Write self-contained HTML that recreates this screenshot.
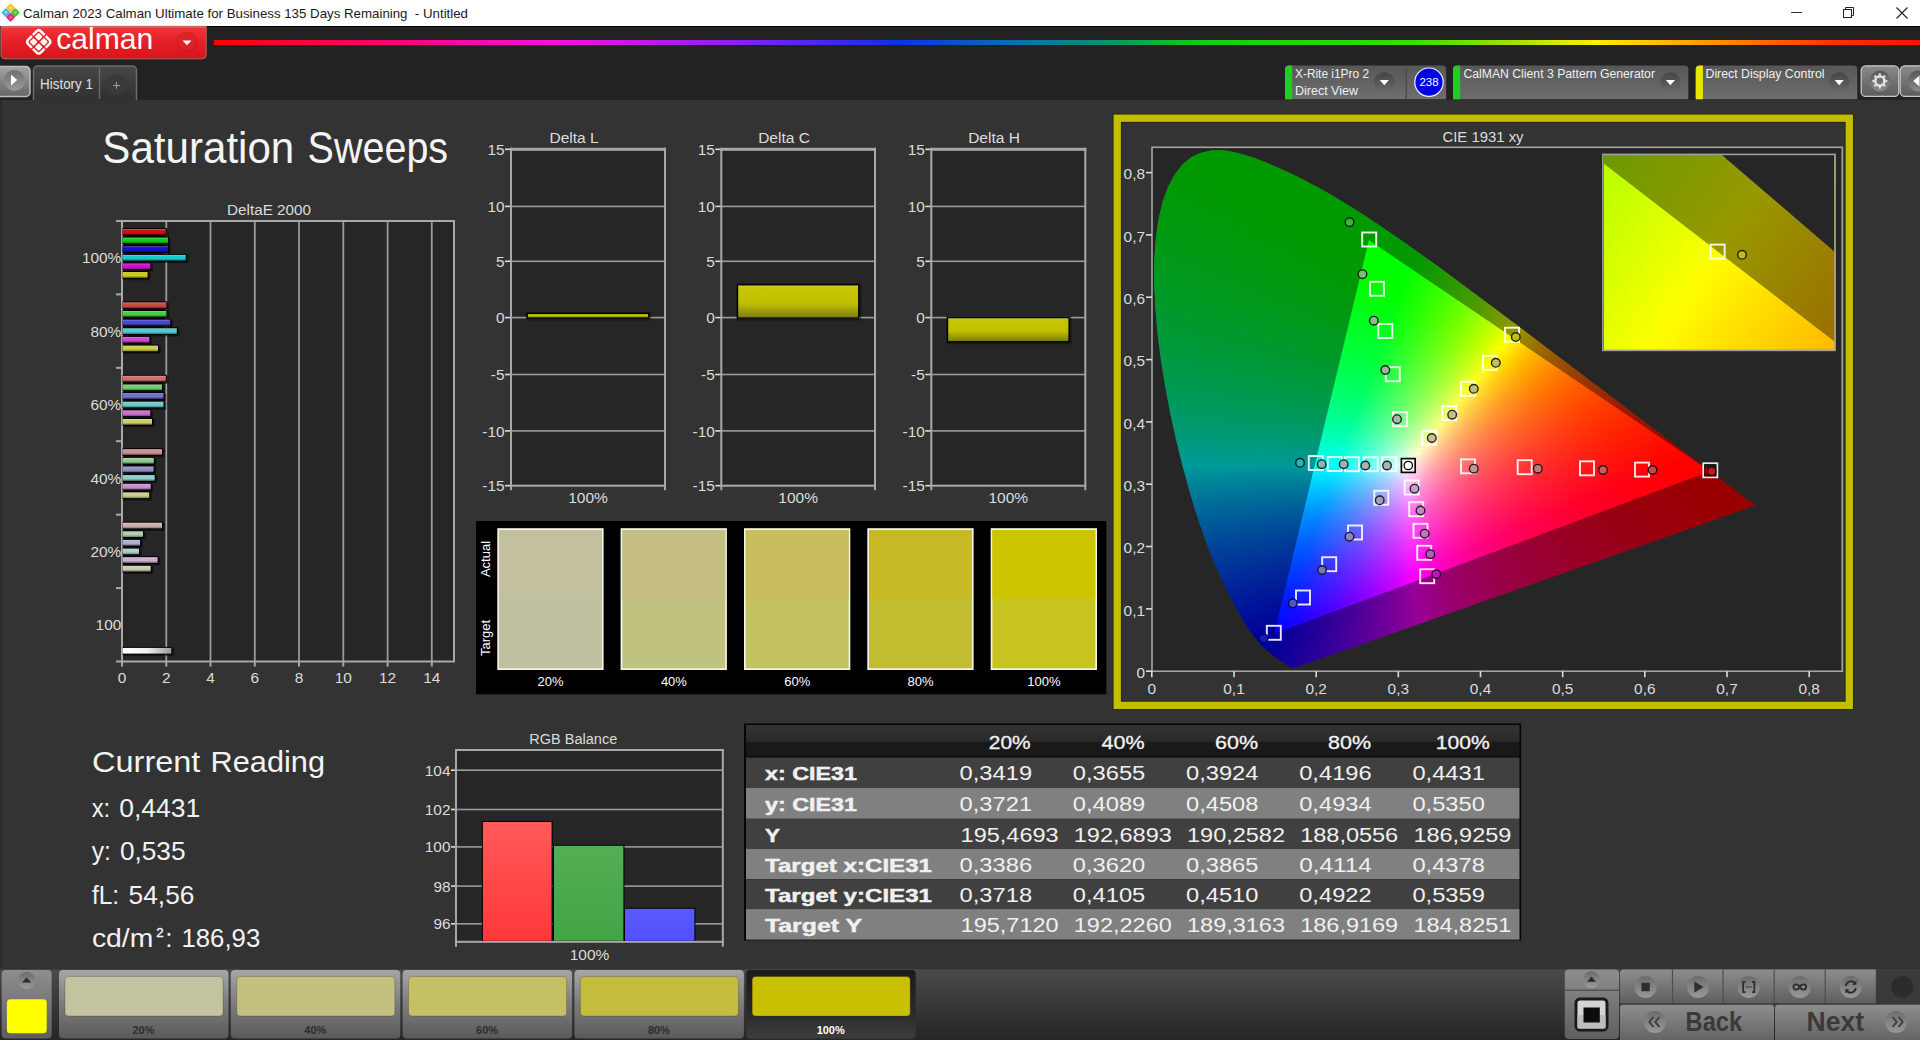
<!DOCTYPE html>
<html><head><meta charset="utf-8"><title>Calman</title>
<style>
html,body{margin:0;padding:0;background:#333;overflow:hidden}
body{width:1920px;height:1040px;position:relative;font-family:"Liberation Sans",sans-serif}
svg{position:absolute;left:0;top:0;font-family:"Liberation Sans",sans-serif}
.cie{position:absolute;overflow:hidden}
.cie i{display:block;height:2px}
.cie i.q{height:4px}
</style></head><body>
<svg width="1920" height="1040" viewBox="0 0 1920 1040">
<defs>
<linearGradient id="g1" x1="0" y1="0" x2="0" y2="1"><stop offset="0" stop-color="rgb(222, 100, 100)"/><stop offset="0.25" stop-color="rgb(205, 18, 18)"/><stop offset="0.6" stop-color="rgb(205, 18, 18)"/><stop offset="1" stop-color="rgb(127, 11, 11)"/></linearGradient>
<linearGradient id="g2" x1="0" y1="0" x2="0" y2="1"><stop offset="0" stop-color="rgb(100, 222, 100)"/><stop offset="0.25" stop-color="rgb(18, 205, 18)"/><stop offset="0.6" stop-color="rgb(18, 205, 18)"/><stop offset="1" stop-color="rgb(11, 127, 11)"/></linearGradient>
<linearGradient id="g3" x1="0" y1="0" x2="0" y2="1"><stop offset="0" stop-color="rgb(100, 100, 222)"/><stop offset="0.25" stop-color="rgb(18, 18, 205)"/><stop offset="0.6" stop-color="rgb(18, 18, 205)"/><stop offset="1" stop-color="rgb(11, 11, 127)"/></linearGradient>
<linearGradient id="g4" x1="0" y1="0" x2="0" y2="1"><stop offset="0" stop-color="rgb(100, 222, 222)"/><stop offset="0.25" stop-color="rgb(18, 205, 205)"/><stop offset="0.6" stop-color="rgb(18, 205, 205)"/><stop offset="1" stop-color="rgb(11, 127, 127)"/></linearGradient>
<linearGradient id="g5" x1="0" y1="0" x2="0" y2="1"><stop offset="0" stop-color="rgb(222, 100, 222)"/><stop offset="0.25" stop-color="rgb(205, 18, 205)"/><stop offset="0.6" stop-color="rgb(205, 18, 205)"/><stop offset="1" stop-color="rgb(127, 11, 127)"/></linearGradient>
<linearGradient id="g6" x1="0" y1="0" x2="0" y2="1"><stop offset="0" stop-color="rgb(222, 222, 100)"/><stop offset="0.25" stop-color="rgb(205, 205, 18)"/><stop offset="0.6" stop-color="rgb(205, 205, 18)"/><stop offset="1" stop-color="rgb(127, 127, 11)"/></linearGradient>
<linearGradient id="g7" x1="0" y1="0" x2="0" y2="1"><stop offset="0" stop-color="rgb(222, 136, 136)"/><stop offset="0.25" stop-color="rgb(205, 73, 73)"/><stop offset="0.6" stop-color="rgb(205, 73, 73)"/><stop offset="1" stop-color="rgb(127, 45, 45)"/></linearGradient>
<linearGradient id="g8" x1="0" y1="0" x2="0" y2="1"><stop offset="0" stop-color="rgb(136, 222, 136)"/><stop offset="0.25" stop-color="rgb(73, 205, 73)"/><stop offset="0.6" stop-color="rgb(73, 205, 73)"/><stop offset="1" stop-color="rgb(45, 127, 45)"/></linearGradient>
<linearGradient id="g9" x1="0" y1="0" x2="0" y2="1"><stop offset="0" stop-color="rgb(136, 136, 222)"/><stop offset="0.25" stop-color="rgb(73, 73, 205)"/><stop offset="0.6" stop-color="rgb(73, 73, 205)"/><stop offset="1" stop-color="rgb(45, 45, 127)"/></linearGradient>
<linearGradient id="g10" x1="0" y1="0" x2="0" y2="1"><stop offset="0" stop-color="rgb(136, 222, 222)"/><stop offset="0.25" stop-color="rgb(73, 205, 205)"/><stop offset="0.6" stop-color="rgb(73, 205, 205)"/><stop offset="1" stop-color="rgb(45, 127, 127)"/></linearGradient>
<linearGradient id="g11" x1="0" y1="0" x2="0" y2="1"><stop offset="0" stop-color="rgb(222, 136, 222)"/><stop offset="0.25" stop-color="rgb(205, 73, 205)"/><stop offset="0.6" stop-color="rgb(205, 73, 205)"/><stop offset="1" stop-color="rgb(127, 45, 127)"/></linearGradient>
<linearGradient id="g12" x1="0" y1="0" x2="0" y2="1"><stop offset="0" stop-color="rgb(222, 222, 136)"/><stop offset="0.25" stop-color="rgb(205, 205, 73)"/><stop offset="0.6" stop-color="rgb(205, 205, 73)"/><stop offset="1" stop-color="rgb(127, 127, 45)"/></linearGradient>
<linearGradient id="g13" x1="0" y1="0" x2="0" y2="1"><stop offset="0" stop-color="rgb(222, 162, 162)"/><stop offset="0.25" stop-color="rgb(205, 112, 112)"/><stop offset="0.6" stop-color="rgb(205, 112, 112)"/><stop offset="1" stop-color="rgb(127, 69, 69)"/></linearGradient>
<linearGradient id="g14" x1="0" y1="0" x2="0" y2="1"><stop offset="0" stop-color="rgb(162, 222, 162)"/><stop offset="0.25" stop-color="rgb(112, 205, 112)"/><stop offset="0.6" stop-color="rgb(112, 205, 112)"/><stop offset="1" stop-color="rgb(69, 127, 69)"/></linearGradient>
<linearGradient id="g15" x1="0" y1="0" x2="0" y2="1"><stop offset="0" stop-color="rgb(162, 162, 222)"/><stop offset="0.25" stop-color="rgb(112, 112, 205)"/><stop offset="0.6" stop-color="rgb(112, 112, 205)"/><stop offset="1" stop-color="rgb(69, 69, 127)"/></linearGradient>
<linearGradient id="g16" x1="0" y1="0" x2="0" y2="1"><stop offset="0" stop-color="rgb(162, 222, 222)"/><stop offset="0.25" stop-color="rgb(112, 205, 205)"/><stop offset="0.6" stop-color="rgb(112, 205, 205)"/><stop offset="1" stop-color="rgb(69, 127, 127)"/></linearGradient>
<linearGradient id="g17" x1="0" y1="0" x2="0" y2="1"><stop offset="0" stop-color="rgb(222, 162, 222)"/><stop offset="0.25" stop-color="rgb(205, 112, 205)"/><stop offset="0.6" stop-color="rgb(205, 112, 205)"/><stop offset="1" stop-color="rgb(127, 69, 127)"/></linearGradient>
<linearGradient id="g18" x1="0" y1="0" x2="0" y2="1"><stop offset="0" stop-color="rgb(222, 222, 162)"/><stop offset="0.25" stop-color="rgb(205, 205, 112)"/><stop offset="0.6" stop-color="rgb(205, 205, 112)"/><stop offset="1" stop-color="rgb(127, 127, 69)"/></linearGradient>
<linearGradient id="g19" x1="0" y1="0" x2="0" y2="1"><stop offset="0" stop-color="rgb(222, 183, 183)"/><stop offset="0.25" stop-color="rgb(205, 145, 145)"/><stop offset="0.6" stop-color="rgb(205, 145, 145)"/><stop offset="1" stop-color="rgb(127, 89, 89)"/></linearGradient>
<linearGradient id="g20" x1="0" y1="0" x2="0" y2="1"><stop offset="0" stop-color="rgb(183, 222, 183)"/><stop offset="0.25" stop-color="rgb(145, 205, 145)"/><stop offset="0.6" stop-color="rgb(145, 205, 145)"/><stop offset="1" stop-color="rgb(89, 127, 89)"/></linearGradient>
<linearGradient id="g21" x1="0" y1="0" x2="0" y2="1"><stop offset="0" stop-color="rgb(183, 183, 222)"/><stop offset="0.25" stop-color="rgb(145, 145, 205)"/><stop offset="0.6" stop-color="rgb(145, 145, 205)"/><stop offset="1" stop-color="rgb(89, 89, 127)"/></linearGradient>
<linearGradient id="g22" x1="0" y1="0" x2="0" y2="1"><stop offset="0" stop-color="rgb(183, 222, 222)"/><stop offset="0.25" stop-color="rgb(145, 205, 205)"/><stop offset="0.6" stop-color="rgb(145, 205, 205)"/><stop offset="1" stop-color="rgb(89, 127, 127)"/></linearGradient>
<linearGradient id="g23" x1="0" y1="0" x2="0" y2="1"><stop offset="0" stop-color="rgb(222, 183, 222)"/><stop offset="0.25" stop-color="rgb(205, 145, 205)"/><stop offset="0.6" stop-color="rgb(205, 145, 205)"/><stop offset="1" stop-color="rgb(127, 89, 127)"/></linearGradient>
<linearGradient id="g24" x1="0" y1="0" x2="0" y2="1"><stop offset="0" stop-color="rgb(222, 222, 183)"/><stop offset="0.25" stop-color="rgb(205, 205, 145)"/><stop offset="0.6" stop-color="rgb(205, 205, 145)"/><stop offset="1" stop-color="rgb(127, 127, 89)"/></linearGradient>
<linearGradient id="g25" x1="0" y1="0" x2="0" y2="1"><stop offset="0" stop-color="rgb(222, 203, 203)"/><stop offset="0.25" stop-color="rgb(205, 176, 176)"/><stop offset="0.6" stop-color="rgb(205, 176, 176)"/><stop offset="1" stop-color="rgb(127, 109, 109)"/></linearGradient>
<linearGradient id="g26" x1="0" y1="0" x2="0" y2="1"><stop offset="0" stop-color="rgb(203, 222, 203)"/><stop offset="0.25" stop-color="rgb(176, 205, 176)"/><stop offset="0.6" stop-color="rgb(176, 205, 176)"/><stop offset="1" stop-color="rgb(109, 127, 109)"/></linearGradient>
<linearGradient id="g27" x1="0" y1="0" x2="0" y2="1"><stop offset="0" stop-color="rgb(203, 203, 222)"/><stop offset="0.25" stop-color="rgb(176, 176, 205)"/><stop offset="0.6" stop-color="rgb(176, 176, 205)"/><stop offset="1" stop-color="rgb(109, 109, 127)"/></linearGradient>
<linearGradient id="g28" x1="0" y1="0" x2="0" y2="1"><stop offset="0" stop-color="rgb(203, 222, 222)"/><stop offset="0.25" stop-color="rgb(176, 205, 205)"/><stop offset="0.6" stop-color="rgb(176, 205, 205)"/><stop offset="1" stop-color="rgb(109, 127, 127)"/></linearGradient>
<linearGradient id="g29" x1="0" y1="0" x2="0" y2="1"><stop offset="0" stop-color="rgb(222, 203, 222)"/><stop offset="0.25" stop-color="rgb(205, 176, 205)"/><stop offset="0.6" stop-color="rgb(205, 176, 205)"/><stop offset="1" stop-color="rgb(127, 109, 127)"/></linearGradient>
<linearGradient id="g30" x1="0" y1="0" x2="0" y2="1"><stop offset="0" stop-color="rgb(222, 222, 203)"/><stop offset="0.25" stop-color="rgb(205, 205, 176)"/><stop offset="0.6" stop-color="rgb(205, 205, 176)"/><stop offset="1" stop-color="rgb(127, 127, 109)"/></linearGradient>
<linearGradient id="gw" x1="0" y1="0" x2="1" y2="0"><stop offset="0" stop-color="#fff"/><stop offset="0.5" stop-color="#f0f0f0"/><stop offset="1" stop-color="#9a9a9a"/></linearGradient>
<linearGradient id="gy" x1="0" y1="0" x2="0" y2="1"><stop offset="0" stop-color="#d6d640"/><stop offset="0.06" stop-color="#c6c606"/><stop offset="0.55" stop-color="#c0c000"/><stop offset="1" stop-color="#7e7e10"/></linearGradient>
<linearGradient id="gr" x1="0" y1="0" x2="0" y2="1"><stop offset="0" stop-color="#ff5a5a"/><stop offset="1" stop-color="#ff3838"/></linearGradient>
<linearGradient id="gg" x1="0" y1="0" x2="0" y2="1"><stop offset="0" stop-color="#52b052"/><stop offset="1" stop-color="#44a344"/></linearGradient>
<linearGradient id="gb" x1="0" y1="0" x2="0" y2="1"><stop offset="0" stop-color="#5a5aff"/><stop offset="1" stop-color="#5050ff"/></linearGradient>
<linearGradient id="gh" x1="0" y1="0" x2="0" y2="1"><stop offset="0" stop-color="#333"/><stop offset="0.5" stop-color="#2a2a2a"/><stop offset="0.53" stop-color="#1a1a1a"/><stop offset="0.92" stop-color="#181818"/><stop offset="1" stop-color="#0c0c0c"/></linearGradient>
</defs>
<rect x="0" y="100" width="1920" height="868" fill="#333"/>
<rect x="0" y="100" width="2" height="868" fill="#2a2a2a"/>
<rect x="0" y="0" width="1920" height="26" fill="#fff"/>
<g transform="translate(10.6,12.6)"><rect x="-3.3" y="-8" width="6.6" height="6.6" rx="1" transform="rotate(45 0 -4.7)" fill="#f3c326"/><rect x="-8" y="-3.3" width="6.6" height="6.6" rx="1" transform="rotate(45 -4.7 0)" fill="#3cb4ea"/><rect x="1.4" y="-3.3" width="6.6" height="6.6" rx="1" transform="rotate(45 4.7 0)" fill="#34c634"/><rect x="-3.3" y="1.4" width="6.6" height="6.6" rx="1" transform="rotate(45 0 4.7)" fill="#e2286c"/><rect x="-1.6" y="-6.3" width="3.2" height="3.2" transform="rotate(45 0 -4.7)" fill="#f8d860"/><rect x="-6.3" y="-1.6" width="3.2" height="3.2" transform="rotate(45 -4.7 0)" fill="#7cd4f4"/><rect x="3.1" y="-1.6" width="3.2" height="3.2" transform="rotate(45 4.7 0)" fill="#5ee05e"/><rect x="-1.6" y="3.1" width="3.2" height="3.2" transform="rotate(45 0 4.7)" fill="#f0508c"/></g>
<text x="23" y="17.5" font-size="12.8" text-anchor="start" fill="#1a1a1a" textLength="445" lengthAdjust="spacingAndGlyphs" xml:space="preserve">Calman 2023 Calman Ultimate for Business 135 Days Remaining  - Untitled</text>
<rect x="1791" y="12" width="11" height="1" fill="#333"/>
<rect x="1843.5" y="9.5" width="8" height="8" fill="none" stroke="#222" stroke-width="1"/>
<path d="M1845.5,9.5V7.5H1853.5V15.5H1851.5" fill="none" stroke="#222" stroke-width="1"/>
<path d="M1896.5,7.5L1907.5,18.5M1907.5,7.5L1896.5,18.5" stroke="#222" stroke-width="1.1"/>
<rect x="0" y="26" width="1920" height="74" fill="#222"/>
<defs><linearGradient id="rb" x1="0" y1="0" x2="0" y2="1"><stop offset="0" stop-color="#f0353a"/><stop offset="0.5" stop-color="#e51f25"/><stop offset="1" stop-color="#d4161c"/></linearGradient><linearGradient id="rain" x1="0" y1="0" x2="1" y2="0"><stop offset="0" stop-color="#ff0008"/><stop offset="0.1" stop-color="#ff0070"/><stop offset="0.2" stop-color="#f810e0"/><stop offset="0.3" stop-color="#9020f0"/><stop offset="0.4" stop-color="#1030e8"/><stop offset="0.47" stop-color="#0870b0"/><stop offset="0.52" stop-color="#089070"/><stop offset="0.58" stop-color="#10d010"/><stop offset="0.70" stop-color="#30e000"/><stop offset="0.76" stop-color="#a0e000"/><stop offset="0.81" stop-color="#fff000"/><stop offset="0.88" stop-color="#ff9000"/><stop offset="0.95" stop-color="#ff3000"/><stop offset="1" stop-color="#ff1000"/></linearGradient><linearGradient id="tb" x1="0" y1="0" x2="0" y2="1"><stop offset="0" stop-color="#575757"/><stop offset="1" stop-color="#6e6e6e"/></linearGradient><linearGradient id="dd" x1="0" y1="0" x2="0" y2="1"><stop offset="0" stop-color="#454545"/><stop offset="1" stop-color="#6a6a6a"/></linearGradient><linearGradient id="gbtn" x1="0" y1="0" x2="0" y2="1"><stop offset="0" stop-color="#8a8a8a"/><stop offset="1" stop-color="#5c5c5c"/></linearGradient><linearGradient id="gci" x1="0" y1="0" x2="0" y2="1"><stop offset="0" stop-color="#585858"/><stop offset="1" stop-color="#8a8a8a"/></linearGradient><linearGradient id="pbtn" x1="0" y1="0" x2="0" y2="1"><stop offset="0" stop-color="#a4a4a4"/><stop offset="1" stop-color="#666"/></linearGradient><linearGradient id="pci" x1="0" y1="0" x2="0" y2="1"><stop offset="0" stop-color="#707070"/><stop offset="1" stop-color="#9a9a9a"/></linearGradient><linearGradient id="hist" x1="0" y1="0" x2="0" y2="1"><stop offset="0" stop-color="#484848"/><stop offset="1" stop-color="#303030"/></linearGradient></defs>
<rect x="207" y="26" width="1713" height="1" fill="#050505"/>
<path d="M1,26.4H206.2V54.8a4,4 0 0 1 -4,4H5a4,4 0 0 1 -4,-4Z" fill="url(#rb)" stroke="#b46868" stroke-width="1"/>
<rect x="2" y="26.5" width="204" height="1.2" fill="#ff6a6a" opacity="0.7"/>
<g transform="translate(38.75,41.9) rotate(45) scale(1.1)"><rect x="-8.2" y="-8.2" width="16.4" height="16.4" rx="2.6" fill="none" stroke="#fff" stroke-width="2.3"/><rect x="-0.65" y="-9.8" width="1.3" height="3.2" fill="#e3262b"/><rect x="-0.65" y="6.6" width="1.3" height="3.2" fill="#dc1e24"/><rect x="-9.8" y="-0.65" width="3.2" height="1.3" fill="#e3262b"/><rect x="6.6" y="-0.65" width="3.2" height="1.3" fill="#dc1e24"/><rect x="-5.9" y="-5.9" width="5.2" height="5.2" rx="1" fill="#fff4f4"/><rect x="0.7" y="-5.9" width="5.2" height="5.2" rx="1" fill="#fff4f4"/><rect x="-5.9" y="0.7" width="5.2" height="5.2" rx="1" fill="#fff4f4"/><rect x="0.7" y="0.7" width="5.2" height="5.2" rx="1" fill="#fff4f4"/></g>
<text x="56.2" y="49.3" font-size="30" text-anchor="start" fill="#fff" textLength="97" lengthAdjust="spacingAndGlyphs">calman</text>
<circle cx="187" cy="42" r="10" fill="#c9141a"/><circle cx="187" cy="41.3" r="9.3" fill="#dd2228"/>
<path d="M182.5,40.5H191.5L187,45.3Z" fill="#fff"/>
<rect x="214" y="40" width="1706" height="5" fill="url(#rain)"/>
<rect x="-3" y="66.5" width="33" height="30" rx="4" fill="url(#pbtn)" stroke="#bdbdbd" stroke-width="1.5"/>
<circle cx="14.5" cy="80.3" r="10.4" fill="url(#pci)"/>
<path d="M11,74.5L17.2,80L11,85.5Z" fill="#fff"/>
<path d="M33.5,100V70a4,4 0 0 1 4,-4H132.5a4,4 0 0 1 4,4V100" fill="url(#hist)" stroke="#6c6c6c" stroke-width="1.5"/>
<rect x="98.8" y="67" width="1.4" height="32" fill="#686868"/>
<text x="40" y="88.5" font-size="14" text-anchor="start" fill="#e0e0e0" textLength="53" lengthAdjust="spacingAndGlyphs">History 1</text>
<circle cx="116.5" cy="84.5" r="10.5" fill="#3a3a3a"/>
<path d="M113,85.5H120M116.5,82V89" stroke="#9a9a9a" stroke-width="1"/>
<path d="M1285,99.3V69.5a4,4 0 0 1 4,-4H1442.2a4,4 0 0 1 4,4V99.3Z" fill="url(#tb)"/>
<path d="M1285,99.3V69.5a4,4 0 0 1 4,-4H1292.2V99.3Z" fill="#1ed01e"/>
<text x="1295" y="78.3" font-size="12.5" text-anchor="start" fill="#f0f0f0" textLength="74" lengthAdjust="spacingAndGlyphs">X-Rite i1Pro 2</text>
<text x="1295" y="94.7" font-size="12.5" text-anchor="start" fill="#f0f0f0" textLength="63" lengthAdjust="spacingAndGlyphs">Direct View</text>
<circle cx="1384.3" cy="82.6" r="10.3" fill="url(#dd)"/>
<path d="M1379.7,80.0H1388.8999999999999L1384.3,85.19999999999999Z" fill="#fff"/>
<rect x="1405.6" y="68" width="1.4" height="31" fill="#4c4c4c"/>
<circle cx="1429" cy="82.2" r="14.2" fill="#0000e6" stroke="#f0f0ff" stroke-width="1.2"/>
<text x="1429" y="86.2" font-size="11.5" text-anchor="middle" fill="#fff">238</text>
<path d="M1453,99.3V69.5a4,4 0 0 1 4,-4H1684.3a4,4 0 0 1 4,4V99.3Z" fill="url(#tb)"/>
<path d="M1453,99.3V69.5a4,4 0 0 1 4,-4H1460.2V99.3Z" fill="#1ed01e"/>
<text x="1463.4" y="78.3" font-size="12.5" text-anchor="start" fill="#f0f0f0" textLength="191.6" lengthAdjust="spacingAndGlyphs">CalMAN Client 3 Pattern Generator</text>
<circle cx="1670.4" cy="82.6" r="10.3" fill="url(#dd)"/>
<path d="M1665.8000000000002,80.0H1675.0L1670.4,85.19999999999999Z" fill="#fff"/>
<path d="M1695.7,99.3V69.5a4,4 0 0 1 4,-4H1853.3a4,4 0 0 1 4,4V99.3Z" fill="url(#tb)"/>
<path d="M1695.7,99.3V69.5a4,4 0 0 1 4,-4H1702.9V99.3Z" fill="#e6e600"/>
<text x="1705.5" y="78.3" font-size="12.5" text-anchor="start" fill="#f0f0f0" textLength="119" lengthAdjust="spacingAndGlyphs">Direct Display Control</text>
<circle cx="1839.2" cy="82.6" r="10.3" fill="url(#dd)"/>
<path d="M1834.6000000000001,80.0H1843.8L1839.2,85.19999999999999Z" fill="#fff"/>
<rect x="1861.2" y="65.8" width="37.6" height="30.6" rx="4.5" fill="url(#gbtn)" stroke="#c8c8c8" stroke-width="1.3"/>
<circle cx="1879.8" cy="81" r="10.4" fill="url(#gci)"/>
<g transform="translate(1879.8,81)" fill="none" stroke="#e2e2e2"><circle r="4.5" stroke-width="2.3"/><path d="M-1.8,-5.3L-0.6,-7.7H0.6L1.8,-5.3Z" fill="#e2e2e2" stroke="none" transform="rotate(0)"/><path d="M-1.8,-5.3L-0.6,-7.7H0.6L1.8,-5.3Z" fill="#e2e2e2" stroke="none" transform="rotate(45)"/><path d="M-1.8,-5.3L-0.6,-7.7H0.6L1.8,-5.3Z" fill="#e2e2e2" stroke="none" transform="rotate(90)"/><path d="M-1.8,-5.3L-0.6,-7.7H0.6L1.8,-5.3Z" fill="#e2e2e2" stroke="none" transform="rotate(135)"/><path d="M-1.8,-5.3L-0.6,-7.7H0.6L1.8,-5.3Z" fill="#e2e2e2" stroke="none" transform="rotate(180)"/><path d="M-1.8,-5.3L-0.6,-7.7H0.6L1.8,-5.3Z" fill="#e2e2e2" stroke="none" transform="rotate(225)"/><path d="M-1.8,-5.3L-0.6,-7.7H0.6L1.8,-5.3Z" fill="#e2e2e2" stroke="none" transform="rotate(270)"/><path d="M-1.8,-5.3L-0.6,-7.7H0.6L1.8,-5.3Z" fill="#e2e2e2" stroke="none" transform="rotate(315)"/></g>
<rect x="1900.2" y="65.8" width="30" height="30.6" rx="4.5" fill="url(#gbtn)" stroke="#c8c8c8" stroke-width="1.3"/>
<circle cx="1918" cy="81" r="10.4" fill="url(#gci)"/>
<path d="M1919.5,75.5V86.5L1913.2,81Z" fill="#fff"/>
<rect x="1117.25" y="118.2" width="732.05" height="587.2" fill="#333" stroke="#2c2a05" stroke-width="9.1"/>
<rect x="1117.25" y="118.2" width="732.05" height="587.2" fill="none" stroke="#c4be02" stroke-width="7.3"/>
<rect x="1152" y="147.3" width="690.3" height="523.9000000000001" fill="#262626"/>
<text x="102.3" y="162.6" font-size="44" text-anchor="start" fill="#f4f4f4" textLength="192" lengthAdjust="spacingAndGlyphs">Saturation</text>
<text x="307.6" y="162.6" font-size="44" text-anchor="start" fill="#f4f4f4" textLength="140.5" lengthAdjust="spacingAndGlyphs">Sweeps</text>
<rect x="122" y="221" width="332" height="440.5" fill="#262626"/>
<rect x="165.4" y="221" width="1.8" height="440.5" fill="#9a9a9a"/>
<text x="166.3" y="683.4" font-size="15.4" text-anchor="middle" fill="#dcdcdc">2</text>
<rect x="209.6" y="221" width="1.8" height="440.5" fill="#9a9a9a"/>
<text x="210.5" y="683.4" font-size="15.4" text-anchor="middle" fill="#dcdcdc">4</text>
<rect x="253.9" y="221" width="1.8" height="440.5" fill="#9a9a9a"/>
<text x="254.8" y="683.4" font-size="15.4" text-anchor="middle" fill="#dcdcdc">6</text>
<rect x="298.1" y="221" width="1.8" height="440.5" fill="#9a9a9a"/>
<text x="299.0" y="683.4" font-size="15.4" text-anchor="middle" fill="#dcdcdc">8</text>
<rect x="342.4" y="221" width="1.8" height="440.5" fill="#9a9a9a"/>
<text x="343.3" y="683.4" font-size="15.4" text-anchor="middle" fill="#dcdcdc">10</text>
<rect x="386.7" y="221" width="1.8" height="440.5" fill="#9a9a9a"/>
<text x="387.6" y="683.4" font-size="15.4" text-anchor="middle" fill="#dcdcdc">12</text>
<rect x="430.9" y="221" width="1.8" height="440.5" fill="#9a9a9a"/>
<text x="431.8" y="683.4" font-size="15.4" text-anchor="middle" fill="#dcdcdc">14</text>
<text x="122" y="683.4" font-size="15.4" text-anchor="middle" fill="#dcdcdc">0</text>
<rect x="121" y="220" width="2" height="446.5" fill="#a8a8a8"/>
<rect x="116" y="220" width="339" height="2" fill="#a8a8a8"/>
<rect x="453" y="220" width="2" height="441.5" fill="#a8a8a8"/>
<rect x="116" y="660.5" width="339" height="2" fill="#a8a8a8"/>
<rect x="165.3" y="661.5" width="2" height="5" fill="#a8a8a8"/>
<rect x="209.5" y="661.5" width="2" height="5" fill="#a8a8a8"/>
<rect x="253.8" y="661.5" width="2" height="5" fill="#a8a8a8"/>
<rect x="298.0" y="661.5" width="2" height="5" fill="#a8a8a8"/>
<rect x="342.3" y="661.5" width="2" height="5" fill="#a8a8a8"/>
<rect x="386.6" y="661.5" width="2" height="5" fill="#a8a8a8"/>
<rect x="430.8" y="661.5" width="2" height="5" fill="#a8a8a8"/>
<rect x="116" y="293.4" width="6" height="2" fill="#a8a8a8"/>
<rect x="116" y="366.8" width="6" height="2" fill="#a8a8a8"/>
<rect x="116" y="440.2" width="6" height="2" fill="#a8a8a8"/>
<rect x="116" y="513.7" width="6" height="2" fill="#a8a8a8"/>
<rect x="116" y="587.1" width="6" height="2" fill="#a8a8a8"/>
<text x="269" y="215" font-size="15.5" text-anchor="middle" fill="#dcdcdc" textLength="84" lengthAdjust="spacingAndGlyphs">DeltaE 2000</text>
<text x="121.3" y="263.3" font-size="15.4" text-anchor="end" fill="#dcdcdc">100%</text>
<text x="121.3" y="336.7" font-size="15.4" text-anchor="end" fill="#dcdcdc">80%</text>
<text x="121.3" y="410.1" font-size="15.4" text-anchor="end" fill="#dcdcdc">60%</text>
<text x="121.3" y="483.6" font-size="15.4" text-anchor="end" fill="#dcdcdc">40%</text>
<text x="121.3" y="557.0" font-size="15.4" text-anchor="end" fill="#dcdcdc">20%</text>
<text x="121.3" y="630.4" font-size="15.4" text-anchor="end" fill="#dcdcdc">100</text>
<rect x="123.5" y="229.4" width="45.1" height="7.8" fill="#000" opacity="0.45"/>
<rect x="122.5" y="228.0" width="44.3" height="7.7" fill="#000"/>
<rect x="122.5" y="229.0" width="43.3" height="5.7" fill="url(#g1)"/>
<rect x="123.5" y="238.0" width="47.3" height="7.8" fill="#000" opacity="0.45"/>
<rect x="122.5" y="236.6" width="46.5" height="7.7" fill="#000"/>
<rect x="122.5" y="237.6" width="45.5" height="5.7" fill="url(#g2)"/>
<rect x="123.5" y="246.7" width="47.3" height="7.8" fill="#000" opacity="0.45"/>
<rect x="122.5" y="245.3" width="46.5" height="7.7" fill="#000"/>
<rect x="122.5" y="246.3" width="45.5" height="5.7" fill="url(#g3)"/>
<rect x="123.5" y="255.3" width="65.0" height="7.8" fill="#000" opacity="0.45"/>
<rect x="122.5" y="253.9" width="64.2" height="7.7" fill="#000"/>
<rect x="122.5" y="254.9" width="63.2" height="5.7" fill="url(#g4)"/>
<rect x="123.5" y="263.9" width="29.6" height="7.8" fill="#000" opacity="0.45"/>
<rect x="122.5" y="262.5" width="28.8" height="7.7" fill="#000"/>
<rect x="122.5" y="263.5" width="27.8" height="5.7" fill="url(#g5)"/>
<rect x="123.5" y="272.5" width="26.9" height="7.8" fill="#000" opacity="0.45"/>
<rect x="122.5" y="271.1" width="26.1" height="7.7" fill="#000"/>
<rect x="122.5" y="272.1" width="25.1" height="5.7" fill="url(#g6)"/>
<rect x="123.5" y="302.8" width="45.7" height="7.8" fill="#000" opacity="0.45"/>
<rect x="122.5" y="301.4" width="44.9" height="7.7" fill="#000"/>
<rect x="122.5" y="302.4" width="43.9" height="5.7" fill="url(#g7)"/>
<rect x="123.5" y="311.4" width="45.7" height="7.8" fill="#000" opacity="0.45"/>
<rect x="122.5" y="310.0" width="44.9" height="7.7" fill="#000"/>
<rect x="122.5" y="311.0" width="43.9" height="5.7" fill="url(#g8)"/>
<rect x="123.5" y="320.1" width="49.5" height="7.8" fill="#000" opacity="0.45"/>
<rect x="122.5" y="318.7" width="48.7" height="7.7" fill="#000"/>
<rect x="122.5" y="319.7" width="47.7" height="5.7" fill="url(#g9)"/>
<rect x="123.5" y="328.7" width="56.1" height="7.8" fill="#000" opacity="0.45"/>
<rect x="122.5" y="327.3" width="55.3" height="7.7" fill="#000"/>
<rect x="122.5" y="328.3" width="54.3" height="5.7" fill="url(#g10)"/>
<rect x="123.5" y="337.3" width="28.7" height="7.8" fill="#000" opacity="0.45"/>
<rect x="122.5" y="335.9" width="27.9" height="7.7" fill="#000"/>
<rect x="122.5" y="336.9" width="26.9" height="5.7" fill="url(#g11)"/>
<rect x="123.5" y="346.0" width="37.3" height="7.8" fill="#000" opacity="0.45"/>
<rect x="122.5" y="344.6" width="36.5" height="7.7" fill="#000"/>
<rect x="122.5" y="345.6" width="35.5" height="5.7" fill="url(#g12)"/>
<rect x="123.5" y="376.2" width="45.1" height="7.8" fill="#000" opacity="0.45"/>
<rect x="122.5" y="374.8" width="44.3" height="7.7" fill="#000"/>
<rect x="122.5" y="375.8" width="43.3" height="5.7" fill="url(#g13)"/>
<rect x="123.5" y="384.9" width="41.3" height="7.8" fill="#000" opacity="0.45"/>
<rect x="122.5" y="383.5" width="40.5" height="7.7" fill="#000"/>
<rect x="122.5" y="384.5" width="39.5" height="5.7" fill="url(#g14)"/>
<rect x="123.5" y="393.5" width="42.8" height="7.8" fill="#000" opacity="0.45"/>
<rect x="122.5" y="392.1" width="42.0" height="7.7" fill="#000"/>
<rect x="122.5" y="393.1" width="41.0" height="5.7" fill="url(#g15)"/>
<rect x="123.5" y="402.1" width="42.8" height="7.8" fill="#000" opacity="0.45"/>
<rect x="122.5" y="400.7" width="42.0" height="7.7" fill="#000"/>
<rect x="122.5" y="401.7" width="41.0" height="5.7" fill="url(#g16)"/>
<rect x="123.5" y="410.8" width="29.6" height="7.8" fill="#000" opacity="0.45"/>
<rect x="122.5" y="409.4" width="28.8" height="7.7" fill="#000"/>
<rect x="122.5" y="410.4" width="27.8" height="5.7" fill="url(#g17)"/>
<rect x="123.5" y="419.4" width="31.3" height="7.8" fill="#000" opacity="0.45"/>
<rect x="122.5" y="418.0" width="30.5" height="7.7" fill="#000"/>
<rect x="122.5" y="419.0" width="29.5" height="5.7" fill="url(#g18)"/>
<rect x="123.5" y="449.6" width="41.3" height="7.8" fill="#000" opacity="0.45"/>
<rect x="122.5" y="448.2" width="40.5" height="7.7" fill="#000"/>
<rect x="122.5" y="449.2" width="39.5" height="5.7" fill="url(#g19)"/>
<rect x="123.5" y="458.3" width="33.1" height="7.8" fill="#000" opacity="0.45"/>
<rect x="122.5" y="456.9" width="32.3" height="7.7" fill="#000"/>
<rect x="122.5" y="457.9" width="31.3" height="5.7" fill="url(#g20)"/>
<rect x="123.5" y="466.9" width="32.9" height="7.8" fill="#000" opacity="0.45"/>
<rect x="122.5" y="465.5" width="32.1" height="7.7" fill="#000"/>
<rect x="122.5" y="466.5" width="31.1" height="5.7" fill="url(#g21)"/>
<rect x="123.5" y="475.5" width="34.0" height="7.8" fill="#000" opacity="0.45"/>
<rect x="122.5" y="474.1" width="33.2" height="7.7" fill="#000"/>
<rect x="122.5" y="475.1" width="32.2" height="5.7" fill="url(#g22)"/>
<rect x="123.5" y="484.2" width="30.0" height="7.8" fill="#000" opacity="0.45"/>
<rect x="122.5" y="482.8" width="29.2" height="7.7" fill="#000"/>
<rect x="122.5" y="483.8" width="28.2" height="5.7" fill="url(#g23)"/>
<rect x="123.5" y="492.8" width="28.5" height="7.8" fill="#000" opacity="0.45"/>
<rect x="122.5" y="491.4" width="27.7" height="7.7" fill="#000"/>
<rect x="122.5" y="492.4" width="26.7" height="5.7" fill="url(#g24)"/>
<rect x="123.5" y="523.1" width="41.3" height="7.8" fill="#000" opacity="0.45"/>
<rect x="122.5" y="521.7" width="40.5" height="7.7" fill="#000"/>
<rect x="122.5" y="522.7" width="39.5" height="5.7" fill="url(#g25)"/>
<rect x="123.5" y="531.7" width="22.3" height="7.8" fill="#000" opacity="0.45"/>
<rect x="122.5" y="530.3" width="21.5" height="7.7" fill="#000"/>
<rect x="122.5" y="531.3" width="20.5" height="5.7" fill="url(#g26)"/>
<rect x="123.5" y="540.3" width="19.4" height="7.8" fill="#000" opacity="0.45"/>
<rect x="122.5" y="538.9" width="18.6" height="7.7" fill="#000"/>
<rect x="122.5" y="539.9" width="17.6" height="5.7" fill="url(#g27)"/>
<rect x="123.5" y="549.0" width="18.3" height="7.8" fill="#000" opacity="0.45"/>
<rect x="122.5" y="547.6" width="17.5" height="7.7" fill="#000"/>
<rect x="122.5" y="548.6" width="16.5" height="5.7" fill="url(#g28)"/>
<rect x="123.5" y="557.6" width="36.9" height="7.8" fill="#000" opacity="0.45"/>
<rect x="122.5" y="556.2" width="36.1" height="7.7" fill="#000"/>
<rect x="122.5" y="557.2" width="35.1" height="5.7" fill="url(#g29)"/>
<rect x="123.5" y="566.2" width="30.0" height="7.8" fill="#000" opacity="0.45"/>
<rect x="122.5" y="564.8" width="29.2" height="7.7" fill="#000"/>
<rect x="122.5" y="565.8" width="28.2" height="5.7" fill="url(#g30)"/>
<rect x="123.5" y="648.3" width="50.6" height="7.8" fill="#000" opacity="0.45"/>
<rect x="122.5" y="646.9" width="49.8" height="7.7" fill="#000"/>
<rect x="122.5" y="647.9" width="48.8" height="5.7" fill="url(#gw)"/>
<rect x="511" y="149.3" width="154" height="336.4" fill="#262626"/>
<rect x="511" y="205.6" width="154" height="1.6" fill="#9a9a9a"/>
<rect x="511" y="260.5" width="154" height="1.6" fill="#9a9a9a"/>
<rect x="511" y="316.8" width="154" height="1.6" fill="#9a9a9a"/>
<rect x="511" y="373.7" width="154" height="1.6" fill="#9a9a9a"/>
<rect x="511" y="430.1" width="154" height="1.6" fill="#9a9a9a"/>
<rect x="505" y="148.5" width="6" height="1.6" fill="#dcdcdc"/>
<text x="504.5" y="154.9" font-size="15.4" text-anchor="end" fill="#dcdcdc">15</text>
<rect x="505" y="205.6" width="6" height="1.6" fill="#dcdcdc"/>
<text x="504.5" y="212.0" font-size="15.4" text-anchor="end" fill="#dcdcdc">10</text>
<rect x="505" y="260.5" width="6" height="1.6" fill="#dcdcdc"/>
<text x="504.5" y="266.9" font-size="15.4" text-anchor="end" fill="#dcdcdc">5</text>
<rect x="505" y="316.8" width="6" height="1.6" fill="#dcdcdc"/>
<text x="504.5" y="323.2" font-size="15.4" text-anchor="end" fill="#dcdcdc">0</text>
<rect x="505" y="373.7" width="6" height="1.6" fill="#dcdcdc"/>
<text x="504.5" y="380.1" font-size="15.4" text-anchor="end" fill="#dcdcdc">-5</text>
<rect x="505" y="430.1" width="6" height="1.6" fill="#dcdcdc"/>
<text x="504.5" y="436.5" font-size="15.4" text-anchor="end" fill="#dcdcdc">-10</text>
<rect x="505" y="484.9" width="6" height="1.6" fill="#dcdcdc"/>
<text x="504.5" y="491.3" font-size="15.4" text-anchor="end" fill="#dcdcdc">-15</text>
<rect x="510" y="147.8" width="2" height="342.4" fill="#a8a8a8"/>
<rect x="664" y="147.8" width="2" height="342.4" fill="#a8a8a8"/>
<rect x="510" y="147.8" width="156" height="3" fill="#a8a8a8"/>
<rect x="510" y="484.7" width="156" height="2" fill="#a8a8a8"/>
<text x="574" y="143" font-size="15.5" text-anchor="middle" fill="#dcdcdc">Delta L</text>
<text x="588.0" y="502.5" font-size="15.5" text-anchor="middle" fill="#dcdcdc">100%</text>
<rect x="525.7" y="311.9" width="125.6" height="8.7" fill="#000" opacity="0.35"/>
<rect x="526.7" y="312.9" width="122.6" height="5.7" fill="#000"/>
<rect x="527.9" y="314.1" width="120.2" height="3.3" fill="url(#gy)"/>
<rect x="721.3" y="149.3" width="153.70000000000005" height="336.4" fill="#262626"/>
<rect x="721.3" y="205.6" width="153.70000000000005" height="1.6" fill="#9a9a9a"/>
<rect x="721.3" y="260.5" width="153.70000000000005" height="1.6" fill="#9a9a9a"/>
<rect x="721.3" y="316.8" width="153.70000000000005" height="1.6" fill="#9a9a9a"/>
<rect x="721.3" y="373.7" width="153.70000000000005" height="1.6" fill="#9a9a9a"/>
<rect x="721.3" y="430.1" width="153.70000000000005" height="1.6" fill="#9a9a9a"/>
<rect x="715.3" y="148.5" width="6" height="1.6" fill="#dcdcdc"/>
<text x="714.8" y="154.9" font-size="15.4" text-anchor="end" fill="#dcdcdc">15</text>
<rect x="715.3" y="205.6" width="6" height="1.6" fill="#dcdcdc"/>
<text x="714.8" y="212.0" font-size="15.4" text-anchor="end" fill="#dcdcdc">10</text>
<rect x="715.3" y="260.5" width="6" height="1.6" fill="#dcdcdc"/>
<text x="714.8" y="266.9" font-size="15.4" text-anchor="end" fill="#dcdcdc">5</text>
<rect x="715.3" y="316.8" width="6" height="1.6" fill="#dcdcdc"/>
<text x="714.8" y="323.2" font-size="15.4" text-anchor="end" fill="#dcdcdc">0</text>
<rect x="715.3" y="373.7" width="6" height="1.6" fill="#dcdcdc"/>
<text x="714.8" y="380.1" font-size="15.4" text-anchor="end" fill="#dcdcdc">-5</text>
<rect x="715.3" y="430.1" width="6" height="1.6" fill="#dcdcdc"/>
<text x="714.8" y="436.5" font-size="15.4" text-anchor="end" fill="#dcdcdc">-10</text>
<rect x="715.3" y="484.9" width="6" height="1.6" fill="#dcdcdc"/>
<text x="714.8" y="491.3" font-size="15.4" text-anchor="end" fill="#dcdcdc">-15</text>
<rect x="720.3" y="147.8" width="2" height="342.4" fill="#a8a8a8"/>
<rect x="874" y="147.8" width="2" height="342.4" fill="#a8a8a8"/>
<rect x="720.3" y="147.8" width="155.70000000000005" height="3" fill="#a8a8a8"/>
<rect x="720.3" y="484.7" width="155.70000000000005" height="2" fill="#a8a8a8"/>
<text x="784" y="143" font-size="15.5" text-anchor="middle" fill="#dcdcdc">Delta C</text>
<text x="798.15" y="502.5" font-size="15.5" text-anchor="middle" fill="#dcdcdc">100%</text>
<rect x="736.0" y="283.3" width="125.3" height="37.3" fill="#000" opacity="0.35"/>
<rect x="737.0" y="284.3" width="122.3" height="34.3" fill="#000"/>
<rect x="738.2" y="285.5" width="119.9" height="31.9" fill="url(#gy)"/>
<rect x="931.3" y="149.3" width="154.0" height="336.4" fill="#262626"/>
<rect x="931.3" y="205.6" width="154.0" height="1.6" fill="#9a9a9a"/>
<rect x="931.3" y="260.5" width="154.0" height="1.6" fill="#9a9a9a"/>
<rect x="931.3" y="316.8" width="154.0" height="1.6" fill="#9a9a9a"/>
<rect x="931.3" y="373.7" width="154.0" height="1.6" fill="#9a9a9a"/>
<rect x="931.3" y="430.1" width="154.0" height="1.6" fill="#9a9a9a"/>
<rect x="925.3" y="148.5" width="6" height="1.6" fill="#dcdcdc"/>
<text x="924.8" y="154.9" font-size="15.4" text-anchor="end" fill="#dcdcdc">15</text>
<rect x="925.3" y="205.6" width="6" height="1.6" fill="#dcdcdc"/>
<text x="924.8" y="212.0" font-size="15.4" text-anchor="end" fill="#dcdcdc">10</text>
<rect x="925.3" y="260.5" width="6" height="1.6" fill="#dcdcdc"/>
<text x="924.8" y="266.9" font-size="15.4" text-anchor="end" fill="#dcdcdc">5</text>
<rect x="925.3" y="316.8" width="6" height="1.6" fill="#dcdcdc"/>
<text x="924.8" y="323.2" font-size="15.4" text-anchor="end" fill="#dcdcdc">0</text>
<rect x="925.3" y="373.7" width="6" height="1.6" fill="#dcdcdc"/>
<text x="924.8" y="380.1" font-size="15.4" text-anchor="end" fill="#dcdcdc">-5</text>
<rect x="925.3" y="430.1" width="6" height="1.6" fill="#dcdcdc"/>
<text x="924.8" y="436.5" font-size="15.4" text-anchor="end" fill="#dcdcdc">-10</text>
<rect x="925.3" y="484.9" width="6" height="1.6" fill="#dcdcdc"/>
<text x="924.8" y="491.3" font-size="15.4" text-anchor="end" fill="#dcdcdc">-15</text>
<rect x="930.3" y="147.8" width="2" height="342.4" fill="#a8a8a8"/>
<rect x="1084.3" y="147.8" width="2" height="342.4" fill="#a8a8a8"/>
<rect x="930.3" y="147.8" width="156.0" height="3" fill="#a8a8a8"/>
<rect x="930.3" y="484.7" width="156.0" height="2" fill="#a8a8a8"/>
<text x="994" y="143" font-size="15.5" text-anchor="middle" fill="#dcdcdc">Delta H</text>
<text x="1008.3" y="502.5" font-size="15.5" text-anchor="middle" fill="#dcdcdc">100%</text>
<rect x="946.0" y="316.1" width="125.6" height="28.2" fill="#000" opacity="0.35"/>
<rect x="947.0" y="317.1" width="122.6" height="25.2" fill="#000"/>
<rect x="948.2" y="318.3" width="120.2" height="22.8" fill="url(#gy)"/>
<rect x="476" y="521" width="630.3" height="173.3" fill="#000"/>
<rect x="497.3" y="528.2" width="106.3" height="141.8" fill="#f4f4e6"/>
<rect x="499.0" y="530" width="102.9" height="138.3" fill="#bfc09f"/>
<rect x="499.0" y="530" width="102.9" height="68.5" fill="#c3c09f"/>
<text x="550.5" y="686.3" font-size="13" text-anchor="middle" fill="#fff">20%</text>
<rect x="620.6" y="528.2" width="106.3" height="141.8" fill="#f4f4e6"/>
<rect x="622.4" y="530" width="102.9" height="138.3" fill="#c0c27f"/>
<rect x="622.4" y="530" width="102.9" height="68.5" fill="#c6be80"/>
<text x="673.9" y="686.3" font-size="13" text-anchor="middle" fill="#fff">40%</text>
<rect x="744.0" y="528.2" width="106.3" height="141.8" fill="#f4f4e6"/>
<rect x="745.7" y="530" width="102.9" height="138.3" fill="#c2c25e"/>
<rect x="745.7" y="530" width="102.9" height="68.5" fill="#c8be5e"/>
<text x="797.2" y="686.3" font-size="13" text-anchor="middle" fill="#fff">60%</text>
<rect x="867.3" y="528.2" width="106.3" height="141.8" fill="#f4f4e6"/>
<rect x="869.0" y="530" width="102.9" height="138.3" fill="#c0be2e"/>
<rect x="869.0" y="530" width="102.9" height="68.5" fill="#c8ba26"/>
<text x="920.5" y="686.3" font-size="13" text-anchor="middle" fill="#fff">80%</text>
<rect x="990.7" y="528.2" width="106.3" height="141.8" fill="#f4f4e6"/>
<rect x="992.4" y="530" width="102.9" height="138.3" fill="#c8c420"/>
<rect x="992.4" y="530" width="102.9" height="68.5" fill="#ccc500"/>
<text x="1043.9" y="686.3" font-size="13" text-anchor="middle" fill="#fff">100%</text>
<text transform="translate(489.5,559) rotate(-90)" font-size="13" text-anchor="middle" fill="#fff">Actual</text>
<text transform="translate(489.5,638) rotate(-90)" font-size="13" text-anchor="middle" fill="#fff">Target</text>
<text x="92.1" y="771.5" font-size="29.5" text-anchor="start" fill="#f4f4f4" textLength="108.3" lengthAdjust="spacingAndGlyphs">Current</text>
<text x="210.6" y="771.5" font-size="29.5" text-anchor="start" fill="#f4f4f4" textLength="114.4" lengthAdjust="spacingAndGlyphs">Reading</text>
<text x="91.7" y="816.7" font-size="26" text-anchor="start" fill="#f2f2f2" textLength="18.5" lengthAdjust="spacingAndGlyphs">x:</text>
<text x="119.2" y="816.7" font-size="26" text-anchor="start" fill="#f2f2f2" textLength="81.1" lengthAdjust="spacingAndGlyphs">0,4431</text>
<text x="91.7" y="860.2" font-size="26" text-anchor="start" fill="#f2f2f2" textLength="19.2" lengthAdjust="spacingAndGlyphs">y:</text>
<text x="119.9" y="860.2" font-size="26" text-anchor="start" fill="#f2f2f2" textLength="65.6" lengthAdjust="spacingAndGlyphs">0,535</text>
<text x="91.9" y="903.6" font-size="26" text-anchor="start" fill="#f2f2f2" textLength="27.3" lengthAdjust="spacingAndGlyphs">fL:</text>
<text x="128.6" y="903.6" font-size="26" text-anchor="start" fill="#f2f2f2" textLength="65.8" lengthAdjust="spacingAndGlyphs">54,56</text>
<text x="91.9" y="947.1" font-size="26" text-anchor="start" fill="#f2f2f2" textLength="61.4" lengthAdjust="spacingAndGlyphs">cd/m</text>
<text x="156.3" y="936.8" font-size="13" text-anchor="start" fill="#f2f2f2" textLength="7.4" lengthAdjust="spacingAndGlyphs" stroke="#f2f2f2" stroke-width="0.4">2</text>
<text x="165.2" y="947.1" font-size="26" text-anchor="start" fill="#f2f2f2">:</text>
<text x="181.5" y="947.1" font-size="26" text-anchor="start" fill="#f2f2f2" textLength="78.7" lengthAdjust="spacingAndGlyphs">186,93</text>
<rect x="456" y="750" width="266.79999999999995" height="191.79999999999995" fill="#262626"/>
<rect x="456" y="769.4" width="266.79999999999995" height="1.6" fill="#9a9a9a"/>
<rect x="451" y="769.4" width="5" height="1.6" fill="#dcdcdc"/>
<text x="450.5" y="775.6" font-size="15.4" text-anchor="end" fill="#dcdcdc">104</text>
<rect x="456" y="808.7" width="266.79999999999995" height="1.6" fill="#9a9a9a"/>
<rect x="451" y="808.7" width="5" height="1.6" fill="#dcdcdc"/>
<text x="450.5" y="814.9" font-size="15.4" text-anchor="end" fill="#dcdcdc">102</text>
<rect x="456" y="846.1" width="266.79999999999995" height="1.6" fill="#9a9a9a"/>
<rect x="451" y="846.1" width="5" height="1.6" fill="#dcdcdc"/>
<text x="450.5" y="852.3" font-size="15.4" text-anchor="end" fill="#dcdcdc">100</text>
<rect x="456" y="885.3" width="266.79999999999995" height="1.6" fill="#9a9a9a"/>
<rect x="451" y="885.3" width="5" height="1.6" fill="#dcdcdc"/>
<text x="450.5" y="891.5" font-size="15.4" text-anchor="end" fill="#dcdcdc">98</text>
<rect x="456" y="923.0" width="266.79999999999995" height="1.6" fill="#9a9a9a"/>
<rect x="451" y="923.0" width="5" height="1.6" fill="#dcdcdc"/>
<text x="450.5" y="929.2" font-size="15.4" text-anchor="end" fill="#dcdcdc">96</text>
<rect x="455" y="749" width="2" height="197.79999999999995" fill="#a8a8a8"/>
<rect x="721.8" y="749" width="2" height="197.79999999999995" fill="#a8a8a8"/>
<rect x="455" y="749" width="268.79999999999995" height="2" fill="#a8a8a8"/>
<rect x="455" y="940.8" width="268.79999999999995" height="2" fill="#a8a8a8"/>
<text x="573.3" y="744.3" font-size="15.5" text-anchor="middle" fill="#dcdcdc" textLength="88" lengthAdjust="spacingAndGlyphs">RGB Balance</text>
<text x="589.5" y="959.5" font-size="15.5" text-anchor="middle" fill="#dcdcdc">100%</text>
<rect x="481.9" y="821" width="70.7" height="119.8" fill="#000"/>
<rect x="482.9" y="822" width="68.7" height="118.8" fill="url(#gr)"/>
<rect x="553" y="844.8" width="71.4" height="96.0" fill="#000"/>
<rect x="554" y="845.8" width="69.4" height="95.0" fill="url(#gg)"/>
<rect x="624" y="907.8" width="71.4" height="33.0" fill="#000"/>
<rect x="625" y="908.8" width="69.4" height="32.0" fill="url(#gb)"/>
<rect x="744" y="723.5" width="777.2" height="217" fill="#050505"/>
<rect x="746" y="939.6" width="773.5" height="0.9" fill="#2a2a2a"/>
<rect x="746" y="725" width="773.5" height="32.6" fill="url(#gh)"/>
<text x="988.8" y="749.3" font-size="18.5" text-anchor="start" fill="#f2f2f2" textLength="41.7" lengthAdjust="spacingAndGlyphs" stroke="#f2f2f2" stroke-width="0.3">20%</text>
<text x="1101.5" y="749.3" font-size="18.5" text-anchor="start" fill="#f2f2f2" textLength="43" lengthAdjust="spacingAndGlyphs" stroke="#f2f2f2" stroke-width="0.3">40%</text>
<text x="1215" y="749.3" font-size="18.5" text-anchor="start" fill="#f2f2f2" textLength="43" lengthAdjust="spacingAndGlyphs" stroke="#f2f2f2" stroke-width="0.3">60%</text>
<text x="1328" y="749.3" font-size="18.5" text-anchor="start" fill="#f2f2f2" textLength="43" lengthAdjust="spacingAndGlyphs" stroke="#f2f2f2" stroke-width="0.3">80%</text>
<text x="1435.8" y="749.3" font-size="18.5" text-anchor="start" fill="#f2f2f2" textLength="54" lengthAdjust="spacingAndGlyphs" stroke="#f2f2f2" stroke-width="0.3">100%</text>
<rect x="746" y="757.6" width="773.5" height="30.4" fill="#404040"/>
<text x="765" y="780.3" font-size="19" text-anchor="start" fill="#f0f0f0" font-weight="bold" textLength="92" lengthAdjust="spacingAndGlyphs" stroke="#f0f0f0" stroke-width="0.45">x: CIE31</text>
<text x="959.6" y="780.3" font-size="19.5" text-anchor="start" fill="#f0f0f0" textLength="72.5" lengthAdjust="spacingAndGlyphs">0,3419</text>
<text x="1072.8" y="780.3" font-size="19.5" text-anchor="start" fill="#f0f0f0" textLength="72.5" lengthAdjust="spacingAndGlyphs">0,3655</text>
<text x="1186.0" y="780.3" font-size="19.5" text-anchor="start" fill="#f0f0f0" textLength="72.5" lengthAdjust="spacingAndGlyphs">0,3924</text>
<text x="1299.2" y="780.3" font-size="19.5" text-anchor="start" fill="#f0f0f0" textLength="72.5" lengthAdjust="spacingAndGlyphs">0,4196</text>
<text x="1412.4" y="780.3" font-size="19.5" text-anchor="start" fill="#f0f0f0" textLength="72.5" lengthAdjust="spacingAndGlyphs">0,4431</text>
<rect x="746" y="788" width="773.5" height="30.8" fill="#808080"/>
<text x="765" y="810.6999999999999" font-size="19" text-anchor="start" fill="#f0f0f0" font-weight="bold" textLength="92" lengthAdjust="spacingAndGlyphs" stroke="#f0f0f0" stroke-width="0.45">y: CIE31</text>
<text x="959.6" y="810.6999999999999" font-size="19.5" text-anchor="start" fill="#f0f0f0" textLength="72.5" lengthAdjust="spacingAndGlyphs">0,3721</text>
<text x="1072.8" y="810.6999999999999" font-size="19.5" text-anchor="start" fill="#f0f0f0" textLength="72.5" lengthAdjust="spacingAndGlyphs">0,4089</text>
<text x="1186.0" y="810.6999999999999" font-size="19.5" text-anchor="start" fill="#f0f0f0" textLength="72.5" lengthAdjust="spacingAndGlyphs">0,4508</text>
<text x="1299.2" y="810.6999999999999" font-size="19.5" text-anchor="start" fill="#f0f0f0" textLength="72.5" lengthAdjust="spacingAndGlyphs">0,4934</text>
<text x="1412.4" y="810.6999999999999" font-size="19.5" text-anchor="start" fill="#f0f0f0" textLength="72.5" lengthAdjust="spacingAndGlyphs">0,5350</text>
<rect x="746" y="818.8" width="773.5" height="30.1" fill="#404040"/>
<text x="765" y="841.4999999999999" font-size="19" text-anchor="start" fill="#f0f0f0" font-weight="bold" textLength="15" lengthAdjust="spacingAndGlyphs" stroke="#f0f0f0" stroke-width="0.45">Y</text>
<text x="960.6" y="841.4999999999999" font-size="19.5" text-anchor="start" fill="#f0f0f0" textLength="98" lengthAdjust="spacingAndGlyphs">195,4693</text>
<text x="1073.8" y="841.4999999999999" font-size="19.5" text-anchor="start" fill="#f0f0f0" textLength="98" lengthAdjust="spacingAndGlyphs">192,6893</text>
<text x="1187.0" y="841.4999999999999" font-size="19.5" text-anchor="start" fill="#f0f0f0" textLength="98" lengthAdjust="spacingAndGlyphs">190,2582</text>
<text x="1300.2" y="841.4999999999999" font-size="19.5" text-anchor="start" fill="#f0f0f0" textLength="98" lengthAdjust="spacingAndGlyphs">188,0556</text>
<text x="1413.4" y="841.4999999999999" font-size="19.5" text-anchor="start" fill="#f0f0f0" textLength="98" lengthAdjust="spacingAndGlyphs">186,9259</text>
<rect x="746" y="848.9" width="773.5" height="30.3" fill="#808080"/>
<text x="765" y="871.5999999999999" font-size="19" text-anchor="start" fill="#f0f0f0" font-weight="bold" textLength="167" lengthAdjust="spacingAndGlyphs" stroke="#f0f0f0" stroke-width="0.45">Target x:CIE31</text>
<text x="959.6" y="871.5999999999999" font-size="19.5" text-anchor="start" fill="#f0f0f0" textLength="72.5" lengthAdjust="spacingAndGlyphs">0,3386</text>
<text x="1072.8" y="871.5999999999999" font-size="19.5" text-anchor="start" fill="#f0f0f0" textLength="72.5" lengthAdjust="spacingAndGlyphs">0,3620</text>
<text x="1186.0" y="871.5999999999999" font-size="19.5" text-anchor="start" fill="#f0f0f0" textLength="72.5" lengthAdjust="spacingAndGlyphs">0,3865</text>
<text x="1299.2" y="871.5999999999999" font-size="19.5" text-anchor="start" fill="#f0f0f0" textLength="72.5" lengthAdjust="spacingAndGlyphs">0,4114</text>
<text x="1412.4" y="871.5999999999999" font-size="19.5" text-anchor="start" fill="#f0f0f0" textLength="72.5" lengthAdjust="spacingAndGlyphs">0,4378</text>
<rect x="746" y="879.2" width="773.5" height="29.9" fill="#404040"/>
<text x="765" y="901.9" font-size="19" text-anchor="start" fill="#f0f0f0" font-weight="bold" textLength="167" lengthAdjust="spacingAndGlyphs" stroke="#f0f0f0" stroke-width="0.45">Target y:CIE31</text>
<text x="959.6" y="901.9" font-size="19.5" text-anchor="start" fill="#f0f0f0" textLength="72.5" lengthAdjust="spacingAndGlyphs">0,3718</text>
<text x="1072.8" y="901.9" font-size="19.5" text-anchor="start" fill="#f0f0f0" textLength="72.5" lengthAdjust="spacingAndGlyphs">0,4105</text>
<text x="1186.0" y="901.9" font-size="19.5" text-anchor="start" fill="#f0f0f0" textLength="72.5" lengthAdjust="spacingAndGlyphs">0,4510</text>
<text x="1299.2" y="901.9" font-size="19.5" text-anchor="start" fill="#f0f0f0" textLength="72.5" lengthAdjust="spacingAndGlyphs">0,4922</text>
<text x="1412.4" y="901.9" font-size="19.5" text-anchor="start" fill="#f0f0f0" textLength="72.5" lengthAdjust="spacingAndGlyphs">0,5359</text>
<rect x="746" y="909.1" width="773.5" height="30.5" fill="#808080"/>
<text x="765" y="931.8" font-size="19" text-anchor="start" fill="#f0f0f0" font-weight="bold" textLength="97" lengthAdjust="spacingAndGlyphs" stroke="#f0f0f0" stroke-width="0.45">Target Y</text>
<text x="960.6" y="931.8" font-size="19.5" text-anchor="start" fill="#f0f0f0" textLength="98" lengthAdjust="spacingAndGlyphs">195,7120</text>
<text x="1073.8" y="931.8" font-size="19.5" text-anchor="start" fill="#f0f0f0" textLength="98" lengthAdjust="spacingAndGlyphs">192,2260</text>
<text x="1187.0" y="931.8" font-size="19.5" text-anchor="start" fill="#f0f0f0" textLength="98" lengthAdjust="spacingAndGlyphs">189,3163</text>
<text x="1300.2" y="931.8" font-size="19.5" text-anchor="start" fill="#f0f0f0" textLength="98" lengthAdjust="spacingAndGlyphs">186,9169</text>
<text x="1413.4" y="931.8" font-size="19.5" text-anchor="start" fill="#f0f0f0" textLength="98" lengthAdjust="spacingAndGlyphs">184,8251</text>
<defs><linearGradient id="bb" x1="0" y1="0" x2="0" y2="1"><stop offset="0" stop-color="#a6a6a6"/><stop offset="0.5" stop-color="#7c7c7c"/><stop offset="1" stop-color="#5a5a5a"/></linearGradient><linearGradient id="bb2" x1="0" y1="0" x2="0" y2="1"><stop offset="0" stop-color="#8e8e8e"/><stop offset="1" stop-color="#5e5e5e"/></linearGradient><linearGradient id="bc" x1="0" y1="0" x2="0" y2="1"><stop offset="0" stop-color="#6c6c6c"/><stop offset="1" stop-color="#9a9a9a"/></linearGradient><linearGradient id="bbar" x1="0" y1="0" x2="0" y2="1"><stop offset="0" stop-color="#4a4a4a"/><stop offset="0.45" stop-color="#393939"/><stop offset="1" stop-color="#262626"/></linearGradient><linearGradient id="bsel" x1="0" y1="0" x2="0" y2="1"><stop offset="0" stop-color="#1b1b1b"/><stop offset="0.6" stop-color="#2a2a2a"/><stop offset="1" stop-color="#3c3c3c"/></linearGradient></defs>
<rect x="0" y="969.3" width="1920" height="71" fill="url(#bbar)"/>
<rect x="1.7" y="970" width="50" height="68.5" rx="4" fill="url(#bb2)"/>
<circle cx="26.6" cy="980.4" r="8.6" fill="url(#bc)"/>
<path d="M22,982.6H31.2L26.6,977.4Z" fill="#2a2a2a"/>
<rect x="6.9" y="999.3" width="39.8" height="34" rx="3.5" fill="#ffff00"/>
<rect x="59.0" y="970" width="169.5" height="68.5" rx="4" fill="url(#bb)"/>
<rect x="65.0" y="976.5" width="158" height="39.5" rx="3.5" fill="#c3c3a0" stroke="#00000030" stroke-width="1"/>
<text x="143.5" y="1033.7" font-size="11" text-anchor="middle" fill="#2c2c2c" font-weight="bold">20%</text>
<rect x="230.8" y="970" width="169.5" height="68.5" rx="4" fill="url(#bb)"/>
<rect x="236.8" y="976.5" width="158" height="39.5" rx="3.5" fill="#c3c080" stroke="#00000030" stroke-width="1"/>
<text x="315.3" y="1033.7" font-size="11" text-anchor="middle" fill="#2c2c2c" font-weight="bold">40%</text>
<rect x="402.6" y="970" width="169.5" height="68.5" rx="4" fill="url(#bb)"/>
<rect x="408.6" y="976.5" width="158" height="39.5" rx="3.5" fill="#c4c064" stroke="#00000030" stroke-width="1"/>
<text x="487.1" y="1033.7" font-size="11" text-anchor="middle" fill="#2c2c2c" font-weight="bold">60%</text>
<rect x="574.4" y="970" width="169.5" height="68.5" rx="4" fill="url(#bb)"/>
<rect x="580.4" y="976.5" width="158" height="39.5" rx="3.5" fill="#c4bc3c" stroke="#00000030" stroke-width="1"/>
<text x="658.9" y="1033.7" font-size="11" text-anchor="middle" fill="#2c2c2c" font-weight="bold">80%</text>
<rect x="746.2" y="970" width="169.5" height="68.5" rx="4" fill="url(#bsel)"/>
<rect x="752.2" y="976.5" width="158" height="39.5" rx="3.5" fill="#c8c000" stroke="#00000030" stroke-width="1"/>
<text x="830.7" y="1033.7" font-size="11" text-anchor="middle" fill="#fff" font-weight="bold">100%</text>
<rect x="1564.8" y="969.4" width="54.2" height="69.5" rx="4" fill="url(#bb2)"/>
<rect x="1564.8" y="989.6" width="54.2" height="1.2" fill="#4a4a4a"/>
<circle cx="1591.5" cy="979.6" r="8.6" fill="url(#bc)"/>
<path d="M1587,981.8H1596L1591.5,976.6Z" fill="#2a2a2a"/>
<rect x="1576" y="999" width="31" height="31" rx="4" fill="#d4d4d4" stroke="#1a1a1a" stroke-width="3"/>
<rect x="1577.5" y="1015" width="28" height="13.5" fill="#bdbdbd"/>
<rect x="1583.5" y="1007.5" width="16.3" height="15" fill="#0c0c0c"/>
<path d="M1620,1003.3V973.4a4,4 0 0 1 4,-4H1875.8V1003.3Z" fill="url(#bb2)"/>
<rect x="1671.9" y="969.4" width="1.2" height="34" fill="#4e4e4e"/>
<rect x="1722.5" y="969.4" width="1.2" height="34" fill="#4e4e4e"/>
<rect x="1773.6000000000001" y="969.4" width="1.2" height="34" fill="#4e4e4e"/>
<rect x="1824.6000000000001" y="969.4" width="1.2" height="34" fill="#4e4e4e"/>
<circle cx="1645.6" cy="987" r="11" fill="url(#bc)"/>
<circle cx="1698.1" cy="987" r="11" fill="url(#bc)"/>
<circle cx="1748.75" cy="987" r="11" fill="url(#bc)"/>
<circle cx="1799.8" cy="987" r="11" fill="url(#bc)"/>
<circle cx="1850.8" cy="987" r="11" fill="url(#bc)"/>
<rect x="1641.3999999999999" y="982.8" width="8.4" height="8.4" fill="#2e2e2e"/>
<path d="M1694.3,981.6L1703.5,987L1694.3,992.4Z" fill="#2e2e2e"/>
<path d="M1745.55,981.8H1743.15V992.2H1745.55M1751.95,981.8H1754.35V992.2H1751.95" fill="none" stroke="#2e2e2e" stroke-width="1.8"/>
<path d="M1746.15,987H1751.35" stroke="#2e2e2e" stroke-width="1.5" stroke-dasharray="1.3,0.9"/>
<path d="M1799.8,987c-1.6,-3.4 -6.4,-3.4 -6.4,0c0,3.4 4.8,3.4 6.4,0c1.6,-3.4 6.4,-3.4 6.4,0c0,3.4 -4.8,3.4 -6.4,0Z" fill="none" stroke="#2e2e2e" stroke-width="1.8"/>
<path d="M1845.8,986a5.2,5.2 0 0 1 9,-3" fill="none" stroke="#2e2e2e" stroke-width="2"/><path d="M1856.3999999999999,980.4v4.4h-4.4Z" fill="#2e2e2e"/>
<path d="M1855.8,988a5.2,5.2 0 0 1 -9,3" fill="none" stroke="#2e2e2e" stroke-width="2"/><path d="M1845.2,993.6v-4.4h4.4Z" fill="#2e2e2e"/>
<rect x="1876.5" y="969.4" width="50" height="34" fill="#3a3a3a"/>
<circle cx="1902.3" cy="987" r="11" fill="#2c2c2c"/>
<rect x="1620" y="1004.8" width="154" height="40" rx="3" fill="url(#bb2)"/>
<rect x="1775" y="1004.8" width="150" height="40" rx="3" fill="url(#bb2)"/>
<circle cx="1655" cy="1022" r="11" fill="url(#bc)"/><circle cx="1896" cy="1022" r="11" fill="url(#bc)"/>
<path d="M1653.5,1017L1649.3,1022L1653.5,1027M1659.5,1017L1655.3,1022L1659.5,1027" fill="none" stroke="#3c3c3c" stroke-width="1.8"/>
<path d="M1892.5,1017L1896.7,1022L1892.5,1027M1898.5,1017L1902.7,1022L1898.5,1027" fill="none" stroke="#3c3c3c" stroke-width="1.8"/>
<text x="1685.6" y="1030.8" font-size="27" text-anchor="start" fill="#3a3a3a" font-weight="bold" textLength="56.5" lengthAdjust="spacingAndGlyphs">Back</text>
<text x="1806.5" y="1030.8" font-size="27" text-anchor="start" fill="#3a3a3a" font-weight="bold" textLength="57.5" lengthAdjust="spacingAndGlyphs">Next</text>
</svg>
<div class="cie" style="left:1154px;top:150px;width:604px;height:519px;clip-path:polygon(140.1px 518.1px,140.1px 518.1px,140.0px 518.1px,139.9px 518.1px,139.8px 518.2px,139.6px 518.2px,139.5px 518.2px,139.3px 518.2px,139.1px 518.2px,138.9px 518.2px,138.6px 518.2px,138.3px 518.1px,137.9px 518.0px,137.6px 517.9px,137.3px 517.7px,137.0px 517.6px,136.7px 517.4px,136.3px 517.2px,135.9px 516.9px,135.4px 516.6px,134.8px 516.2px,134.2px 515.8px,133.6px 515.4px,132.9px 514.9px,132.2px 514.4px,131.4px 513.8px,130.5px 513.2px,129.5px 512.6px,128.3px 511.8px,127.1px 511.0px,125.8px 510.1px,124.3px 509.2px,122.8px 508.2px,121.2px 507.0px,119.4px 505.7px,117.4px 504.3px,115.4px 502.6px,113.2px 500.8px,111.0px 498.8px,108.4px 496.3px,105.6px 493.2px,102.4px 489.5px,99.0px 485.1px,95.4px 480.0px,91.4px 474.0px,87.1px 467.0px,82.5px 458.7px,77.5px 449.3px,72.1px 438.3px,66.2px 425.8px,59.9px 411.7px,53.5px 395.8px,47.1px 377.9px,40.6px 358.2px,34.3px 336.9px,28.0px 313.6px,21.9px 288.8px,16.3px 263.3px,11.4px 237.3px,7.1px 210.7px,3.7px 184.8px,1.5px 159.6px,0.2px 135.1px,0.2px 112.1px,1.6px 90.5px,4.3px 70.3px,8.4px 52.5px,14.0px 37.1px,21.0px 24.1px,29.0px 13.9px,37.9px 6.8px,47.8px 2.5px,58.1px 0.2px,68.7px 0.2px,79.8px 2.1px,90.9px 5.0px,102.0px 8.5px,113.2px 13.0px,124.2px 17.7px,134.8px 22.5px,145.3px 27.6px,155.6px 32.9px,165.8px 38.3px,175.8px 44.0px,185.8px 49.9px,195.7px 56.0px,205.7px 62.3px,215.5px 68.7px,225.4px 75.2px,235.2px 81.9px,245.0px 88.7px,254.8px 95.5px,264.5px 102.5px,274.3px 109.5px,284.1px 116.6px,294.0px 123.8px,303.8px 131.0px,313.5px 138.3px,323.3px 145.5px,333.0px 152.8px,342.8px 160.1px,352.5px 167.4px,362.1px 174.6px,371.7px 181.8px,381.2px 189.0px,390.7px 196.2px,400.0px 203.3px,409.3px 210.3px,418.4px 217.2px,427.4px 224.0px,436.2px 230.7px,444.9px 237.3px,453.5px 243.7px,461.8px 250.0px,469.9px 256.2px,477.8px 262.1px,485.4px 267.9px,492.7px 273.5px,499.6px 278.7px,506.2px 283.7px,512.5px 288.5px,518.6px 293.1px,524.4px 297.5px,530.0px 301.6px,535.1px 305.5px,539.9px 309.1px,544.4px 312.5px,548.6px 315.7px,552.5px 318.7px,556.2px 321.5px,559.5px 324.0px,562.7px 326.4px,565.6px 328.6px,568.2px 330.6px,570.7px 332.5px,573.0px 334.2px,575.2px 335.8px,577.2px 337.3px,579.0px 338.8px,580.8px 340.1px,582.5px 341.4px,584.1px 342.6px,585.5px 343.7px,586.9px 344.7px,588.2px 345.7px,589.3px 346.6px,590.4px 347.4px,591.5px 348.1px,592.4px 348.8px,593.2px 349.4px,593.9px 350.0px,594.6px 350.5px,595.2px 351.0px,595.8px 351.4px,596.3px 351.8px,596.7px 352.1px,597.2px 352.5px,597.8px 352.9px,598.3px 353.4px,598.9px 353.8px,599.3px 354.1px,599.6px 354.4px,600.0px 354.6px,600.4px 354.9px,600.8px 355.2px,601.1px 355.4px)">
<i style="margin-left:47px;width:36px;background:linear-gradient(90deg,#00ff00,#00ff00,#00ff00,#00ff00,#00ff00)"></i><i style="margin-left:41px;width:50px;background:linear-gradient(90deg,#00ff00,#00ff00,#00ff00,#00ff00,#00ff00,#00ff00)"></i><i style="margin-left:36px;width:62px;background:linear-gradient(90deg,#00ff00,#00ff00,#00ff00,#00ff00,#00ff00,#00ff00,#00ff00)"></i><i style="margin-left:33px;width:71px;background:linear-gradient(90deg,#00ff00,#00ff00,#00ff00,#00ff00,#00ff00,#00ff00,#00ff00,#00ff00)"></i><i style="margin-left:30px;width:79px;background:linear-gradient(90deg,#00ff00,#00ff00,#00ff00,#00ff00,#00ff00,#00ff00,#00ff00,#00ff00,#00ff00)"></i><i style="margin-left:28px;width:86px;background:linear-gradient(90deg,#00ff00,#00ff00,#00ff00,#00ff00,#00ff00,#00ff00,#00ff00,#00ff00,#00ff00,#00ff00)"></i><i style="margin-left:25px;width:94px;background:linear-gradient(90deg,#00ff00,#00ff00,#00ff00,#00ff00,#00ff00,#00ff00,#00ff00,#00ff00,#00ff00,#00ff00)"></i><i style="margin-left:24px;width:100px;background:linear-gradient(90deg,#00ff00,#00ff00,#00ff00,#00ff00,#00ff00,#00ff00,#00ff00,#00ff00,#00ff00,#00ff00,#00ff00)"></i><i style="margin-left:22px;width:106px;background:linear-gradient(90deg,#00ff02,#00ff00,#00ff00,#00ff00,#00ff00,#00ff00,#00ff00,#00ff00,#00ff00,#00ff00,#00ff00)"></i><i style="margin-left:21px;width:112px;background:linear-gradient(90deg,#00ff02,#00ff00,#00ff00,#00ff00,#00ff00,#00ff00,#00ff00,#00ff00,#00ff00,#00ff00,#00ff00,#00ff00)"></i><i style="margin-left:19px;width:118px;background:linear-gradient(90deg,#00ff04,#00ff02,#00ff00,#00ff00,#00ff00,#00ff00,#00ff00,#00ff00,#00ff00,#00ff00,#00ff00,#00ff00,#00ff00)"></i><i style="margin-left:18px;width:123px;background:linear-gradient(90deg,#00ff04,#00ff02,#00ff00,#00ff00,#00ff00,#00ff00,#00ff00,#00ff00,#00ff00,#00ff00,#00ff00,#00ff00,#00ff00)"></i><i style="margin-left:17px;width:129px;background:linear-gradient(90deg,#00ff05,#00ff03,#00ff01,#00ff00,#00ff00,#00ff00,#00ff00,#00ff00,#00ff00,#00ff00,#00ff00,#00ff00,#00ff00,#00ff00)"></i><i style="margin-left:15px;width:135px;background:linear-gradient(90deg,#00ff07,#00ff04,#00ff02,#00ff00,#00ff00,#00ff00,#00ff00,#00ff00,#00ff00,#00ff00,#00ff00,#00ff00,#00ff00,#00ff00)"></i><i style="margin-left:14px;width:140px;background:linear-gradient(90deg,#00ff07,#00ff05,#00ff03,#00ff01,#00ff00,#00ff00,#00ff00,#00ff00,#00ff00,#00ff00,#00ff00,#00ff00,#00ff00,#00ff00,#00ff00)"></i><i style="margin-left:13px;width:144px;background:linear-gradient(90deg,#00ff08,#00ff06,#00ff04,#00ff02,#00ff00,#00ff00,#00ff00,#00ff00,#00ff00,#00ff00,#00ff00,#00ff00,#00ff00,#00ff00,#00ff00)"></i><i style="margin-left:12px;width:149px;background:linear-gradient(90deg,#00ff09,#00ff07,#00ff05,#00ff03,#00ff01,#00ff00,#00ff00,#00ff00,#00ff00,#00ff00,#00ff00,#00ff00,#00ff00,#00ff00,#00ff00,#00ff00)"></i><i style="margin-left:11px;width:154px;background:linear-gradient(90deg,#00ff0a,#00ff08,#00ff06,#00ff04,#00ff02,#00ff00,#00ff00,#00ff00,#00ff00,#00ff00,#00ff00,#00ff00,#00ff00,#00ff00,#00ff00,#00ff00)"></i><i style="margin-left:10px;width:159px;background:linear-gradient(90deg,#00ff0b,#00ff09,#00ff07,#00ff05,#00ff03,#00ff01,#00ff00,#00ff00,#00ff00,#00ff00,#00ff00,#00ff00,#00ff00,#00ff00,#00ff00,#00ff00,#00ff00)"></i><i style="margin-left:9px;width:163px;background:linear-gradient(90deg,#00ff0c,#00ff0a,#00ff08,#00ff06,#00ff04,#00ff01,#00ff00,#00ff00,#00ff00,#00ff00,#00ff00,#00ff00,#00ff00,#00ff00,#00ff00,#00ff00,#00ff00)"></i><i style="margin-left:9px;width:167px;background:linear-gradient(90deg,#00ff0d,#00ff0b,#00ff09,#00ff07,#00ff05,#00ff02,#00ff00,#00ff00,#00ff00,#00ff00,#00ff00,#00ff00,#00ff00,#00ff00,#00ff00,#00ff00,#00ff00,#00ff00)"></i><i style="margin-left:8px;width:171px;background:linear-gradient(90deg,#00ff0e,#00ff0c,#00ff0a,#00ff08,#00ff05,#00ff03,#00ff01,#00ff00,#00ff00,#00ff00,#00ff00,#00ff00,#00ff00,#00ff00,#00ff00,#00ff00,#00ff00,#00ff00)"></i><i style="margin-left:7px;width:176px;background:linear-gradient(90deg,#00ff0f,#00ff0d,#00ff0b,#00ff08,#00ff06,#00ff04,#00ff02,#00ff00,#00ff00,#00ff00,#00ff00,#00ff00,#00ff00,#00ff00,#00ff00,#00ff00,#00ff00,#00ff00)"></i><i style="margin-left:7px;width:179px;background:linear-gradient(90deg,#00ff10,#00ff0e,#00ff0c,#00ff09,#00ff07,#00ff05,#00ff03,#00ff01,#00ff00,#00ff00,#00ff00,#00ff00,#00ff00,#00ff00,#00ff00,#00ff00,#00ff00,#00ff00,#00ff00)"></i><i style="margin-left:6px;width:183px;background:linear-gradient(90deg,#00ff11,#00ff0f,#00ff0d,#00ff0a,#00ff08,#00ff06,#00ff04,#00ff01,#00ff00,#00ff00,#00ff00,#00ff00,#00ff00,#00ff00,#00ff00,#00ff00,#00ff00,#00ff00,#00ff00)"></i><i style="margin-left:5px;width:188px;background:linear-gradient(90deg,#00ff12,#00ff10,#00ff0e,#00ff0c,#00ff09,#00ff07,#00ff05,#00ff03,#00ff00,#00ff00,#00ff00,#00ff00,#00ff00,#00ff00,#00ff00,#00ff00,#00ff00,#00ff00,#00ff00,#00ff00)"></i><i style="margin-left:5px;width:191px;background:linear-gradient(90deg,#00ff13,#00ff10,#00ff0e,#00ff0c,#00ff0a,#00ff08,#00ff06,#00ff03,#00ff01,#00ff00,#00ff00,#00ff00,#00ff00,#00ff00,#00ff00,#00ff00,#00ff00,#00ff00,#00ff00,#00ff00)"></i><i style="margin-left:4px;width:195px;background:linear-gradient(90deg,#00ff14,#00ff11,#00ff0f,#00ff0d,#00ff0b,#00ff09,#00ff06,#00ff04,#00ff01,#00ff00,#00ff00,#00ff00,#00ff00,#00ff00,#00ff00,#00ff00,#00ff00,#00ff00,#00ff00,#00ff00)"></i><i style="margin-left:4px;width:198px;background:linear-gradient(90deg,#00ff14,#00ff12,#00ff10,#00ff0e,#00ff0c,#00ff0a,#00ff08,#00ff05,#00ff03,#00ff01,#00ff00,#00ff00,#00ff00,#00ff00,#00ff00,#00ff00,#00ff00,#00ff00,#00ff00,#00ff00,#00ff00)"></i><i style="margin-left:3px;width:203px;background:linear-gradient(90deg,#00ff15,#00ff13,#00ff11,#00ff0f,#00ff0d,#00ff0b,#00ff08,#00ff06,#00ff04,#00ff01,#00ff00,#00ff00,#00ff00,#00ff00,#00ff00,#00ff00,#00ff00,#00ff00,#00ff00,#00ff00,#00ff00)"></i><i style="margin-left:3px;width:206px;background:linear-gradient(90deg,#00ff16,#00ff14,#00ff12,#00ff10,#00ff0e,#00ff0b,#00ff09,#00ff07,#00ff04,#00ff02,#00ff00,#00ff00,#00ff00,#00ff00,#00ff00,#00ff00,#00ff00,#00ff00,#00ff00,#00ff00,#00ff00)"></i><i style="margin-left:2px;width:210px;background:linear-gradient(90deg,#00ff17,#00ff15,#00ff13,#00ff11,#00ff0f,#00ff0d,#00ff0a,#00ff08,#00ff06,#00ff03,#00ff01,#00ff00,#00ff00,#00ff00,#00ff00,#00ff00,#00ff00,#00ff00,#00ff00,#00ff00,#00ff00,#00ff00)"></i><i style="margin-left:2px;width:213px;background:linear-gradient(90deg,#00ff18,#00ff16,#00ff14,#00ff12,#00ff10,#00ff0d,#00ff0b,#00ff09,#00ff06,#00ff04,#00ff01,#00ff00,#00ff00,#00ff00,#00ff00,#00ff00,#00ff00,#00ff00,#00ff00,#00ff00,#00ff00,#00ff00)"></i><i style="margin-left:1px;width:217px;background:linear-gradient(90deg,#00ff19,#00ff17,#00ff15,#00ff13,#00ff10,#00ff0e,#00ff0c,#00ff09,#00ff07,#00ff05,#00ff02,#00ff00,#00ff00,#00ff00,#00ff00,#00ff00,#00ff00,#00ff00,#00ff00,#00ff00,#00ff00,#00ff00)"></i><i style="margin-left:1px;width:220px;background:linear-gradient(90deg,#00ff1a,#00ff18,#00ff16,#00ff14,#00ff12,#00ff0f,#00ff0d,#00ff0b,#00ff08,#00ff06,#00ff04,#00ff01,#00ff00,#00ff00,#00ff00,#00ff00,#00ff00,#00ff00,#00ff00,#00ff00,#00ff00,#00ff00,#00ff00)"></i><i style="margin-left:1px;width:223px;background:linear-gradient(90deg,#00ff1b,#00ff19,#00ff17,#00ff15,#00ff12,#00ff10,#00ff0e,#00ff0b,#00ff09,#00ff07,#00ff04,#00ff02,#00ff00,#00ff00,#00ff00,#00ff00,#00ff00,#00ff00,#00ff00,#00ff00,#00ff00,#00ff00,#00ff00)"></i><i style="margin-left:0px;width:227px;background:linear-gradient(90deg,#00ff1c,#00ff1a,#00ff18,#00ff16,#00ff13,#00ff11,#00ff0f,#00ff0c,#00ff0a,#00ff07,#00ff05,#00ff02,#00ff00,#00ff00,#00ff00,#00ff00,#00ff00,#00ff00,#00ff00,#00ff00,#00ff00,#00ff00,#00ff00)"></i><i style="margin-left:0px;width:230px;background:linear-gradient(90deg,#00ff1d,#00ff1b,#00ff19,#00ff17,#00ff14,#00ff12,#00ff10,#00ff0e,#00ff0b,#00ff09,#00ff06,#00ff04,#00ff01,#00ff00,#00ff00,#00ff00,#00ff00,#00ff00,#00ff00,#00ff00,#00ff00,#00ff00,#00ff00,#00ff00)"></i><i style="margin-left:0px;width:233px;background:linear-gradient(90deg,#00ff1e,#00ff1c,#00ff1a,#00ff17,#00ff15,#00ff13,#00ff11,#00ff0e,#00ff0c,#00ff09,#00ff07,#00ff04,#00ff02,#00ff00,#00ff00,#00ff00,#00ff00,#00ff00,#00ff00,#00ff00,#00ff00,#00ff00,#00ff00,#00ff00)"></i><i style="margin-left:0px;width:236px;background:linear-gradient(90deg,#00ff1f,#00ff1d,#00ff1a,#00ff18,#00ff16,#00ff14,#00ff11,#00ff0f,#00ff0d,#00ff0a,#00ff08,#00ff05,#00ff02,#00ff00,#00ff00,#00ff00,#00ff00,#00ff00,#00ff00,#00ff00,#00ff00,#00ff00,#00ff00,#00ff00)"></i><i style="margin-left:0px;width:239px;background:linear-gradient(90deg,#00ff20,#00ff1e,#00ff1b,#00ff19,#00ff17,#00ff15,#00ff13,#00ff10,#00ff0e,#00ff0c,#00ff09,#00ff07,#00ff04,#00ff02,#00ff00,#00ff00,#00ff00,#00ff00,#00ff00,#00ff00,#00ff00,#00ff00,#00ff00,#00ff00,#00ff00)"></i><i style="margin-left:0px;width:242px;background:linear-gradient(90deg,#00ff21,#00ff1e,#00ff1c,#00ff1a,#00ff18,#00ff16,#00ff13,#00ff11,#00ff0f,#00ff0c,#00ff0a,#00ff07,#00ff05,#00ff02,#00ff00,#00ff00,#00ff00,#00ff00,#00ff00,#00ff00,#00ff00,#00ff00,#00ff00,#00ff00,#00ff00)"></i><i style="margin-left:0px;width:245px;background:linear-gradient(90deg,#00ff21,#00ff1f,#00ff1d,#00ff1b,#00ff19,#00ff17,#00ff14,#00ff12,#00ff0f,#00ff0d,#00ff0a,#00ff08,#00ff05,#00ff03,#00ff00,#00ff00,#00ff00,#00ff00,#00ff00,#00ff00,#00ff00,#00ff00,#00ff00,#00ff00,#00ff00)"></i><i style="margin-left:0px;width:248px;background:linear-gradient(90deg,#00ff22,#00ff20,#00ff1e,#00ff1c,#00ff1a,#00ff18,#00ff16,#00ff13,#00ff11,#00ff0e,#00ff0c,#00ff0a,#00ff07,#00ff04,#00ff02,#00ff00,#00ff00,#00ff00,#00ff00,#00ff00,#00ff00,#00ff00,#00ff00,#00ff00,#00ff00,#00ff00)"></i><i style="margin-left:0px;width:250px;background:linear-gradient(90deg,#00ff23,#00ff21,#00ff1f,#00ff1d,#00ff1b,#00ff19,#00ff16,#00ff14,#00ff12,#00ff0f,#00ff0d,#00ff0a,#00ff08,#00ff05,#00ff02,#00ff00,#00ff00,#00ff00,#00ff00,#00ff00,#00ff00,#00ff00,#00ff00,#00ff00,#00ff00,#00ff00)"></i><i style="margin-left:0px;width:253px;background:linear-gradient(90deg,#00ff24,#00ff22,#00ff20,#00ff1e,#00ff1c,#00ff19,#00ff17,#00ff15,#00ff12,#00ff10,#00ff0d,#00ff0b,#00ff08,#00ff06,#00ff03,#00ff00,#00ff00,#00ff00,#00ff00,#00ff00,#00ff00,#00ff00,#00ff00,#00ff00,#00ff00,#00ff00)"></i><i style="margin-left:0px;width:256px;background:linear-gradient(90deg,#00ff25,#00ff23,#00ff21,#00ff1f,#00ff1d,#00ff1a,#00ff18,#00ff16,#00ff13,#00ff11,#00ff0e,#00ff0b,#00ff09,#00ff06,#00ff03,#00ff00,#00ff00,#00ff00,#00ff00,#00ff00,#00ff00,#00ff00,#00ff00,#00ff00,#00ff00,#00ff00)"></i><i style="margin-left:0px;width:259px;background:linear-gradient(90deg,#00ff26,#00ff24,#00ff22,#00ff20,#00ff1e,#00ff1c,#00ff19,#00ff17,#00ff15,#00ff12,#00ff10,#00ff0d,#00ff0b,#00ff08,#00ff05,#00ff03,#00ff00,#00ff00,#00ff00,#00ff00,#00ff00,#00ff00,#00ff00,#00ff00,#00ff00,#00ff00,#00ff00)"></i><i style="margin-left:0px;width:262px;background:linear-gradient(90deg,#00ff27,#00ff25,#00ff23,#00ff21,#00ff1f,#00ff1c,#00ff1a,#00ff18,#00ff15,#00ff13,#00ff10,#00ff0e,#00ff0b,#00ff09,#00ff06,#00ff03,#00ff00,#00ff00,#00ff00,#00ff00,#00ff00,#00ff00,#00ff00,#00ff00,#00ff00,#00ff00,#00ff00)"></i><i style="margin-left:0px;width:265px;background:linear-gradient(90deg,#00ff28,#00ff26,#00ff24,#00ff22,#00ff1f,#00ff1d,#00ff1b,#00ff19,#00ff16,#00ff14,#00ff11,#00ff0e,#00ff0c,#00ff09,#00ff06,#00ff04,#00ff01,#00ff00,#00ff00,#00ff00,#00ff00,#00ff00,#00ff00,#00ff00,#00ff00,#00ff00,#05ff00)"></i><i style="margin-left:0px;width:267px;background:linear-gradient(90deg,#00ff29,#00ff27,#00ff25,#00ff23,#00ff20,#00ff1e,#00ff1c,#00ff19,#00ff17,#00ff14,#00ff12,#00ff0f,#00ff0d,#00ff0a,#00ff07,#00ff04,#00ff01,#00ff00,#00ff00,#00ff00,#00ff00,#00ff00,#00ff00,#00ff00,#00ff00,#00ff00,#08ff00)"></i><i style="margin-left:0px;width:270px;background:linear-gradient(90deg,#00ff2a,#00ff28,#00ff26,#00ff24,#00ff22,#00ff1f,#00ff1d,#00ff1b,#00ff18,#00ff16,#00ff14,#00ff11,#00ff0e,#00ff0c,#00ff09,#00ff06,#00ff03,#00ff01,#00ff00,#00ff00,#00ff00,#00ff00,#00ff00,#00ff00,#00ff00,#00ff00,#01ff00,#0dff00)"></i><i style="margin-left:0px;width:273px;background:linear-gradient(90deg,#00ff2b,#00ff29,#00ff27,#00ff25,#00ff23,#00ff20,#00ff1e,#00ff1c,#00ff19,#00ff17,#00ff14,#00ff12,#00ff0f,#00ff0c,#00ff0a,#00ff07,#00ff04,#00ff01,#00ff00,#00ff00,#00ff00,#00ff00,#00ff00,#00ff00,#00ff00,#00ff00,#05ff00,#12ff00)"></i><i style="margin-left:0px;width:276px;background:linear-gradient(90deg,#00ff2c,#00ff2a,#00ff28,#00ff26,#00ff24,#00ff21,#00ff1f,#00ff1c,#00ff1a,#00ff18,#00ff15,#00ff12,#00ff10,#00ff0d,#00ff0a,#00ff07,#00ff04,#00ff01,#00ff00,#00ff00,#00ff00,#00ff00,#00ff00,#00ff00,#00ff00,#00ff00,#0aff00,#17ff00)"></i><i style="margin-left:0px;width:278px;background:linear-gradient(90deg,#00ff2d,#00ff2b,#00ff29,#00ff27,#00ff25,#00ff23,#00ff20,#00ff1e,#00ff1c,#00ff19,#00ff17,#00ff14,#00ff12,#00ff0f,#00ff0c,#00ff0a,#00ff07,#00ff04,#00ff01,#00ff00,#00ff00,#00ff00,#00ff00,#00ff00,#00ff00,#00ff00,#01ff00,#0eff00,#1aff00)"></i><i style="margin-left:0px;width:281px;background:linear-gradient(90deg,#00ff2e,#00ff2c,#00ff2a,#00ff28,#00ff26,#00ff24,#00ff21,#00ff1f,#00ff1c,#00ff1a,#00ff18,#00ff15,#00ff12,#00ff10,#00ff0d,#00ff0a,#00ff07,#00ff04,#00ff01,#00ff00,#00ff00,#00ff00,#00ff00,#00ff00,#00ff00,#00ff00,#05ff00,#12ff00,#20ff00)"></i><i style="margin-left:0px;width:284px;background:linear-gradient(90deg,#00ff2f,#00ff2d,#00ff2b,#00ff29,#00ff27,#00ff24,#00ff22,#00ff20,#00ff1d,#00ff1b,#00ff18,#00ff16,#00ff13,#00ff10,#00ff0e,#00ff0b,#00ff08,#00ff05,#00ff02,#00ff00,#00ff00,#00ff00,#00ff00,#00ff00,#00ff00,#00ff00,#0aff00,#17ff00,#25ff00)"></i><i style="margin-left:0px;width:287px;background:linear-gradient(90deg,#00ff30,#00ff2e,#00ff2c,#00ff2a,#00ff28,#00ff25,#00ff23,#00ff21,#00ff1e,#00ff1c,#00ff19,#00ff16,#00ff14,#00ff11,#00ff0e,#00ff0b,#00ff08,#00ff05,#00ff02,#00ff00,#00ff00,#00ff00,#00ff00,#00ff00,#00ff00,#01ff00,#0fff00,#1cff00,#2aff00)"></i><i style="margin-left:0px;width:290px;background:linear-gradient(90deg,#00ff31,#00ff2f,#00ff2d,#00ff2b,#00ff29,#00ff27,#00ff24,#00ff22,#00ff20,#00ff1d,#00ff1b,#00ff18,#00ff16,#00ff13,#00ff10,#00ff0d,#00ff0b,#00ff08,#00ff05,#00ff02,#00ff00,#00ff00,#00ff00,#00ff00,#00ff00,#00ff00,#07ff00,#14ff00,#22ff00,#30ff00)"></i><i style="margin-left:0px;width:292px;background:linear-gradient(90deg,#00ff33,#00ff30,#00ff2e,#00ff2c,#00ff2a,#00ff28,#00ff25,#00ff23,#00ff21,#00ff1e,#00ff1c,#00ff19,#00ff17,#00ff14,#00ff11,#00ff0e,#00ff0b,#00ff08,#00ff05,#00ff02,#00ff00,#00ff00,#00ff00,#00ff00,#00ff00,#00ff00,#0bff00,#18ff00,#26ff00,#34ff00)"></i><i style="margin-left:0px;width:295px;background:linear-gradient(90deg,#00ff34,#00ff32,#00ff2f,#00ff2d,#00ff2b,#00ff29,#00ff26,#00ff24,#00ff22,#00ff1f,#00ff1d,#00ff1a,#00ff17,#00ff15,#00ff12,#00ff0f,#00ff0c,#00ff09,#00ff06,#00ff03,#00ff00,#00ff00,#00ff00,#00ff00,#00ff00,#02ff00,#0fff00,#1dff00,#2bff00,#39ff00)"></i><i style="margin-left:0px;width:298px;background:linear-gradient(90deg,#00ff35,#00ff33,#00ff31,#00ff2e,#00ff2c,#00ff2a,#00ff28,#00ff26,#00ff23,#00ff21,#00ff1e,#00ff1c,#00ff19,#00ff16,#00ff14,#00ff11,#00ff0e,#00ff0b,#00ff08,#00ff05,#00ff02,#00ff00,#00ff00,#00ff00,#00ff00,#00ff00,#08ff00,#15ff00,#23ff00,#31ff00,#3fff00)"></i><i style="margin-left:0px;width:300px;background:linear-gradient(90deg,#00ff36,#00ff34,#00ff32,#00ff30,#00ff2d,#00ff2b,#00ff29,#00ff27,#00ff24,#00ff22,#00ff1f,#00ff1d,#00ff1a,#00ff17,#00ff15,#00ff12,#00ff0f,#00ff0c,#00ff09,#00ff06,#00ff03,#00ff00,#00ff00,#00ff00,#00ff00,#00ff00,#0bff00,#19ff00,#27ff00,#35ff00,#44ff00)"></i><i style="margin-left:0px;width:303px;background:linear-gradient(90deg,#00ff37,#00ff35,#00ff33,#00ff31,#00ff2e,#00ff2c,#00ff2a,#00ff27,#00ff25,#00ff23,#00ff20,#00ff1d,#00ff1b,#00ff18,#00ff15,#00ff13,#00ff10,#00ff0d,#00ff0a,#00ff06,#00ff03,#00ff00,#00ff00,#00ff00,#00ff00,#02ff00,#10ff00,#1eff00,#2cff00,#3bff00,#4aff00)"></i><i style="margin-left:0px;width:306px;background:linear-gradient(90deg,#00ff38,#00ff36,#00ff34,#00ff32,#00ff2f,#00ff2d,#00ff2b,#00ff28,#00ff26,#00ff24,#00ff21,#00ff1e,#00ff1c,#00ff19,#00ff16,#00ff13,#00ff10,#00ff0d,#00ff0a,#00ff07,#00ff04,#00ff00,#00ff00,#00ff00,#00ff00,#07ff00,#14ff00,#23ff00,#31ff00,#40ff00,#50ff00)"></i><i style="margin-left:0px;width:309px;background:linear-gradient(90deg,#00ff39,#00ff37,#00ff35,#00ff33,#00ff31,#00ff2f,#00ff2c,#00ff2a,#00ff28,#00ff25,#00ff23,#00ff20,#00ff1e,#00ff1b,#00ff18,#00ff15,#00ff12,#00ff10,#00ff0d,#00ff09,#00ff06,#00ff03,#00ff00,#00ff00,#00ff00,#00ff00,#0dff00,#1bff00,#29ff00,#38ff00,#47ff00,#56ff00)"></i><i style="margin-left:0px;width:311px;background:linear-gradient(90deg,#00ff3a,#00ff38,#00ff36,#00ff34,#00ff32,#00ff30,#00ff2d,#00ff2b,#00ff29,#00ff26,#00ff24,#00ff21,#00ff1f,#00ff1c,#00ff19,#00ff16,#00ff13,#00ff10,#00ff0d,#00ff0a,#00ff07,#00ff04,#00ff00,#00ff00,#00ff00,#03ff00,#11ff00,#1fff00,#2dff00,#3cff00,#4bff00,#5bff00)"></i><i style="margin-left:0px;width:314px;background:linear-gradient(90deg,#00ff3c,#00ff3a,#00ff37,#00ff35,#00ff33,#00ff31,#00ff2e,#00ff2c,#00ff2a,#00ff27,#00ff25,#00ff22,#00ff1f,#00ff1d,#00ff1a,#00ff17,#00ff14,#00ff11,#00ff0e,#00ff0b,#00ff08,#00ff04,#00ff01,#00ff00,#00ff00,#07ff00,#15ff00,#24ff00,#32ff00,#42ff00,#51ff00,#62ff00)"></i><i style="margin-left:0px;width:317px;background:linear-gradient(90deg,#00ff3d,#00ff3b,#00ff39,#00ff36,#00ff34,#00ff32,#00ff30,#00ff2d,#00ff2b,#00ff28,#00ff26,#00ff23,#00ff20,#00ff1e,#00ff1b,#00ff18,#00ff15,#00ff12,#00ff0f,#00ff0b,#00ff08,#00ff05,#00ff01,#00ff00,#00ff00,#0cff00,#1aff00,#29ff00,#38ff00,#48ff00,#58ff00,#68ff00)"></i><i style="margin-left:0px;width:319px;background:linear-gradient(90deg,#00ff3e,#00ff3c,#00ff3a,#00ff38,#00ff36,#00ff33,#00ff31,#00ff2f,#00ff2c,#00ff2a,#00ff27,#00ff25,#00ff22,#00ff20,#00ff1d,#00ff1a,#00ff17,#00ff14,#00ff11,#00ff0e,#00ff0b,#00ff08,#00ff04,#00ff01,#00ff00,#04ff00,#12ff00,#20ff00,#2fff00,#3eff00,#4dff00,#5dff00,#6eff00)"></i><i style="margin-left:0px;width:322px;background:linear-gradient(90deg,#00ff3f,#00ff3d,#00ff3b,#00ff39,#00ff37,#00ff34,#00ff32,#00ff30,#00ff2d,#00ff2b,#00ff28,#00ff26,#00ff23,#00ff21,#00ff1e,#00ff1b,#00ff18,#00ff15,#00ff12,#00ff0f,#00ff0c,#00ff08,#00ff05,#00ff01,#00ff00,#08ff00,#16ff00,#25ff00,#34ff00,#43ff00,#53ff00,#64ff00,#75ff00)"></i><i style="margin-left:0px;width:325px;background:linear-gradient(90deg,#00ff40,#00ff3e,#00ff3c,#00ff3a,#00ff38,#00ff36,#00ff33,#00ff31,#00ff2e,#00ff2c,#00ff29,#00ff27,#00ff24,#00ff21,#00ff1f,#00ff1c,#00ff19,#00ff16,#00ff13,#00ff0f,#00ff0c,#00ff09,#00ff05,#00ff02,#00ff00,#0dff00,#1bff00,#2aff00,#39ff00,#49ff00,#5aff00,#6bff00,#7cff00)"></i><i style="margin-left:0px;width:327px;background:linear-gradient(90deg,#00ff42,#00ff40,#00ff3d,#00ff3b,#00ff39,#00ff37,#00ff34,#00ff32,#00ff30,#00ff2d,#00ff2b,#00ff28,#00ff25,#00ff22,#00ff20,#00ff1d,#00ff1a,#00ff17,#00ff14,#00ff10,#00ff0d,#00ff0a,#00ff06,#00ff02,#02ff00,#10ff00,#1fff00,#2eff00,#3eff00,#4eff00,#5fff00,#70ff00,#82ff00)"></i><i style="margin-left:0px;width:330px;background:linear-gradient(90deg,#00ff43,#00ff41,#00ff3f,#00ff3d,#00ff3a,#00ff38,#00ff36,#00ff34,#00ff31,#00ff2f,#00ff2c,#00ff2a,#00ff27,#00ff25,#00ff22,#00ff1f,#00ff1c,#00ff19,#00ff16,#00ff13,#00ff10,#00ff0c,#00ff09,#00ff05,#00ff02,#09ff00,#18ff00,#26ff00,#36ff00,#45ff00,#55ff00,#66ff00,#78ff00,#89ff00)"></i><i style="margin-left:0px;width:333px;background:linear-gradient(90deg,#00ff44,#00ff42,#00ff40,#00ff3e,#00ff3c,#00ff39,#00ff37,#00ff35,#00ff32,#00ff30,#00ff2d,#00ff2b,#00ff28,#00ff25,#00ff23,#00ff20,#00ff1d,#00ff1a,#00ff17,#00ff14,#00ff10,#00ff0d,#00ff09,#00ff06,#00ff02,#0eff00,#1cff00,#2bff00,#3bff00,#4bff00,#5cff00,#6dff00,#7fff00,#91ff00)"></i><i style="margin-left:0px;width:335px;background:linear-gradient(90deg,#00ff45,#00ff43,#00ff41,#00ff3f,#00ff3d,#00ff3b,#00ff38,#00ff36,#00ff34,#00ff31,#00ff2f,#00ff2c,#00ff29,#00ff27,#00ff24,#00ff21,#00ff1e,#00ff1b,#00ff18,#00ff14,#00ff11,#00ff0e,#00ff0a,#00ff07,#02ff03,#11ff00,#20ff00,#2fff00,#3fff00,#50ff00,#61ff00,#72ff00,#85ff00,#97ff00)"></i><i style="margin-left:0px;width:338px;background:linear-gradient(90deg,#00ff47,#00ff45,#00ff43,#00ff40,#00ff3e,#00ff3c,#00ff3a,#00ff37,#00ff35,#00ff32,#00ff30,#00ff2d,#00ff2a,#00ff28,#00ff25,#00ff22,#00ff1f,#00ff1c,#00ff18,#00ff15,#00ff12,#00ff0e,#00ff0b,#00ff07,#07ff03,#15ff00,#25ff00,#35ff00,#45ff00,#56ff00,#67ff00,#79ff00,#8cff00,#a0ff00)"></i><i style="margin-left:0px;width:341px;background:linear-gradient(90deg,#00ff48,#00ff46,#00ff44,#00ff42,#00ff40,#00ff3d,#00ff3b,#00ff39,#00ff36,#00ff34,#00ff32,#00ff2f,#00ff2c,#00ff2a,#00ff27,#00ff24,#00ff21,#00ff1e,#00ff1b,#00ff18,#00ff15,#00ff11,#00ff0e,#00ff0a,#00ff07,#0fff03,#1eff00,#2dff00,#3dff00,#4dff00,#5eff00,#70ff00,#82ff00,#95ff00,#a8ff00)"></i><i style="margin-left:0px;width:343px;background:linear-gradient(90deg,#00ff49,#00ff47,#00ff45,#00ff43,#00ff41,#00ff3f,#00ff3c,#00ff3a,#00ff38,#00ff35,#00ff33,#00ff30,#00ff2d,#00ff2b,#00ff28,#00ff25,#00ff22,#00ff1f,#00ff1c,#00ff19,#00ff16,#00ff12,#00ff0f,#00ff0b,#03ff07,#12ff04,#21ff00,#31ff00,#41ff00,#52ff00,#63ff00,#75ff00,#88ff00,#9bff00,#afff00)"></i><i style="margin-left:0px;width:346px;background:linear-gradient(90deg,#00ff4b,#00ff49,#00ff47,#00ff44,#00ff42,#00ff40,#00ff3e,#00ff3b,#00ff39,#00ff36,#00ff34,#00ff31,#00ff2f,#00ff2c,#00ff29,#00ff26,#00ff23,#00ff20,#00ff1d,#00ff1a,#00ff16,#00ff13,#00ff0f,#00ff0c,#08ff08,#17ff04,#26ff00,#36ff00,#47ff00,#58ff00,#6aff00,#7cff00,#8fff00,#a3ff00,#b8ff00)"></i><i style="margin-left:0px;width:349px;background:linear-gradient(90deg,#00ff4c,#00ff4a,#00ff48,#00ff46,#00ff44,#00ff42,#00ff3f,#00ff3d,#00ff3b,#00ff38,#00ff36,#00ff33,#00ff31,#00ff2e,#00ff2b,#00ff28,#00ff25,#00ff22,#00ff1f,#00ff1c,#00ff19,#00ff16,#00ff12,#00ff0f,#01ff0b,#10ff07,#1fff03,#2fff00,#3fff00,#50ff00,#61ff00,#73ff00,#85ff00,#98ff00,#acff00,#c1ff00)"></i><i style="margin-left:0px;width:351px;background:linear-gradient(90deg,#00ff4d,#00ff4b,#00ff49,#00ff47,#00ff45,#00ff43,#00ff41,#00ff3e,#00ff3c,#00ff39,#00ff37,#00ff34,#00ff32,#00ff2f,#00ff2c,#00ff2a,#00ff27,#00ff24,#00ff20,#00ff1d,#00ff1a,#00ff17,#00ff13,#00ff10,#05ff0c,#14ff08,#23ff04,#33ff00,#43ff00,#54ff00,#66ff00,#78ff00,#8bff00,#9fff00,#b3ff00,#c8ff00)"></i><i style="margin-left:0px;width:354px;background:linear-gradient(90deg,#00ff4f,#00ff4d,#00ff4b,#00ff49,#00ff46,#00ff44,#00ff42,#00ff40,#00ff3d,#00ff3b,#00ff38,#00ff36,#00ff33,#00ff30,#00ff2d,#00ff2b,#00ff28,#00ff25,#00ff21,#00ff1e,#00ff1b,#00ff17,#00ff14,#00ff10,#09ff0d,#18ff09,#28ff05,#38ff01,#49ff00,#5bff00,#6dff00,#7fff00,#93ff00,#a7ff00,#bcff00,#d2ff00)"></i><i style="margin-left:0px;width:357px;background:linear-gradient(90deg,#00ff50,#00ff4e,#00ff4c,#00ff4a,#00ff48,#00ff45,#00ff43,#00ff41,#00ff3e,#00ff3c,#00ff39,#00ff37,#00ff34,#00ff31,#00ff2f,#00ff2c,#00ff29,#00ff26,#00ff22,#00ff1f,#00ff1c,#00ff18,#00ff15,#00ff11,#0dff0d,#1dff09,#2dff05,#3eff01,#4fff00,#61ff00,#74ff00,#87ff00,#9bff00,#b0ff00,#c5ff00,#dbff00)"></i><i style="margin-left:0px;width:359px;background:linear-gradient(90deg,#00ff51,#00ff50,#00ff4d,#00ff4b,#00ff49,#00ff47,#00ff45,#00ff43,#00ff40,#00ff3e,#00ff3b,#00ff39,#00ff36,#00ff34,#00ff31,#00ff2e,#00ff2b,#00ff28,#00ff25,#00ff22,#00ff1f,#00ff1b,#00ff18,#00ff14,#06ff11,#15ff0d,#25ff09,#35ff05,#46ff01,#57ff00,#69ff00,#7cff00,#8fff00,#a3ff00,#b8ff00,#cdff00,#e3ff00)"></i><i style="margin-left:0px;width:362px;background:linear-gradient(90deg,#00ff53,#00ff51,#00ff4f,#00ff4d,#00ff4b,#00ff48,#00ff46,#00ff44,#00ff42,#00ff3f,#00ff3d,#00ff3a,#00ff37,#00ff35,#00ff32,#00ff2f,#00ff2c,#00ff29,#00ff26,#00ff23,#00ff20,#00ff1c,#00ff19,#00ff15,#0aff11,#1aff0e,#2aff0a,#3aff06,#4cff01,#5dff00,#70ff00,#83ff00,#97ff00,#abff00,#c1ff00,#d7ff00,#eeff00)"></i><i style="margin-left:0px;width:365px;background:linear-gradient(90deg,#00ff54,#00ff52,#00ff50,#00ff4e,#00ff4c,#00ff4a,#00ff48,#00ff45,#00ff43,#00ff40,#00ff3e,#00ff3b,#00ff39,#00ff36,#00ff33,#00ff30,#00ff2d,#00ff2a,#00ff27,#00ff24,#00ff21,#00ff1d,#00ff1a,#00ff16,#0eff12,#1eff0e,#2fff0a,#40ff06,#51ff02,#64ff00,#77ff00,#8aff00,#9fff00,#b4ff00,#caff00,#e1ff00,#f9ff00)"></i><i style="margin-left:0px;width:367px;background:linear-gradient(90deg,#00ff56,#00ff54,#00ff52,#00ff50,#00ff4d,#00ff4b,#00ff49,#00ff47,#00ff44,#00ff42,#00ff3f,#00ff3d,#00ff3a,#00ff37,#00ff34,#00ff32,#00ff2f,#00ff2c,#00ff28,#00ff25,#00ff22,#00ff1e,#00ff1b,#02ff17,#12ff13,#22ff0f,#33ff0b,#44ff07,#56ff03,#69ff00,#7cff00,#90ff00,#a5ff00,#bbff00,#d1ff00,#e9ff00,#fffd00)"></i><i style="margin-left:0px;width:370px;background:linear-gradient(90deg,#00ff57,#00ff55,#00ff53,#00ff51,#00ff4f,#00ff4d,#00ff4b,#00ff48,#00ff46,#00ff44,#00ff41,#00ff3f,#00ff3c,#00ff39,#00ff37,#00ff34,#00ff31,#00ff2e,#00ff2b,#00ff28,#00ff25,#00ff21,#00ff1e,#00ff1a,#0cff16,#1bff13,#2cff0f,#3dff0b,#4eff06,#60ff02,#73ff00,#87ff00,#9bff00,#b0ff00,#c6ff00,#ddff00,#f4ff00,#fff200)"></i><i style="margin-left:0px;width:373px;background:linear-gradient(90deg,#00ff59,#00ff57,#00ff55,#00ff53,#00ff51,#00ff4e,#00ff4c,#00ff4a,#00ff47,#00ff45,#00ff43,#00ff40,#00ff3d,#00ff3b,#00ff38,#00ff35,#00ff32,#00ff2f,#00ff2c,#00ff29,#00ff26,#00ff22,#00ff1f,#00ff1b,#10ff17,#20ff13,#31ff0f,#42ff0b,#54ff07,#67ff02,#7aff00,#8eff00,#a3ff00,#b9ff00,#cfff00,#e7ff00,#ffff00,#ffe800)"></i><i style="margin-left:0px;width:375px;background:linear-gradient(90deg,#00ff5a,#00ff58,#00ff56,#00ff54,#00ff52,#00ff50,#00ff4e,#00ff4b,#00ff49,#00ff47,#00ff44,#00ff41,#00ff3f,#00ff3c,#00ff39,#00ff36,#00ff34,#00ff31,#00ff2d,#00ff2a,#00ff27,#00ff23,#00ff20,#03ff1c,#13ff18,#24ff14,#35ff10,#47ff0c,#59ff08,#6cff03,#80ff00,#94ff00,#aaff00,#c0ff00,#d7ff00,#efff00,#fff600,#ffe000)"></i><i style="margin-left:0px;width:378px;background:linear-gradient(90deg,#00ff5c,#00ff5a,#00ff58,#00ff56,#00ff53,#00ff51,#00ff4f,#00ff4d,#00ff4a,#00ff48,#00ff45,#00ff43,#00ff40,#00ff3d,#00ff3b,#00ff38,#00ff35,#00ff32,#00ff2f,#00ff2b,#00ff28,#00ff24,#00ff21,#07ff1d,#18ff19,#29ff15,#3aff11,#4cff0d,#5fff08,#73ff04,#87ff00,#9cff00,#b2ff00,#c9ff00,#e1ff00,#faff00,#ffec00,#ffd700)"></i><i style="margin-left:0px;width:381px;background:linear-gradient(90deg,#00ff5d,#00ff5b,#00ff59,#00ff57,#00ff55,#00ff53,#00ff51,#00ff4f,#00ff4c,#00ff4a,#00ff47,#00ff45,#00ff42,#00ff40,#00ff3d,#00ff3a,#00ff37,#00ff34,#00ff31,#00ff2e,#00ff2b,#00ff27,#00ff24,#02ff20,#12ff1d,#22ff19,#33ff15,#45ff11,#57ff0c,#6aff08,#7eff03,#93ff00,#a8ff00,#beff00,#d5ff00,#edff00,#fff800,#ffe200,#ffce00)"></i><i style="margin-left:0px;width:383px;background:linear-gradient(90deg,#00ff5f,#00ff5d,#00ff5b,#00ff59,#00ff57,#00ff55,#00ff52,#00ff50,#00ff4e,#00ff4b,#00ff49,#00ff46,#00ff44,#00ff41,#00ff3e,#00ff3c,#00ff39,#00ff36,#00ff33,#00ff2f,#00ff2c,#00ff29,#00ff25,#05ff22,#15ff1e,#26ff1a,#37ff16,#49ff12,#5cff0d,#70ff09,#84ff04,#99ff00,#afff00,#c5ff00,#ddff00,#f6ff00,#fff000,#ffda00,#ffc700)"></i><i style="margin-left:1px;width:385px;background:linear-gradient(90deg,#00ff60,#00ff5e,#00ff5c,#00ff5a,#00ff58,#00ff56,#00ff54,#00ff51,#00ff4f,#00ff4d,#00ff4a,#00ff48,#00ff45,#00ff42,#00ff40,#00ff3d,#00ff3a,#00ff37,#00ff34,#00ff30,#00ff2d,#00ff2a,#00ff26,#0aff22,#1aff1f,#2bff1b,#3dff17,#50ff12,#63ff0e,#77ff09,#8cff05,#a1ff00,#b8ff00,#cfff00,#e7ff00,#fffd00,#ffe600,#ffd100,#ffbf00)"></i><i style="margin-left:1px;width:388px;background:linear-gradient(90deg,#00ff62,#00ff60,#00ff5e,#00ff5c,#00ff5a,#00ff57,#00ff55,#00ff53,#00ff51,#00ff4e,#00ff4c,#00ff49,#00ff46,#00ff44,#00ff41,#00ff3e,#00ff3b,#00ff38,#00ff35,#00ff32,#00ff2e,#00ff2b,#00ff27,#0eff23,#1fff20,#30ff1c,#43ff17,#56ff13,#6aff0f,#7eff0a,#93ff05,#aaff00,#c1ff00,#d9ff00,#f2ff00,#fff300,#ffdc00,#ffc900,#ffb800)"></i><i style="margin-left:1px;width:390px;background:linear-gradient(90deg,#00ff63,#00ff61,#00ff60,#00ff5e,#00ff5b,#00ff59,#00ff57,#00ff55,#00ff53,#00ff50,#00ff4e,#00ff4b,#00ff49,#00ff46,#00ff44,#00ff41,#00ff3e,#00ff3b,#00ff38,#00ff35,#00ff31,#00ff2e,#00ff2b,#07ff27,#18ff23,#29ff1f,#3bff1b,#4dff17,#60ff13,#74ff0e,#89ff0a,#9eff05,#b4ff00,#ccff00,#e4ff00,#fdff00,#ffe900,#ffd400,#ffc200,#ffb200)"></i><i style="margin-left:1px;width:393px;background:linear-gradient(90deg,#00ff65,#00ff63,#00ff61,#00ff5f,#00ff5d,#00ff5b,#00ff59,#00ff57,#00ff54,#00ff52,#00ff4f,#00ff4d,#00ff4a,#00ff48,#00ff45,#00ff42,#00ff3f,#00ff3c,#00ff39,#00ff36,#00ff33,#00ff2f,#00ff2c,#0bff28,#1cff24,#2eff20,#40ff1c,#53ff18,#67ff14,#7bff0f,#90ff0a,#a6ff06,#bdff00,#d5ff00,#eeff00,#fff600,#ffdf00,#ffcb00,#ffba00,#ffab00)"></i><i style="margin-left:2px;width:395px;background:linear-gradient(90deg,#00ff66,#00ff65,#00ff63,#00ff61,#00ff5e,#00ff5c,#00ff5a,#00ff58,#00ff56,#00ff53,#00ff51,#00ff4e,#00ff4c,#00ff49,#00ff46,#00ff43,#00ff40,#00ff3d,#00ff3a,#00ff37,#00ff34,#00ff30,#00ff2d,#10ff29,#22ff25,#34ff21,#46ff1d,#5aff19,#6eff14,#83ff10,#99ff0b,#afff06,#c7ff01,#e0ff00,#f9ff00,#ffeb00,#ffd600,#ffc300,#ffb200,#ffa400)"></i><i style="margin-left:2px;width:397px;background:linear-gradient(90deg,#00ff68,#00ff66,#00ff64,#00ff62,#00ff60,#00ff5e,#00ff5c,#00ff5a,#00ff57,#00ff55,#00ff52,#00ff50,#00ff4d,#00ff4b,#00ff48,#00ff45,#00ff42,#00ff3f,#00ff3c,#00ff39,#00ff35,#00ff32,#03ff2e,#14ff2a,#25ff27,#38ff23,#4bff1e,#5fff1a,#73ff16,#89ff11,#9fff0c,#b6ff07,#ceff02,#e8ff00,#fffc00,#ffe400,#ffcf00,#ffbc00,#ffad00,#ff9e00)"></i><i style="margin-left:2px;width:400px;background:linear-gradient(90deg,#00ff6a,#00ff68,#00ff66,#00ff64,#00ff62,#00ff60,#00ff5e,#00ff5c,#00ff59,#00ff57,#00ff55,#00ff52,#00ff50,#00ff4d,#00ff4a,#00ff48,#00ff45,#00ff42,#00ff3f,#00ff3c,#00ff38,#00ff35,#00ff31,#0eff2e,#1fff2a,#31ff26,#44ff22,#57ff1e,#6bff1a,#80ff15,#96ff11,#acff0c,#c4ff07,#dcff01,#f6ff00,#ffee00,#ffd800,#ffc500,#ffb400,#ffa500,#ff9800)"></i><i style="margin-left:2px;width:402px;background:linear-gradient(90deg,#00ff6b,#00ff6a,#00ff68,#00ff66,#00ff64,#00ff62,#00ff5f,#00ff5d,#00ff5b,#00ff59,#00ff56,#00ff54,#00ff51,#00ff4f,#00ff4c,#00ff49,#00ff46,#00ff43,#00ff40,#00ff3d,#00ff3a,#00ff36,#00ff33,#11ff2f,#23ff2c,#35ff28,#48ff24,#5cff1f,#70ff1b,#86ff16,#9cff12,#b3ff0d,#cbff08,#e4ff02,#ffff00,#ffe600,#ffd100,#ffbe00,#ffae00,#ffa000,#ff9300)"></i><i style="margin-left:3px;width:404px;background:linear-gradient(90deg,#00ff6d,#00ff6b,#00ff69,#00ff67,#00ff65,#00ff63,#00ff61,#00ff5f,#00ff5d,#00ff5a,#00ff58,#00ff55,#00ff53,#00ff50,#00ff4d,#00ff4b,#00ff48,#00ff45,#00ff42,#00ff3e,#00ff3b,#00ff38,#05ff34,#16ff30,#28ff2d,#3bff29,#4fff25,#63ff20,#78ff1c,#8eff17,#a5ff12,#bcff0d,#d5ff08,#efff03,#fff400,#ffdc00,#ffc800,#ffb700,#ffa700,#ff9a00,#ff8d00)"></i><i style="margin-left:3px;width:407px;background:linear-gradient(90deg,#00ff6f,#00ff6d,#00ff6b,#00ff69,#00ff67,#00ff65,#00ff63,#00ff60,#00ff5e,#00ff5c,#00ff59,#00ff57,#00ff54,#00ff52,#00ff4f,#00ff4c,#00ff49,#00ff46,#00ff43,#00ff40,#00ff3d,#00ff39,#09ff35,#1bff32,#2dff2e,#41ff2a,#55ff26,#69ff21,#7fff1d,#96ff18,#adff13,#c6ff0e,#dfff09,#faff03,#ffea00,#ffd300,#ffc000,#ffaf00,#ffa100,#ff9300,#ff8800)"></i><i style="margin-left:3px;width:409px;background:linear-gradient(90deg,#00ff71,#00ff6f,#00ff6d,#00ff6b,#00ff69,#00ff67,#00ff64,#00ff62,#00ff60,#00ff5e,#00ff5b,#00ff59,#00ff56,#00ff53,#00ff51,#00ff4e,#00ff4b,#00ff48,#00ff45,#00ff42,#00ff3e,#00ff3b,#0cff37,#1fff33,#31ff2f,#45ff2b,#59ff27,#6fff23,#85ff1e,#9cff19,#b4ff14,#cdff0f,#e7ff0a,#fffb04,#ffe200,#ffcc00,#ffba00,#ffaa00,#ff9b00,#ff8f00,#ff8300)"></i><i style="margin-left:3px;width:412px;background:linear-gradient(90deg,#00ff72,#00ff71,#00ff6f,#00ff6d,#00ff6b,#00ff69,#00ff67,#00ff64,#00ff62,#00ff60,#00ff5e,#00ff5b,#00ff59,#00ff56,#00ff53,#00ff51,#00ff4e,#00ff4b,#00ff48,#00ff45,#00ff41,#00ff3e,#07ff3a,#19ff37,#2bff33,#3eff2f,#52ff2b,#67ff27,#7dff22,#93ff1e,#abff19,#c3ff14,#ddff0f,#f7ff09,#ffec03,#ffd500,#ffc200,#ffb100,#ffa200,#ff9500,#ff8900,#ff7e00)"></i><i style="margin-left:4px;width:414px;background:linear-gradient(90deg,#00ff74,#00ff72,#00ff70,#00ff6e,#00ff6c,#00ff6a,#00ff68,#00ff66,#00ff64,#00ff61,#00ff5f,#00ff5d,#00ff5a,#00ff58,#00ff55,#00ff52,#00ff4f,#00ff4c,#00ff49,#00ff46,#00ff43,#00ff3f,#0cff3c,#1eff38,#31ff34,#45ff30,#59ff2c,#6eff28,#85ff23,#9cff1f,#b4ff1a,#cdff15,#e7ff10,#fffb0a,#ffe204,#ffcc00,#ffba00,#ffa900,#ff9b00,#ff8f00,#ff8300,#ff7900)"></i><i style="margin-left:4px;width:416px;background:linear-gradient(90deg,#00ff76,#00ff74,#00ff72,#00ff70,#00ff6e,#00ff6c,#00ff6a,#00ff68,#00ff66,#00ff63,#00ff61,#00ff5f,#00ff5c,#00ff59,#00ff57,#00ff54,#00ff51,#00ff4e,#00ff4b,#00ff48,#00ff45,#00ff41,#0fff3e,#22ff3a,#35ff36,#49ff32,#5eff2e,#74ff29,#8aff25,#a2ff20,#bbff1b,#d5ff16,#f0ff11,#fff30b,#ffda04,#ffc600,#ffb400,#ffa400,#ff9600,#ff8a00,#ff7f00,#ff7500)"></i><i style="margin-left:4px;width:419px;background:linear-gradient(90deg,#00ff78,#00ff76,#00ff74,#00ff72,#00ff70,#00ff6e,#00ff6c,#00ff6a,#00ff67,#00ff65,#00ff63,#00ff60,#00ff5e,#00ff5b,#00ff58,#00ff56,#00ff53,#00ff50,#00ff4d,#00ff49,#00ff46,#01ff43,#14ff3f,#27ff3b,#3aff37,#4fff33,#64ff2f,#7bff2b,#92ff26,#aaff21,#c4ff1c,#dfff17,#faff12,#ffe80b,#ffd105,#ffbe00,#ffac00,#ff9d00,#ff9000,#ff8400,#ff7a00,#ff7000)"></i><i style="margin-left:5px;width:421px;background:linear-gradient(90deg,#00ff79,#00ff78,#00ff76,#00ff74,#00ff72,#00ff70,#00ff6e,#00ff6c,#00ff6a,#00ff67,#00ff65,#00ff63,#00ff60,#00ff5e,#00ff5b,#00ff58,#00ff56,#00ff53,#00ff50,#00ff4c,#00ff49,#00ff46,#0fff42,#22ff3f,#35ff3b,#49ff37,#5eff33,#74ff2f,#8bff2a,#a2ff26,#bbff21,#d5ff1c,#f0ff17,#fff210,#ffda0a,#ffc504,#ffb300,#ffa400,#ff9600,#ff8900,#ff7f00,#ff7500,#ff6c00)"></i><i style="margin-left:5px;width:423px;background:linear-gradient(90deg,#00ff7b,#00ff79,#00ff78,#00ff76,#00ff74,#00ff72,#00ff70,#00ff6e,#00ff6c,#00ff69,#00ff67,#00ff65,#00ff62,#00ff60,#00ff5d,#00ff5a,#00ff57,#00ff55,#00ff52,#00ff4e,#00ff4b,#00ff48,#12ff44,#25ff41,#39ff3d,#4eff39,#63ff35,#79ff31,#91ff2c,#a9ff27,#c2ff23,#ddff1d,#f9ff18,#ffea11,#ffd30a,#ffbf05,#ffad00,#ff9e00,#ff9100,#ff8500,#ff7a00,#ff7100,#ff6800)"></i><i style="margin-left:5px;width:426px;background:linear-gradient(90deg,#00ff7d,#00ff7b,#00ff7a,#00ff78,#00ff76,#00ff74,#00ff72,#00ff70,#00ff6d,#00ff6b,#00ff69,#00ff67,#00ff64,#00ff61,#00ff5f,#00ff5c,#00ff59,#00ff56,#00ff53,#00ff50,#00ff4d,#04ff49,#17ff46,#2aff42,#3fff3e,#54ff3a,#6aff36,#81ff32,#98ff2d,#b1ff29,#ccff24,#e7ff1f,#fffa19,#ffe011,#ffca0b,#ffb705,#ffa600,#ff9800,#ff8b00,#ff8000,#ff7500,#ff6c00,#ff6400)"></i><i style="margin-left:6px;width:428px;background:linear-gradient(90deg,#00ff7f,#00ff7d,#00ff7b,#00ff7a,#00ff78,#00ff76,#00ff74,#00ff71,#00ff6f,#00ff6d,#00ff6b,#00ff68,#00ff66,#00ff63,#00ff61,#00ff5e,#00ff5b,#00ff58,#00ff55,#00ff52,#00ff4f,#09ff4b,#1cff48,#30ff44,#45ff40,#5bff3c,#71ff38,#89ff33,#a1ff2f,#bbff2a,#d6ff25,#f2ff20,#ffef18,#ffd611,#ffc10b,#ffaf05,#ff9f01,#ff9200,#ff8500,#ff7a00,#ff7100,#ff6800,#ff6000)"></i><i style="margin-left:6px;width:430px;background:linear-gradient(90deg,#00ff81,#00ff7f,#00ff7d,#00ff7c,#00ff7a,#00ff78,#00ff76,#00ff74,#00ff72,#00ff70,#00ff6d,#00ff6b,#00ff69,#00ff66,#00ff64,#00ff61,#00ff5e,#00ff5b,#00ff58,#00ff55,#00ff52,#03ff4f,#16ff4b,#29ff48,#3eff44,#53ff40,#69ff3c,#80ff38,#97ff34,#b0ff2f,#cbff2a,#e6ff25,#fffb1f,#ffe117,#ffcb10,#ffb70a,#ffa705,#ff9801,#ff8b00,#ff8000,#ff7600,#ff6c00,#ff6400,#ff5c00)"></i><i style="margin-left:6px;width:433px;background:linear-gradient(90deg,#00ff83,#00ff81,#00ff80,#00ff7e,#00ff7c,#00ff7a,#00ff78,#00ff76,#00ff74,#00ff72,#00ff6f,#00ff6d,#00ff6b,#00ff68,#00ff66,#00ff63,#00ff60,#00ff5d,#00ff5a,#00ff57,#00ff54,#07ff51,#1bff4d,#2eff4a,#43ff46,#59ff42,#6fff3e,#87ff3a,#9fff35,#b9ff30,#d4ff2c,#f1ff26,#fff01f,#ffd817,#ffc210,#ffb00a,#ffa005,#ff9201,#ff8600,#ff7b00,#ff7100,#ff6800,#ff6000,#ff5900)"></i><i style="margin-left:7px;width:434px;background:linear-gradient(90deg,#00ff85,#00ff83,#00ff81,#00ff80,#00ff7e,#00ff7c,#00ff7a,#00ff78,#00ff76,#00ff73,#00ff71,#00ff6f,#00ff6d,#00ff6a,#00ff67,#00ff65,#00ff62,#00ff5f,#00ff5c,#00ff59,#00ff56,#0cff53,#1fff4f,#33ff4b,#49ff48,#5fff44,#76ff40,#8eff3b,#a7ff37,#c1ff32,#ddff2d,#faff28,#ffe81f,#ffd018,#ffbb11,#ffaa0b,#ff9b06,#ff8d01,#ff8100,#ff7700,#ff6d00,#ff6400,#ff5d00,#ff5500)"></i><i style="margin-left:7px;width:437px;background:linear-gradient(90deg,#00ff87,#00ff85,#00ff83,#00ff82,#00ff80,#00ff7e,#00ff7c,#00ff7a,#00ff78,#00ff76,#00ff73,#00ff71,#00ff6f,#00ff6c,#00ff6a,#00ff67,#00ff64,#00ff61,#00ff5e,#00ff5b,#00ff58,#10ff55,#24ff51,#39ff4d,#4eff4a,#65ff46,#7dff41,#96ff3d,#b0ff39,#cbff34,#e7ff2f,#fff928,#ffde1f,#ffc718,#ffb411,#ffa30b,#ff9406,#ff8702,#ff7c00,#ff7200,#ff6900,#ff6000,#ff5900,#ff5200)"></i><i style="margin-left:7px;width:440px;background:linear-gradient(90deg,#00ff89,#00ff87,#00ff86,#00ff84,#00ff82,#00ff80,#00ff7e,#00ff7c,#00ff7a,#00ff78,#00ff76,#00ff74,#00ff71,#00ff6f,#00ff6c,#00ff6a,#00ff67,#00ff64,#00ff62,#00ff5f,#00ff5b,#0bff58,#1eff55,#33ff51,#48ff4e,#5eff4a,#76ff46,#8eff42,#a7ff3d,#c2ff39,#deff34,#fbff2f,#ffe726,#ffcf1d,#ffbb16,#ffa910,#ff9a0a,#ff8c06,#ff8001,#ff7600,#ff6c00,#ff6400,#ff5c00,#ff5500,#ff4e00)"></i><i style="margin-left:8px;width:441px;background:linear-gradient(90deg,#00ff8b,#00ff89,#00ff88,#00ff86,#00ff84,#00ff82,#00ff80,#00ff7e,#00ff7c,#00ff7a,#00ff78,#00ff76,#00ff73,#00ff71,#00ff6f,#00ff6c,#00ff69,#00ff67,#00ff64,#00ff61,#00ff5e,#0fff5a,#23ff57,#38ff53,#4eff50,#65ff4c,#7cff48,#95ff44,#afff3f,#caff3b,#e7ff36,#fff92f,#ffde26,#ffc71d,#ffb416,#ffa310,#ff940b,#ff8706,#ff7c02,#ff7200,#ff6800,#ff6000,#ff5900,#ff5200,#ff4b00)"></i><i style="margin-left:8px;width:444px;background:linear-gradient(90deg,#00ff8d,#00ff8c,#00ff8a,#00ff88,#00ff86,#00ff84,#00ff83,#00ff81,#00ff7f,#00ff7c,#00ff7a,#00ff78,#00ff76,#00ff73,#00ff71,#00ff6e,#00ff6c,#00ff69,#00ff66,#00ff63,#00ff60,#14ff5c,#28ff59,#3eff55,#54ff52,#6bff4e,#84ff4a,#9dff46,#b8ff41,#d4ff3c,#f2ff37,#ffee2f,#ffd525,#ffbf1d,#ffad16,#ff9c10,#ff8e0b,#ff8206,#ff7702,#ff6d00,#ff6400,#ff5c00,#ff5500,#ff4e00,#ff4800)"></i><i style="margin-left:8px;width:447px;background:linear-gradient(90deg,#00ff8f,#00ff8e,#00ff8c,#00ff8a,#00ff89,#00ff87,#00ff85,#00ff83,#00ff81,#00ff7f,#00ff7d,#00ff7a,#00ff78,#00ff76,#00ff73,#00ff70,#00ff6e,#00ff6b,#00ff68,#00ff65,#04ff62,#18ff5f,#2dff5b,#43ff58,#5aff54,#72ff50,#8bff4c,#a5ff48,#c1ff43,#deff3e,#fdff39,#ffe42f,#ffcc25,#ffb71d,#ffa616,#ff9610,#ff890b,#ff7d07,#ff7202,#ff6800,#ff6000,#ff5800,#ff5100,#ff4b00,#ff4500)"></i><i style="margin-left:9px;width:448px;background:linear-gradient(90deg,#00ff91,#00ff90,#00ff8e,#00ff8c,#00ff8b,#00ff89,#00ff87,#00ff85,#00ff83,#00ff81,#00ff7f,#00ff7c,#00ff7a,#00ff78,#00ff75,#00ff73,#00ff70,#00ff6d,#00ff6a,#00ff67,#08ff64,#1dff61,#32ff5d,#49ff5a,#60ff56,#79ff52,#92ff4e,#adff4a,#caff45,#e8ff40,#fff73a,#ffdc2f,#ffc425,#ffb11d,#ffa017,#ff9111,#ff840c,#ff7807,#ff6e03,#ff6500,#ff5c00,#ff5500,#ff4e00,#ff4800,#ff4200)"></i><i style="margin-left:9px;width:451px;background:linear-gradient(90deg,#00ff94,#00ff92,#00ff90,#00ff8f,#00ff8d,#00ff8b,#00ff89,#00ff88,#00ff86,#00ff84,#00ff82,#00ff7f,#00ff7d,#00ff7b,#00ff78,#00ff76,#00ff73,#00ff71,#00ff6e,#00ff6b,#04ff68,#18ff65,#2dff61,#43ff5e,#5aff5a,#72ff57,#8bff53,#a5ff4e,#c1ff4a,#deff46,#fdff41,#ffe435,#ffcc2b,#ffb723,#ffa51c,#ff9615,#ff8810,#ff7c0b,#ff7207,#ff6803,#ff6000,#ff5800,#ff5100,#ff4a00,#ff4400,#ff3f00)"></i><i style="margin-left:10px;width:453px;background:linear-gradient(90deg,#00ff96,#00ff94,#00ff93,#00ff91,#00ff8f,#00ff8d,#00ff8c,#00ff8a,#00ff88,#00ff86,#00ff84,#00ff82,#00ff7f,#00ff7d,#00ff7b,#00ff78,#00ff76,#00ff73,#00ff70,#00ff6d,#09ff6a,#1eff67,#33ff64,#4aff60,#61ff5c,#7aff59,#94ff55,#afff51,#ccff4c,#eaff47,#fff540,#ffda34,#ffc32b,#ffaf22,#ff9e1b,#ff8f15,#ff8210,#ff770b,#ff6d07,#ff6403,#ff5b00,#ff5400,#ff4d00,#ff4700,#ff4100,#ff3c00)"></i><i style="margin-left:10px;width:455px;background:linear-gradient(90deg,#00ff98,#00ff97,#00ff95,#00ff93,#00ff92,#00ff90,#00ff8e,#00ff8c,#00ff8a,#00ff88,#00ff86,#00ff84,#00ff82,#00ff80,#00ff7d,#00ff7b,#00ff78,#00ff75,#00ff73,#00ff70,#0cff6d,#21ff69,#37ff66,#4eff63,#67ff5f,#80ff5b,#9aff57,#b6ff53,#d4ff4f,#f3ff4a,#ffec40,#ffd235,#ffbc2b,#ffa923,#ff991c,#ff8b16,#ff7e10,#ff730b,#ff6907,#ff6003,#ff5800,#ff5100,#ff4a00,#ff4400,#ff3f00,#ff3a00)"></i><i style="margin-left:10px;width:458px;background:linear-gradient(90deg,#00ff9a,#00ff99,#00ff97,#00ff96,#00ff94,#00ff92,#00ff91,#00ff8f,#00ff8d,#00ff8b,#00ff89,#00ff87,#00ff84,#00ff82,#00ff80,#00ff7d,#00ff7b,#00ff78,#00ff75,#00ff72,#11ff6f,#26ff6c,#3dff69,#54ff65,#6dff62,#87ff5e,#a3ff5a,#bfff55,#deff51,#feff4c,#ffe23f,#ffc934,#ffb42b,#ffa223,#ff921c,#ff8516,#ff7910,#ff6e0c,#ff6507,#ff5c03,#ff5400,#ff4d00,#ff4700,#ff4100,#ff3c00,#ff3700)"></i><i style="margin-left:11px;width:460px;background:linear-gradient(90deg,#00ff9d,#00ff9b,#00ff9a,#00ff98,#00ff96,#00ff95,#00ff93,#00ff91,#00ff8f,#00ff8e,#00ff8c,#00ff89,#00ff87,#00ff85,#00ff83,#00ff80,#00ff7e,#00ff7b,#00ff79,#00ff76,#0dff73,#22ff70,#38ff6d,#50ff69,#68ff66,#82ff62,#9cff5e,#b8ff5a,#d6ff56,#f5ff51,#ffea46,#ffd03a,#ffba30,#ffa728,#ff9720,#ff891a,#ff7c14,#ff720f,#ff680b,#ff5f07,#ff5703,#ff5000,#ff4900,#ff4300,#ff3e00,#ff3900,#ff3400)"></i><i style="margin-left:11px;width:462px;background:linear-gradient(90deg,#00ff9f,#00ff9e,#00ff9c,#00ff9b,#00ff99,#00ff97,#00ff96,#00ff94,#00ff92,#00ff90,#00ff8e,#00ff8c,#00ff8a,#00ff88,#00ff86,#00ff83,#00ff81,#00ff7e,#00ff7b,#00ff79,#10ff76,#26ff73,#3dff6f,#55ff6c,#6dff69,#88ff65,#a3ff61,#c0ff5d,#deff59,#ffff54,#ffe146,#ffc83a,#ffb331,#ffa128,#ff9221,#ff841a,#ff7815,#ff6e10,#ff640b,#ff5c07,#ff5404,#ff4d00,#ff4600,#ff4100,#ff3b00,#ff3600,#ff3200)"></i><i style="margin-left:11px;width:465px;background:linear-gradient(90deg,#00ffa2,#00ffa0,#00ff9f,#00ff9d,#00ff9b,#00ff9a,#00ff98,#00ff96,#00ff95,#00ff93,#00ff91,#00ff8f,#00ff8d,#00ff8a,#00ff88,#00ff86,#00ff83,#00ff81,#00ff7e,#00ff7b,#15ff78,#2bff75,#42ff72,#5bff6f,#74ff6b,#8fff68,#acff64,#caff60,#e9ff5b,#fff453,#ffd845,#ffc03a,#ffac30,#ff9b28,#ff8c21,#ff7f1a,#ff7315,#ff6910,#ff600b,#ff5807,#ff5004,#ff4901,#ff4300,#ff3d00,#ff3800,#ff3300,#ff2f00)"></i><i style="margin-left:12px;width:466px;background:linear-gradient(90deg,#00ffa4,#00ffa2,#00ffa1,#00ff9f,#00ff9e,#00ff9c,#00ff9b,#00ff99,#00ff97,#00ff95,#00ff93,#00ff91,#00ff8f,#00ff8d,#00ff8b,#00ff89,#00ff86,#00ff84,#00ff81,#04ff7e,#1aff7b,#31ff78,#48ff75,#61ff72,#7cff6e,#97ff6a,#b4ff67,#d3ff63,#f3ff5e,#ffea52,#ffcf45,#ffb93a,#ffa530,#ff9528,#ff8721,#ff7a1b,#ff6f15,#ff6510,#ff5c0c,#ff5408,#ff4d04,#ff4601,#ff4000,#ff3b00,#ff3600,#ff3100,#ff2d00)"></i><i style="margin-left:12px;width:469px;background:linear-gradient(90deg,#00ffa6,#00ffa5,#00ffa4,#00ffa2,#00ffa1,#00ff9f,#00ff9d,#00ff9c,#00ff9a,#00ff98,#00ff96,#00ff94,#00ff92,#00ff90,#00ff8e,#00ff8b,#00ff89,#00ff86,#00ff84,#08ff81,#1fff7e,#36ff7b,#4eff78,#68ff75,#83ff71,#9fff6d,#bdff69,#ddff65,#ffff61,#ffe051,#ffc644,#ffb139,#ff9f30,#ff8f28,#ff8121,#ff751b,#ff6a15,#ff6110,#ff580c,#ff5008,#ff4904,#ff4301,#ff3d00,#ff3800,#ff3300,#ff2f00,#ff2a00)"></i><i style="margin-left:13px;width:471px;background:linear-gradient(90deg,#00ffa9,#00ffa8,#00ffa6,#00ffa5,#00ffa3,#00ffa2,#00ffa0,#00ff9e,#00ff9d,#00ff9b,#00ff99,#00ff97,#00ff95,#00ff93,#00ff91,#00ff8f,#00ff8d,#00ff8a,#00ff88,#05ff85,#1bff82,#32ff7f,#4aff7c,#63ff79,#7eff76,#9aff72,#b7ff6e,#d6ff6b,#f7ff66,#ffe759,#ffcc4b,#ffb63f,#ffa335,#ff932d,#ff8525,#ff781f,#ff6d19,#ff6314,#ff5b0f,#ff530b,#ff4c07,#ff4504,#ff3f01,#ff3a00,#ff3500,#ff3000,#ff2c00,#ff2800)"></i><i style="margin-left:13px;width:473px;background:linear-gradient(90deg,#00ffab,#00ffaa,#00ffa9,#00ffa7,#00ffa6,#00ffa4,#00ffa3,#00ffa1,#00ffa0,#00ff9e,#00ff9c,#00ff9a,#00ff98,#00ff96,#00ff94,#00ff92,#00ff90,#00ff8d,#00ff8b,#08ff88,#1fff85,#36ff82,#4fff7f,#69ff7c,#84ff79,#a0ff75,#bfff72,#dfff6e,#fffe69,#ffdf58,#ffc54b,#ffb03f,#ff9d35,#ff8e2d,#ff8026,#ff741f,#ff6919,#ff6014,#ff5710,#ff500c,#ff4908,#ff4204,#ff3d01,#ff3700,#ff3200,#ff2e00,#ff2a00,#ff2600)"></i><i style="margin-left:13px;width:476px;background:linear-gradient(90deg,#00ffae,#00ffad,#00ffab,#00ffaa,#00ffa9,#00ffa7,#00ffa6,#00ffa4,#00ffa2,#00ffa1,#00ff9f,#00ff9d,#00ff9b,#00ff99,#00ff97,#00ff95,#00ff93,#00ff90,#00ff8e,#0dff8b,#24ff88,#3cff86,#55ff83,#70ff7f,#8cff7c,#a9ff79,#c8ff75,#e9ff71,#fff368,#ffd557,#ffbd4a,#ffa83f,#ff9735,#ff882d,#ff7b25,#ff6f1f,#ff6519,#ff5c14,#ff5310,#ff4c0c,#ff4508,#ff3f05,#ff3a02,#ff3400,#ff3000,#ff2b00,#ff2700,#ff2300)"></i><i style="margin-left:14px;width:478px;background:linear-gradient(90deg,#00ffb1,#00ffaf,#00ffae,#00ffad,#00ffab,#00ffaa,#00ffa8,#00ffa7,#00ffa5,#00ffa3,#00ffa2,#00ffa0,#00ff9e,#00ff9c,#00ff9a,#00ff98,#00ff96,#00ff93,#00ff91,#13ff8e,#2aff8c,#43ff89,#5dff86,#78ff83,#95ff7f,#b4ff7c,#d4ff78,#f6ff74,#ffe765,#ffcb56,#ffb449,#ffa13e,#ff9034,#ff822c,#ff7525,#ff6a1f,#ff6019,#ff5714,#ff5010,#ff480c,#ff4208,#ff3c05,#ff3702,#ff3200,#ff2d00,#ff2900,#ff2500,#ff2100)"></i><i style="margin-left:14px;width:480px;background:linear-gradient(90deg,#00ffb3,#00ffb2,#00ffb1,#00ffb0,#00ffae,#00ffad,#00ffab,#00ffaa,#00ffa8,#00ffa7,#00ffa5,#00ffa3,#00ffa2,#00ffa0,#00ff9e,#00ff9c,#00ff9a,#00ff97,#00ff95,#0dff93,#24ff90,#3cff8d,#56ff8b,#71ff88,#8dff84,#abff81,#caff7e,#ebff7a,#fff06f,#ffd35e,#ffbb50,#ffa744,#ff953a,#ff8632,#ff792a,#ff6e24,#ff641e,#ff5b18,#ff5214,#ff4b0f,#ff440b,#ff3e08,#ff3905,#ff3402,#ff2f00,#ff2b00,#ff2700,#ff2300,#ff1f00)"></i><i style="margin-left:15px;width:482px;background:linear-gradient(90deg,#00ffb6,#00ffb5,#00ffb4,#00ffb2,#00ffb1,#00ffb0,#00ffae,#00ffad,#00ffab,#00ffaa,#00ffa8,#00ffa6,#00ffa5,#00ffa3,#00ffa1,#00ff9f,#00ff9d,#00ff9b,#00ff98,#13ff96,#2bff93,#44ff91,#5eff8e,#79ff8b,#96ff88,#b5ff85,#d6ff81,#f8ff7d,#ffe46d,#ffc95c,#ffb24f,#ff9f43,#ff8e3a,#ff8031,#ff742a,#ff6923,#ff5f1d,#ff5618,#ff4f14,#ff470f,#ff410c,#ff3b08,#ff3605,#ff3102,#ff2c00,#ff2800,#ff2400,#ff2100,#ff1d00)"></i><i style="margin-left:15px;width:485px;background:linear-gradient(90deg,#00ffb9,#00ffb8,#00ffb7,#00ffb5,#00ffb4,#00ffb3,#00ffb1,#00ffb0,#00ffae,#00ffad,#00ffab,#00ffaa,#00ffa8,#00ffa6,#00ffa4,#00ffa2,#00ffa0,#00ff9e,#01ff9c,#18ff99,#30ff97,#4aff94,#65ff91,#81ff8f,#9fff8b,#bfff88,#e0ff85,#fffa7f,#ffda6b,#ffc05b,#ffab4e,#ff9843,#ff8839,#ff7b31,#ff6f29,#ff6423,#ff5b1d,#ff5218,#ff4b14,#ff440f,#ff3e0c,#ff3808,#ff3305,#ff2e02,#ff2a00,#ff2600,#ff2200,#ff1e00,#ff1b00)"></i><i style="margin-left:16px;width:486px;background:linear-gradient(90deg,#00ffbc,#00ffbb,#00ffb9,#00ffb8,#00ffb7,#00ffb6,#00ffb4,#00ffb3,#00ffb1,#00ffb0,#00ffae,#00ffad,#00ffab,#00ffa9,#00ffa7,#00ffa6,#00ffa4,#00ffa1,#05ff9f,#1dff9d,#36ff9a,#50ff98,#6cff95,#89ff92,#a8ff8f,#c8ff8c,#ebff89,#ffef7d,#ffd16a,#ffb95a,#ffa44d,#ff9242,#ff8339,#ff7631,#ff6a2a,#ff6023,#ff571d,#ff4f18,#ff4814,#ff4110,#ff3b0c,#ff3608,#ff3105,#ff2c02,#ff2800,#ff2400,#ff2000,#ff1c00,#ff1900)"></i><i style="margin-left:16px;width:489px;background:linear-gradient(90deg,#00ffbf,#00ffbe,#00ffbc,#00ffbb,#00ffba,#00ffb9,#00ffb7,#00ffb6,#00ffb5,#00ffb3,#00ffb2,#00ffb0,#00ffae,#00ffad,#00ffab,#00ffa9,#00ffa7,#00ffa5,#0affa3,#22ffa1,#3cff9e,#56ff9c,#73ff99,#91ff96,#b1ff93,#d2ff90,#f6ff8d,#ffe57b,#ffc868,#ffb159,#ff9d4d,#ff8c42,#ff7d39,#ff7130,#ff6629,#ff5c23,#ff531d,#ff4b18,#ff4414,#ff3e10,#ff380c,#ff3309,#ff2e05,#ff2903,#ff2500,#ff2100,#ff1e00,#ff1a00,#ff1700)"></i><i style="margin-left:16px;width:491px;background:linear-gradient(90deg,#00ffc2,#00ffc1,#00ffbf,#00ffbe,#00ffbd,#00ffbc,#00ffbb,#00ffba,#00ffb8,#00ffb7,#00ffb5,#00ffb4,#00ffb2,#00ffb1,#00ffaf,#00ffad,#00ffab,#00ffa9,#04ffa7,#1cffa5,#35ffa3,#50ffa1,#6cff9e,#89ff9c,#a8ff99,#c9ff96,#ecff93,#ffee86,#ffd072,#ffb762,#ffa254,#ff9148,#ff823f,#ff7536,#ff692e,#ff5f28,#ff5622,#ff4e1c,#ff4718,#ff4013,#ff3a0f,#ff350c,#ff3008,#ff2b05,#ff2703,#ff2300,#ff1f00,#ff1c00,#ff1900,#ff1600)"></i><i style="margin-left:17px;width:493px;background:linear-gradient(90deg,#00ffc4,#00ffc4,#00ffc2,#00ffc1,#00ffc0,#00ffbf,#00ffbe,#00ffbd,#00ffbb,#00ffba,#00ffb9,#00ffb7,#00ffb6,#00ffb4,#00ffb3,#00ffb1,#00ffaf,#00ffad,#0affab,#23ffa9,#3dffa7,#58ffa5,#75ffa2,#93ff9f,#b3ff9d,#d5ff9a,#f9ff97,#ffe283,#ffc66f,#ffae60,#ff9b53,#ff8a47,#ff7c3e,#ff6f35,#ff642e,#ff5b27,#ff5221,#ff4a1c,#ff4318,#ff3d13,#ff370f,#ff320c,#ff2d09,#ff2805,#ff2403,#ff2000,#ff1d00,#ff1a00,#ff1600,#ff1400)"></i><i style="margin-left:17px;width:496px;background:linear-gradient(90deg,#00ffc8,#00ffc7,#00ffc6,#00ffc5,#00ffc4,#00ffc2,#00ffc1,#00ffc0,#00ffbf,#00ffbe,#00ffbc,#00ffbb,#00ffb9,#00ffb8,#00ffb6,#00ffb5,#00ffb3,#00ffb1,#0fffaf,#28ffad,#43ffab,#5fffa9,#7cffa6,#9bffa4,#bdffa1,#e0ff9e,#fff997,#ffd881,#ffbd6e,#ffa75f,#ff9452,#ff8447,#ff763d,#ff6a35,#ff602e,#ff5627,#ff4e21,#ff471c,#ff4018,#ff3a13,#ff340f,#ff2f0c,#ff2a09,#ff2606,#ff2203,#ff1e00,#ff1b00,#ff1800,#ff1400,#ff1200)"></i><i style="margin-left:18px;width:497px;background:linear-gradient(90deg,#00ffcb,#00ffca,#00ffc9,#00ffc8,#00ffc7,#00ffc6,#00ffc5,#00ffc4,#00ffc2,#00ffc1,#00ffc0,#00ffbe,#00ffbd,#00ffbc,#00ffba,#00ffb8,#00ffb7,#00ffb5,#14ffb3,#2effb1,#49ffaf,#66ffad,#84ffab,#a4ffa8,#c7ffa6,#ebffa3,#ffee95,#ffce7f,#ffb56d,#ffa05e,#ff8e51,#ff7f46,#ff723d,#ff6635,#ff5c2e,#ff5327,#ff4b22,#ff441c,#ff3d18,#ff3714,#ff3210,#ff2d0c,#ff2809,#ff2406,#ff2003,#ff1c01,#ff1900,#ff1600,#ff1300,#ff1000)"></i><i style="margin-left:18px;width:500px;background:linear-gradient(90deg,#00ffce,#00ffcd,#00ffcc,#00ffcb,#00ffca,#00ffc9,#00ffc8,#00ffc7,#00ffc6,#00ffc5,#00ffc4,#00ffc3,#00ffc1,#00ffc0,#00ffbe,#00ffbd,#00ffbb,#00ffba,#10ffb8,#29ffb6,#44ffb4,#60ffb2,#7effb0,#9effae,#c0ffab,#e3ffa9,#fff5a0,#ffd488,#ffba75,#ffa465,#ff9258,#ff824c,#ff7442,#ff693a,#ff5e32,#ff552b,#ff4d25,#ff4520,#ff3f1b,#ff3817,#ff3313,#ff2e0f,#ff290c,#ff2509,#ff2106,#ff1d03,#ff1a01,#ff1700,#ff1400,#ff1100,#ff0e00)"></i><i style="margin-left:19px;width:502px;background:linear-gradient(90deg,#00ffd1,#00ffd0,#00ffcf,#00ffce,#00ffce,#00ffcd,#00ffcc,#00ffcb,#00ffca,#00ffc9,#00ffc7,#00ffc6,#00ffc5,#00ffc4,#00ffc2,#00ffc1,#00ffbf,#00ffbe,#16ffbc,#30ffba,#4cffb9,#69ffb7,#88ffb5,#a9ffb2,#ccffb0,#f1ffae,#ffe89c,#ffca85,#ffb172,#ff9c63,#ff8b56,#ff7c4b,#ff6f41,#ff6439,#ff5a32,#ff512b,#ff4925,#ff4220,#ff3b1b,#ff3517,#ff3013,#ff2b0f,#ff270c,#ff2209,#ff1f06,#ff1b03,#ff1801,#ff1500,#ff1200,#ff0f00,#ff0c00)"></i><i style="margin-left:19px;width:504px;background:linear-gradient(90deg,#00ffd4,#00ffd3,#00ffd3,#00ffd2,#00ffd1,#00ffd0,#00ffcf,#00ffce,#00ffcd,#00ffcc,#00ffcb,#00ffca,#00ffc9,#00ffc8,#00ffc7,#00ffc5,#00ffc4,#01ffc2,#1affc1,#35ffbf,#51ffbd,#6fffbb,#8fffb9,#b0ffb7,#d4ffb5,#fbffb3,#ffdf9a,#ffc284,#ffaa72,#ff9663,#ff8656,#ff774b,#ff6b41,#ff6039,#ff5632,#ff4d2b,#ff4625,#ff3f20,#ff391b,#ff3317,#ff2e13,#ff290f,#ff240c,#ff2009,#ff1d06,#ff1903,#ff1601,#ff1300,#ff1000,#ff0d00,#ff0b00)"></i><i style="margin-left:20px;width:506px;background:linear-gradient(90deg,#00ffd8,#00ffd7,#00ffd6,#00ffd5,#00ffd5,#00ffd4,#00ffd3,#00ffd2,#00ffd1,#00ffd0,#00ffcf,#00ffce,#00ffcd,#00ffcc,#00ffcb,#00ffc9,#00ffc8,#07ffc7,#21ffc5,#3cffc4,#5affc2,#78ffc0,#99ffbe,#bcffbc,#e1ffba,#fff6b1,#ffd497,#ffb881,#ffa270,#ff8f61,#ff7f55,#ff714a,#ff6541,#ff5b38,#ff5231,#ff492b,#ff4225,#ff3b20,#ff351b,#ff3017,#ff2b13,#ff260f,#ff220c,#ff1e09,#ff1a06,#ff1704,#ff1401,#ff1100,#ff0e00,#ff0c00,#ff0900)"></i><i style="margin-left:20px;width:509px;background:linear-gradient(90deg,#00ffdb,#00ffda,#00ffda,#00ffd9,#00ffd8,#00ffd7,#00ffd7,#00ffd6,#00ffd5,#00ffd4,#00ffd3,#00ffd2,#00ffd1,#00ffd0,#00ffcf,#00ffce,#00ffcd,#0bffcb,#26ffca,#42ffc8,#60ffc7,#80ffc5,#a2ffc3,#c6ffc2,#edffc0,#ffeaae,#ffca94,#ffb080,#ff9b6e,#ff8960,#ff7954,#ff6c49,#ff6140,#ff5738,#ff4e31,#ff462b,#ff3f25,#ff3820,#ff321b,#ff2d17,#ff2813,#ff240f,#ff200c,#ff1c09,#ff1806,#ff1504,#ff1201,#ff0f00,#ff0c00,#ff0a00,#ff0800)"></i><i style="margin-left:21px;width:510px;background:linear-gradient(90deg,#00ffde,#00ffde,#00ffdd,#00ffdd,#00ffdc,#00ffdb,#00ffda,#00ffda,#00ffd9,#00ffd8,#00ffd7,#00ffd6,#00ffd5,#00ffd5,#00ffd3,#00ffd2,#00ffd1,#11ffd0,#2cffcf,#49ffcd,#68ffcc,#89ffca,#acffc9,#d1ffc7,#f9ffc5,#ffdfab,#ffc192,#ffa87e,#ff946d,#ff835f,#ff7453,#ff6849,#ff5d40,#ff5338,#ff4a31,#ff432b,#ff3c25,#ff3520,#ff301b,#ff2b17,#ff2613,#ff2210,#ff1e0c,#ff1a09,#ff1607,#ff1304,#ff1001,#ff0d00,#ff0b00,#ff0800,#ff0600)"></i><i style="margin-left:21px;width:513px;background:linear-gradient(90deg,#00ffe2,#00ffe1,#00ffe1,#00ffe0,#00ffe0,#00ffdf,#00ffdf,#00ffde,#00ffdd,#00ffdc,#00ffdc,#00ffdb,#00ffda,#00ffd9,#00ffd8,#00ffd7,#00ffd6,#0dffd5,#28ffd4,#44ffd3,#63ffd2,#83ffd0,#a6ffcf,#caffce,#f1ffcc,#ffe6b6,#ffc69c,#ffad86,#ff9875,#ff8666,#ff7759,#ff6a4e,#ff5f45,#ff553d,#ff4c35,#ff442f,#ff3d29,#ff3723,#ff311f,#ff2c1a,#ff2716,#ff2312,#ff1e0f,#ff1b0c,#ff1709,#ff1406,#ff1104,#ff0e01,#ff0c00,#ff0900,#ff0700,#ff0500)"></i><i style="margin-left:22px;width:515px;background:linear-gradient(90deg,#00ffe5,#00ffe5,#00ffe5,#00ffe4,#00ffe4,#00ffe3,#00ffe2,#00ffe2,#00ffe1,#00ffe1,#00ffe0,#00ffdf,#00ffdf,#00ffde,#00ffdd,#00ffdc,#00ffdb,#13ffda,#2fffd9,#4dffd8,#6cffd7,#8dffd6,#b1ffd5,#d7ffd3,#fffed1,#ffd9b1,#ffbc98,#ffa484,#ff9073,#ff7f64,#ff7158,#ff654d,#ff5a44,#ff503c,#ff4835,#ff402e,#ff3a28,#ff3423,#ff2e1e,#ff291a,#ff2416,#ff2012,#ff1c0f,#ff180c,#ff1509,#ff1206,#ff0f04,#ff0c01,#ff0a00,#ff0700,#ff0500,#ff0300)"></i><i style="margin-left:22px;width:517px;background:linear-gradient(90deg,#00ffe9,#00ffe9,#00ffe8,#00ffe8,#00ffe8,#00ffe7,#00ffe7,#00ffe6,#00ffe6,#00ffe5,#00ffe4,#00ffe4,#00ffe3,#00ffe3,#00ffe2,#00ffe1,#00ffe0,#17ffe0,#34ffdf,#52ffde,#72ffdd,#95ffdc,#b9ffdb,#e1ffda,#fff4cf,#ffd1b0,#ffb497,#ff9e83,#ff8a72,#ff7a64,#ff6c58,#ff614d,#ff5644,#ff4d3c,#ff4535,#ff3d2e,#ff3729,#ff3123,#ff2c1f,#ff271a,#ff2216,#ff1e13,#ff1a0f,#ff170c,#ff1309,#ff1007,#ff0d04,#ff0b02,#ff0800,#ff0600,#ff0400,#ff0200)"></i><i style="margin-left:23px;width:519px;background:linear-gradient(90deg,#00ffed,#00ffed,#00ffec,#00ffec,#00ffec,#00ffeb,#00ffeb,#00ffea,#00ffea,#00ffe9,#00ffe9,#00ffe9,#00ffe8,#00ffe7,#00ffe7,#00ffe6,#02ffe6,#1effe5,#3cffe4,#5bffe3,#7cffe3,#a0ffe2,#c6ffe1,#eeffe0,#ffe6c9,#ffc6ac,#ffab94,#ff9580,#ff8370,#ff7462,#ff6757,#ff5c4c,#ff5243,#ff493b,#ff4134,#ff3a2e,#ff3428,#ff2e23,#ff291e,#ff241a,#ff2016,#ff1c13,#ff180f,#ff140c,#ff1109,#ff0e07,#ff0c04,#ff0902,#ff0700,#ff0400,#ff0200,#ff0000)"></i><i style="margin-left:23px;width:522px;background:linear-gradient(90deg,#00fff1,#00fff0,#00fff0,#00fff0,#00fff0,#00ffef,#00ffef,#00ffef,#00ffee,#00ffee,#00ffee,#00ffed,#00ffed,#00ffed,#00ffec,#00ffec,#00ffeb,#1affeb,#37ffea,#56ffea,#77ffe9,#9affe8,#c0ffe8,#e8ffe7,#ffedd6,#ffcab6,#ffaf9d,#ff9988,#ff8677,#ff7769,#ff695c,#ff5d52,#ff5348,#ff4a40,#ff4238,#ff3b32,#ff352c,#ff2f27,#ff2a22,#ff251d,#ff2019,#ff1c15,#ff1912,#ff150f,#ff120c,#ff0f09,#ff0c06,#ff0a04,#ff0702,#ff0500,#ff0300,#ff0100,#ff0000)"></i><i style="margin-left:24px;width:523px;background:linear-gradient(90deg,#00fff5,#00fff4,#00fff4,#00fff4,#00fff4,#00fff4,#00fff3,#00fff3,#00fff3,#00fff3,#00fff3,#00fff2,#00fff2,#00fff2,#00fff1,#00fff1,#04fff1,#20fff0,#3efff0,#5efff0,#80ffef,#a4ffef,#cbffee,#f4ffee,#ffe1d1,#ffc1b3,#ffa79b,#ff9287,#ff8076,#ff7168,#ff645c,#ff5951,#ff4f48,#ff4740,#ff3f38,#ff3832,#ff322c,#ff2c27,#ff2722,#ff231d,#ff1e19,#ff1a16,#ff1712,#ff130f,#ff100c,#ff0d09,#ff0b07,#ff0804,#ff0602,#ff0300,#ff0100,#ff0000,#ff0000)"></i><i style="margin-left:24px;width:526px;background:linear-gradient(90deg,#00fff9,#00fff8,#00fff8,#00fff8,#00fff8,#00fff8,#00fff8,#00fff8,#00fff8,#00fff8,#00fff8,#00fff7,#00fff7,#00fff7,#00fff7,#00fff7,#09fff7,#26fff6,#44fff6,#65fff6,#88fff6,#aefff6,#d6fff5,#fffdf3,#ffd6ce,#ffb8b0,#ff9f99,#ff8b85,#ff7a75,#ff6c67,#ff605b,#ff5550,#ff4b47,#ff433f,#ff3c38,#ff3532,#ff2f2c,#ff2a27,#ff2522,#ff201d,#ff1c19,#ff1816,#ff1512,#ff110f,#ff0e0c,#ff0b09,#ff0907,#ff0604,#ff0402,#ff0200,#ff0000,#ff0000,#ff0000)"></i><i style="margin-left:25px;width:528px;background:linear-gradient(90deg,#00fffd,#00fffd,#00fffd,#00fffd,#00fffd,#00fffd,#00fffd,#00fffd,#00fffd,#00fffd,#00fffd,#00fffd,#00fffd,#00fffd,#00fffd,#00fffd,#0ffffd,#2dfffd,#4dfffd,#6ffffd,#93fffd,#bafffd,#e4fffd,#ffeeec,#ffcac8,#ffaeac,#ff9795,#ff8483,#ff7473,#ff6665,#ff5a5a,#ff504f,#ff4746,#ff3f3f,#ff3837,#ff3231,#ff2c2b,#ff2726,#ff2222,#ff1e1d,#ff1a19,#ff1616,#ff1212,#ff0f0f,#ff0c0c,#ff0a09,#ff0707,#ff0504,#ff0202,#ff0000,#ff0000,#ff0000,#ff0000)"></i><i style="margin-left:25px;width:530px;background:linear-gradient(90deg,#00fdff,#00fdff,#00fdff,#00fdff,#00fdff,#00fdff,#00fdff,#00fdff,#00fcff,#00fcff,#00fcff,#00fcff,#00fcff,#00fcff,#00fcff,#00fbff,#13fbff,#31fbff,#51fbff,#74fbff,#98faff,#bffaff,#e9faff,#ffe5e9,#ffc2c7,#ffa7ab,#ff9195,#ff7f82,#ff6f72,#ff6265,#ff5759,#ff4d4f,#ff4446,#ff3c3f,#ff3538,#ff2f31,#ff292c,#ff2426,#ff2022,#ff1b1d,#ff1819,#ff1416,#ff1112,#ff0e0f,#ff0b0c,#ff080a,#ff0507,#ff0305,#ff0103,#ff0000,#ff0000,#ff0000,#ff0000)"></i><i style="margin-left:26px;width:532px;background:linear-gradient(90deg,#00f9ff,#00f9ff,#00f9ff,#00f9ff,#00f8ff,#00f8ff,#00f8ff,#00f8ff,#00f8ff,#00f7ff,#00f7ff,#00f7ff,#00f7ff,#00f6ff,#00f6ff,#00f6ff,#11f5ff,#2ef5ff,#4df5ff,#6ef4ff,#91f4ff,#b7f3ff,#dff3ff,#ffe8f4,#ffc5d0,#ffa9b3,#ff939c,#ff8088,#ff7178,#ff636a,#ff585e,#ff4e54,#ff454b,#ff3d43,#ff363b,#ff3035,#ff2a2f,#ff252a,#ff2025,#ff1c20,#ff181c,#ff1419,#ff1115,#ff0e12,#ff0b0f,#ff080c,#ff0609,#ff0307,#ff0105,#ff0002,#ff0000,#ff0000,#ff0000,#ff0000)"></i><i style="margin-left:26px;width:534px;background:linear-gradient(90deg,#00f5ff,#00f5ff,#00f5ff,#00f4ff,#00f4ff,#00f4ff,#00f3ff,#00f3ff,#00f3ff,#00f2ff,#00f2ff,#00f2ff,#00f1ff,#00f1ff,#00f0ff,#00f0ff,#14efff,#32efff,#51eeff,#71eeff,#95edff,#baecff,#e2ecff,#ffdef1,#ffbdce,#ffa2b2,#ff8d9b,#ff7b88,#ff6c78,#ff5f6a,#ff545e,#ff4a54,#ff424b,#ff3a43,#ff333c,#ff2d35,#ff282f,#ff232a,#ff1e25,#ff1a21,#ff161d,#ff1319,#ff0f15,#ff0c12,#ff090f,#ff070c,#ff040a,#ff0207,#ff0005,#ff0003,#ff0001,#ff0000,#ff0000,#ff0000)"></i><i style="margin-left:27px;width:536px;background:linear-gradient(90deg,#00f1ff,#00f1ff,#00f0ff,#00f0ff,#00f0ff,#00efff,#00efff,#00eeff,#00eeff,#00eeff,#00edff,#00edff,#00ecff,#00ebff,#00ebff,#00eaff,#1be9ff,#38e9ff,#57e8ff,#78e7ff,#9ce6ff,#c1e5ff,#eae4ff,#ffd1eb,#ffb2c9,#ff99ae,#ff8598,#ff7485,#ff6676,#ff5a69,#ff4f5d,#ff4653,#ff3e4a,#ff3642,#ff303b,#ff2a35,#ff252f,#ff202a,#ff1c25,#ff1820,#ff141c,#ff1019,#ff0d15,#ff0a12,#ff080f,#ff050c,#ff030a,#ff0007,#ff0005,#ff0003,#ff0001,#ff0000,#ff0000,#ff0000)"></i><i style="margin-left:27px;width:539px;background:linear-gradient(90deg,#00edff,#00edff,#00ecff,#00ecff,#00ebff,#00ebff,#00eaff,#00eaff,#00e9ff,#00e9ff,#00e8ff,#00e7ff,#00e7ff,#00e6ff,#00e5ff,#03e5ff,#1fe4ff,#3ce3ff,#5ce2ff,#7de1ff,#a0e0ff,#c6dfff,#eeddff,#ffc7e7,#ffaac6,#ff92ac,#ff7f96,#ff6f84,#ff6175,#ff5568,#ff4b5c,#ff4252,#ff3a49,#ff3342,#ff2d3b,#ff2734,#ff222f,#ff1d29,#ff1925,#ff1520,#ff121c,#ff0e19,#ff0b15,#ff0812,#ff060f,#ff030c,#ff010a,#ff0007,#ff0005,#ff0003,#ff0001,#ff0000,#ff0000,#ff0000)"></i><i style="margin-left:28px;width:540px;background:linear-gradient(90deg,#00e9ff,#00e9ff,#00e8ff,#00e8ff,#00e7ff,#00e6ff,#00e6ff,#00e5ff,#00e5ff,#00e4ff,#00e3ff,#00e2ff,#00e2ff,#00e1ff,#00e0ff,#08dfff,#24deff,#42ddff,#61dcff,#82dbff,#a6d9ff,#cbd8ff,#f4d7ff,#ffbde2,#ffa1c3,#ff8ba9,#ff7994,#ff6983,#ff5c74,#ff5167,#ff475c,#ff3f52,#ff3749,#ff3041,#ff2a3b,#ff2534,#ff202f,#ff1b29,#ff1725,#ff1320,#ff101c,#ff0d19,#ff0a15,#ff0712,#ff040f,#ff020d,#ff000a,#ff0008,#ff0005,#ff0003,#ff0001,#ff0000,#ff0000,#ff0000)"></i><i style="margin-left:28px;width:543px;background:linear-gradient(90deg,#00e5ff,#00e5ff,#00e4ff,#00e4ff,#00e3ff,#00e2ff,#00e2ff,#00e1ff,#00e0ff,#00dfff,#00dfff,#00deff,#00ddff,#00dcff,#00dbff,#05daff,#20d9ff,#3cd7ff,#5bd6ff,#7bd5ff,#9dd4ff,#c1d2ff,#e8d0ff,#ffc1ee,#ffa4cd,#ff8eb2,#ff7b9c,#ff6b8a,#ff5e7a,#ff526d,#ff4861,#ff4057,#ff384e,#ff3146,#ff2b3e,#ff2538,#ff2032,#ff1c2d,#ff1828,#ff1423,#ff101f,#ff0d1c,#ff0a18,#ff0715,#ff0512,#ff020f,#ff000c,#ff000a,#ff0007,#ff0005,#ff0003,#ff0001,#ff0000,#ff0000,#ff0000)"></i><i style="margin-left:29px;width:545px;background:linear-gradient(90deg,#00e1ff,#00e1ff,#00e0ff,#00dfff,#00dfff,#00deff,#00ddff,#00dcff,#00dcff,#00dbff,#00daff,#00d9ff,#00d8ff,#00d7ff,#00d6ff,#0bd4ff,#26d3ff,#43d2ff,#61d0ff,#81cfff,#a3cdff,#c8ccff,#efcaff,#ffb6e8,#ff9bc8,#ff86ae,#ff7499,#ff6587,#ff5878,#ff4d6b,#ff4460,#ff3c56,#ff344d,#ff2e45,#ff283e,#ff2237,#ff1e32,#ff192c,#ff1528,#ff1123,#ff0e1f,#ff0b1b,#ff0818,#ff0515,#ff0312,#ff000f,#ff000c,#ff000a,#ff0007,#ff0005,#ff0003,#ff0001,#ff0000,#ff0000,#ff0000)"></i><i style="margin-left:30px;width:546px;background:linear-gradient(90deg,#00deff,#00ddff,#00dcff,#00dbff,#00dbff,#00daff,#00d9ff,#00d8ff,#00d7ff,#00d6ff,#00d5ff,#00d4ff,#00d3ff,#00d2ff,#00d0ff,#10cfff,#2bceff,#48ccff,#66caff,#86c9ff,#a9c7ff,#cdc5ff,#f4c3ff,#fface4,#ff93c5,#ff7fac,#ff6e97,#ff6086,#ff5477,#ff496a,#ff405f,#ff3855,#ff314c,#ff2b45,#ff253e,#ff2037,#ff1b32,#ff172c,#ff1328,#ff1023,#ff0c1f,#ff091c,#ff0618,#ff0415,#ff0112,#ff000f,#ff000c,#ff000a,#ff0008,#ff0005,#ff0003,#ff0001,#ff0000,#ff0000,#ff0000)"></i><i style="margin-left:30px;width:549px;background:linear-gradient(90deg,#00daff,#00d9ff,#00d8ff,#00d7ff,#00d7ff,#00d6ff,#00d5ff,#00d4ff,#00d3ff,#00d2ff,#00d0ff,#00cfff,#00ceff,#00cdff,#00cbff,#14caff,#2fc8ff,#4cc7ff,#6ac5ff,#8bc3ff,#adc1ff,#d1bfff,#f8bdff,#ffa4e0,#ff8cc2,#ff78aa,#ff6896,#ff5b84,#ff4f76,#ff4569,#ff3c5e,#ff3555,#ff2e4c,#ff2844,#ff223d,#ff1d37,#ff1931,#ff152c,#ff1128,#ff0d23,#ff0a1f,#ff071b,#ff0518,#ff0215,#ff0012,#ff000f,#ff000c,#ff000a,#ff0008,#ff0005,#ff0003,#ff0001,#ff0000,#ff0000,#ff0000)"></i><i style="margin-left:31px;width:551px;background:linear-gradient(90deg,#00d6ff,#00d5ff,#00d4ff,#00d3ff,#00d3ff,#00d2ff,#00d1ff,#00cfff,#00ceff,#00cdff,#00ccff,#00cbff,#00c9ff,#00c8ff,#00c6ff,#12c5ff,#2dc3ff,#49c2ff,#66c0ff,#85beff,#a6bcff,#cab9ff,#efb7ff,#ffa5e9,#ff8dca,#ff79b1,#ff699c,#ff5b8a,#ff507b,#ff466e,#ff3d63,#ff3559,#ff2e50,#ff2848,#ff2341,#ff1e3b,#ff1935,#ff152f,#ff112b,#ff0e26,#ff0a22,#ff071e,#ff051b,#ff0217,#ff0014,#ff0011,#ff000f,#ff000c,#ff000a,#ff0007,#ff0005,#ff0003,#ff0001,#ff0000,#ff0000,#ff0000)"></i><i style="margin-left:31px;width:553px;background:linear-gradient(90deg,#00d2ff,#00d2ff,#00d1ff,#00d0ff,#00cfff,#00ceff,#00ccff,#00cbff,#00caff,#00c9ff,#00c7ff,#00c6ff,#00c5ff,#00c3ff,#00c2ff,#15c0ff,#30beff,#4cbcff,#69baff,#88b8ff,#a9b6ff,#cdb4ff,#f2b1ff,#ff9ee7,#ff87c8,#ff74b0,#ff649b,#ff578a,#ff4c7b,#ff426e,#ff3a63,#ff3259,#ff2b50,#ff2648,#ff2041,#ff1b3b,#ff1735,#ff1330,#ff0f2b,#ff0c26,#ff0922,#ff061e,#ff031b,#ff0117,#ff0014,#ff0012,#ff000f,#ff000c,#ff000a,#ff0008,#ff0006,#ff0004,#ff0002,#ff0000,#ff0000,#ff0000)"></i><i style="margin-left:32px;width:555px;background:linear-gradient(90deg,#00cfff,#00ceff,#00cdff,#00ccff,#00cbff,#00c9ff,#00c8ff,#00c7ff,#00c6ff,#00c4ff,#00c3ff,#00c1ff,#00c0ff,#00beff,#02bdff,#1bbbff,#36b9ff,#51b7ff,#6fb5ff,#8eb2ff,#b0b0ff,#d3adff,#f9abff,#ff94e1,#ff7fc4,#ff6dac,#ff5e98,#ff5288,#ff4779,#ff3e6c,#ff3661,#ff2f58,#ff284f,#ff2247,#ff1d40,#ff193a,#ff1434,#ff112f,#ff0d2a,#ff0a26,#ff0722,#ff041e,#ff011b,#ff0017,#ff0014,#ff0011,#ff000f,#ff000c,#ff000a,#ff0008,#ff0006,#ff0004,#ff0002,#ff0000,#ff0000,#ff0000)"></i><i style="margin-left:32px;width:557px;background:linear-gradient(90deg,#00cbff,#00caff,#00c9ff,#00c8ff,#00c7ff,#00c6ff,#00c4ff,#00c3ff,#00c2ff,#00c0ff,#00bfff,#00bdff,#00bbff,#00baff,#05b8ff,#1eb6ff,#38b4ff,#54b2ff,#72afff,#91adff,#b2aaff,#d6a8ff,#fba5ff,#ff8edf,#ff79c3,#ff68ab,#ff5a98,#ff4e87,#ff4479,#ff3b6c,#ff3361,#ff2c58,#ff264f,#ff2047,#ff1b41,#ff163a,#ff1235,#ff0f2f,#ff0b2b,#ff0826,#ff0522,#ff021e,#ff001b,#ff0018,#ff0015,#ff0012,#ff000f,#ff000d,#ff000a,#ff0008,#ff0006,#ff0004,#ff0002,#ff0000,#ff0000,#ff0000)"></i><i style="margin-left:33px;width:559px;background:linear-gradient(90deg,#00c8ff,#00c6ff,#00c5ff,#00c4ff,#00c3ff,#00c2ff,#00c0ff,#00bfff,#00bdff,#00bcff,#00baff,#00b8ff,#00b7ff,#00b5ff,#0ab3ff,#23b1ff,#3eafff,#5aacff,#78aaff,#97a7ff,#b9a5ff,#dca2ff,#ff9dfc,#ff85da,#ff72bf,#ff62a8,#ff5495,#ff4985,#ff3f77,#ff376b,#ff2f60,#ff2857,#ff224e,#ff1d47,#ff1840,#ff143a,#ff1034,#ff0c2f,#ff092a,#ff0626,#ff0322,#ff001e,#ff001b,#ff0017,#ff0014,#ff0012,#ff000f,#ff000d,#ff000a,#ff0008,#ff0006,#ff0004,#ff0002,#ff0000,#ff0000,#ff0000)"></i><i style="margin-left:34px;width:561px;background:linear-gradient(90deg,#00c4ff,#00c3ff,#00c2ff,#00c0ff,#00bfff,#00beff,#00bcff,#00bbff,#00b9ff,#00b8ff,#00b6ff,#00b4ff,#00b2ff,#00b1ff,#09afff,#22acff,#3caaff,#57a8ff,#74a5ff,#92a3ff,#b2a0ff,#d59dff,#f99aff,#ff86e2,#ff72c6,#ff62af,#ff559b,#ff498a,#ff3f7c,#ff376f,#ff2f65,#ff285b,#ff2352,#ff1d4a,#ff1843,#ff143d,#ff1037,#ff0c32,#ff092d,#ff0629,#ff0325,#ff0121,#ff001d,#ff001a,#ff0017,#ff0014,#ff0011,#ff000f,#ff000c,#ff000a,#ff0008,#ff0006,#ff0004,#ff0002,#ff0000,#ff0000,#ff0000)"></i><i style="margin-left:34px;width:563px;background:linear-gradient(90deg,#00c1ff,#00bfff,#00beff,#00bdff,#00bbff,#00baff,#00b8ff,#00b7ff,#00b5ff,#00b4ff,#00b2ff,#00b0ff,#00aeff,#00acff,#0caaff,#25a8ff,#3fa5ff,#5aa3ff,#77a0ff,#959eff,#b59bff,#d798ff,#fb94ff,#ff7fe0,#ff6dc5,#ff5dae,#ff509a,#ff458a,#ff3c7c,#ff346f,#ff2c64,#ff265b,#ff2052,#ff1b4a,#ff1643,#ff123d,#ff0e37,#ff0b32,#ff072d,#ff0429,#ff0225,#ff0021,#ff001d,#ff001a,#ff0017,#ff0014,#ff0011,#ff000f,#ff000c,#ff000a,#ff0008,#ff0006,#ff0004,#ff0002,#ff0000,#ff0000,#ff0000)"></i><i style="margin-left:35px;width:565px;background:linear-gradient(90deg,#00bdff,#00bcff,#00baff,#00b9ff,#00b8ff,#00b6ff,#00b4ff,#00b3ff,#00b1ff,#00afff,#00aeff,#00acff,#00aaff,#00a7ff,#11a5ff,#2aa3ff,#44a0ff,#5f9eff,#7c9bff,#9b98ff,#bb95ff,#dd92ff,#ff8dfd,#ff78dc,#ff66c1,#ff57ab,#ff4b98,#ff4188,#ff387a,#ff306e,#ff2963,#ff235a,#ff1d51,#ff184a,#ff1443,#ff0f3d,#ff0c37,#ff0832,#ff052d,#ff0229,#ff0025,#ff0021,#ff001d,#ff001a,#ff0017,#ff0014,#ff0011,#ff000f,#ff000c,#ff000a,#ff0008,#ff0006,#ff0004,#ff0002,#ff0001,#ff0000,#ff0000)"></i><i style="margin-left:35px;width:568px;background:linear-gradient(90deg,#00baff,#00b8ff,#00b7ff,#00b5ff,#00b4ff,#00b2ff,#00b1ff,#00afff,#00adff,#00abff,#00a9ff,#00a7ff,#00a5ff,#00a3ff,#15a1ff,#2d9eff,#479cff,#6399ff,#8096ff,#9e93ff,#bf90ff,#e18cff,#ff86f9,#ff71d9,#ff60bf,#ff52a9,#ff4796,#ff3d87,#ff3479,#ff2c6d,#ff2662,#ff2059,#ff1a51,#ff1549,#ff1143,#ff0d3c,#ff0a37,#ff0632,#ff032d,#ff0128,#ff0024,#ff0021,#ff001d,#ff001a,#ff0017,#ff0014,#ff0011,#ff000f,#ff000c,#ff000a,#ff0008,#ff0006,#ff0004,#ff0002,#ff0001,#ff0000,#ff0000)"></i><i style="margin-left:36px;width:568px;background:linear-gradient(90deg,#00b6ff,#00b5ff,#00b3ff,#00b2ff,#00b0ff,#00afff,#00adff,#00abff,#00a9ff,#00a7ff,#00a5ff,#00a3ff,#00a1ff,#019fff,#199cff,#319aff,#4b97ff,#6794ff,#8391ff,#a28eff,#c28bff,#e487ff,#ff7ff6,#ff6bd7,#ff5bbd,#ff4ea8,#ff4396,#ff3986,#ff3179,#ff296d,#ff2362,#ff1d59,#ff1851,#ff1349,#ff0f43,#ff0b3d,#ff0837,#ff0532,#ff022d,#ff0029,#ff0025,#ff0021,#ff001e,#ff001a,#ff0017,#ff0014,#ff0012,#ff000f,#ff000d,#ff000b,#ff0008,#ff0006,#ff0004,#ff0003,#ff0001,#ff0000,#ff0000)"></i><i style="margin-left:36px;width:567px;background:linear-gradient(90deg,#00b3ff,#00b1ff,#00b0ff,#00aeff,#00adff,#00abff,#00a9ff,#00a7ff,#00a6ff,#00a4ff,#00a1ff,#009fff,#009dff,#029bff,#1998ff,#3295ff,#4c93ff,#6790ff,#838dff,#a189ff,#c186ff,#e382ff,#ff7bf8,#ff68d8,#ff58bf,#ff4ba9,#ff4097,#ff3788,#ff2f7a,#ff276e,#ff2164,#ff1c5b,#ff1652,#ff124b,#ff0e44,#ff0a3e,#ff0738,#ff0433,#ff012e,#ff002a,#ff0026,#ff0022,#ff001e,#ff001b,#ff0018,#ff0015,#ff0013,#ff0010,#ff000e,#ff000b,#ff0009,#ff0007,#ff0005,#ff0003,#ff0002,#ff0000,#ff0000)"></i><i style="margin-left:37px;width:560px;background:linear-gradient(90deg,#00afff,#00aeff,#00acff,#00abff,#00a9ff,#00a7ff,#00a5ff,#00a4ff,#00a2ff,#009fff,#009dff,#009bff,#0099ff,#0896ff,#1f93ff,#3891ff,#528eff,#6d8bff,#8a88ff,#a884ff,#c881ff,#ea7dff,#ff72f1,#ff60d3,#ff52ba,#ff46a6,#ff3b94,#ff3285,#ff2a78,#ff246c,#ff1e62,#ff1859,#ff1351,#ff0f4a,#ff0b43,#ff083d,#ff0437,#ff0132,#ff002e,#ff0029,#ff0025,#ff0022,#ff001e,#ff001b,#ff0018,#ff0015,#ff0012,#ff0010,#ff000d,#ff000b,#ff0009,#ff0007,#ff0005,#ff0003,#ff0002,#ff0000)"></i><i style="margin-left:38px;width:554px;background:linear-gradient(90deg,#00acff,#00abff,#00a9ff,#00a7ff,#00a6ff,#00a4ff,#00a2ff,#00a0ff,#009eff,#009cff,#0099ff,#0097ff,#0095ff,#0892ff,#1f90ff,#378dff,#518aff,#6b87ff,#8883ff,#a580ff,#c47cff,#e679ff,#ff70f6,#ff5fd8,#ff50bf,#ff44aa,#ff3a98,#ff3189,#ff2a7b,#ff2370,#ff1d65,#ff185c,#ff1354,#ff0e4c,#ff0b45,#ff073f,#ff043a,#ff0135,#ff0030,#ff002b,#ff0027,#ff0023,#ff0020,#ff001d,#ff001a,#ff0017,#ff0014,#ff0011,#ff000f,#ff000d,#ff000a,#ff0008,#ff0006,#ff0005,#ff0003,#ff0001)"></i><i style="margin-left:38px;width:548px;background:linear-gradient(90deg,#00a9ff,#00a7ff,#00a6ff,#00a4ff,#00a2ff,#00a0ff,#009eff,#009cff,#009aff,#0098ff,#0096ff,#0093ff,#0091ff,#0c8eff,#238bff,#3b88ff,#5585ff,#7082ff,#8c7fff,#aa7bff,#c977ff,#eb73ff,#ff69f1,#ff58d4,#ff4bbb,#ff3fa7,#ff3696,#ff2d87,#ff267a,#ff1f6e,#ff1a64,#ff155b,#ff1053,#ff0c4b,#ff0845,#ff053f,#ff0239,#ff0034,#ff002f,#ff002b,#ff0027,#ff0023,#ff0020,#ff001c,#ff0019,#ff0016,#ff0014,#ff0011,#ff000f,#ff000c,#ff000a,#ff0008,#ff0006,#ff0004,#ff0003)"></i><i style="margin-left:39px;width:541px;background:linear-gradient(90deg,#00a6ff,#00a4ff,#00a2ff,#00a0ff,#009fff,#009dff,#009bff,#0099ff,#0096ff,#0094ff,#0092ff,#008fff,#008dff,#0c8aff,#2387ff,#3a85ff,#5381ff,#6d7eff,#897bff,#a677ff,#c473ff,#e56fff,#ff68f7,#ff58d9,#ff4ac1,#ff3fac,#ff359a,#ff2d8b,#ff257e,#ff1f72,#ff1968,#ff145e,#ff1056,#ff0b4e,#ff0848,#ff0441,#ff013c,#ff0037,#ff0032,#ff002d,#ff0029,#ff0025,#ff0022,#ff001e,#ff001b,#ff0018,#ff0016,#ff0013,#ff0011,#ff000e,#ff000c,#ff000a,#ff0008,#ff0006,#ff0004)"></i><i style="margin-left:40px;width:535px;background:linear-gradient(90deg,#00a2ff,#00a1ff,#009fff,#009dff,#009bff,#0099ff,#0097ff,#0095ff,#0093ff,#0090ff,#008eff,#008bff,#0089ff,#1286ff,#2983ff,#4180ff,#5a7dff,#7479ff,#9076ff,#ad72ff,#cc6eff,#ed6aff,#ff5fef,#ff50d3,#ff44bb,#ff39a7,#ff3096,#ff2888,#ff217b,#ff1b6f,#ff1665,#ff115c,#ff0c54,#ff094d,#ff0546,#ff0240,#ff003b,#ff0035,#ff0031,#ff002c,#ff0028,#ff0025,#ff0021,#ff001e,#ff001b,#ff0018,#ff0015,#ff0012,#ff0010,#ff000e,#ff000c,#ff000a,#ff0008,#ff0006)"></i><i style="margin-left:40px;width:529px;background:linear-gradient(90deg,#009fff,#009dff,#009cff,#009aff,#0098ff,#0096ff,#0094ff,#0091ff,#008fff,#008dff,#008aff,#0087ff,#0085ff,#1682ff,#2d7fff,#457cff,#5e78ff,#7975ff,#9571ff,#b26dff,#d169ff,#f265ff,#ff59eb,#ff4acf,#ff3eb8,#ff34a5,#ff2c94,#ff2486,#ff1d79,#ff186e,#ff1364,#ff0e5b,#ff0a53,#ff064c,#ff0345,#ff003f,#ff003a,#ff0035,#ff0030,#ff002c,#ff0028,#ff0024,#ff0021,#ff001d,#ff001a,#ff0017,#ff0015,#ff0012,#ff0010,#ff000d,#ff000b,#ff0009,#ff0007)"></i><i style="margin-left:41px;width:522px;background:linear-gradient(90deg,#009cff,#009aff,#0098ff,#0096ff,#0094ff,#0092ff,#0090ff,#008eff,#008cff,#0089ff,#0087ff,#0084ff,#0081ff,#157eff,#2c7bff,#4378ff,#5c75ff,#7671ff,#916eff,#ae6aff,#cc66ff,#ec61ff,#ff58f1,#ff4ad5,#ff3ebe,#ff34aa,#ff2b99,#ff248a,#ff1d7d,#ff1772,#ff1268,#ff0e5e,#ff0956,#ff064f,#ff0248,#ff0042,#ff003d,#ff0037,#ff0033,#ff002e,#ff002a,#ff0026,#ff0023,#ff001f,#ff001c,#ff0019,#ff0017,#ff0014,#ff0012,#ff000f,#ff000d,#ff000b,#ff0009)"></i><i style="margin-left:42px;width:516px;background:linear-gradient(90deg,#0099ff,#0097ff,#0095ff,#0093ff,#0091ff,#008fff,#008dff,#008aff,#0088ff,#0085ff,#0083ff,#0080ff,#057dff,#1b7aff,#3277ff,#4a74ff,#6370ff,#7d6cff,#9969ff,#b665ff,#d460ff,#f45cff,#ff50e9,#ff43cf,#ff38b8,#ff2ea5,#ff2695,#ff1f87,#ff197a,#ff136f,#ff0f65,#ff0a5c,#ff0654,#ff034d,#ff0047,#ff0041,#ff003b,#ff0036,#ff0032,#ff002d,#ff0029,#ff0025,#ff0022,#ff001f,#ff001c,#ff0019,#ff0016,#ff0013,#ff0011,#ff000f,#ff000d,#ff000b)"></i><i style="margin-left:42px;width:510px;background:linear-gradient(90deg,#0096ff,#0094ff,#0092ff,#0090ff,#008eff,#008bff,#0089ff,#0087ff,#0084ff,#0082ff,#007fff,#007cff,#0979ff,#1f76ff,#3673ff,#4e6fff,#676cff,#8168ff,#9d64ff,#ba60ff,#d95cff,#fa57ff,#ff4ae5,#ff3dcb,#ff33b5,#ff2aa2,#ff2292,#ff1b84,#ff1678,#ff106d,#ff0c64,#ff085b,#ff0453,#ff004c,#ff0046,#ff0040,#ff003b,#ff0036,#ff0031,#ff002d,#ff0029,#ff0025,#ff0022,#ff001e,#ff001b,#ff0018,#ff0016,#ff0013,#ff0011,#ff000e,#ff000c)"></i><i style="margin-left:43px;width:503px;background:linear-gradient(90deg,#0093ff,#0091ff,#008fff,#008dff,#008aff,#0088ff,#0086ff,#0083ff,#0081ff,#007eff,#007cff,#0079ff,#0976ff,#1e73ff,#356fff,#4c6cff,#6568ff,#7e65ff,#9961ff,#b65dff,#d458ff,#f354ff,#ff49eb,#ff3cd1,#ff32ba,#ff29a7,#ff2297,#ff1b89,#ff157c,#ff1071,#ff0b68,#ff075f,#ff0357,#ff004f,#ff0049,#ff0043,#ff003d,#ff0038,#ff0034,#ff002f,#ff002b,#ff0027,#ff0024,#ff0020,#ff001d,#ff001a,#ff0018,#ff0015,#ff0013,#ff0010,#ff000e)"></i><i style="margin-left:44px;width:497px;background:linear-gradient(90deg,#0090ff,#008eff,#008bff,#0089ff,#0087ff,#0085ff,#0082ff,#0080ff,#007dff,#007bff,#0078ff,#0075ff,#0f72ff,#246eff,#3b6bff,#5368ff,#6b64ff,#8560ff,#a15cff,#bd58ff,#dc53ff,#fc4eff,#ff42e4,#ff36cb,#ff2cb5,#ff24a3,#ff1d93,#ff1786,#ff1179,#ff0c6f,#ff0865,#ff045d,#ff0155,#ff004e,#ff0047,#ff0041,#ff003c,#ff0037,#ff0032,#ff002e,#ff002a,#ff0026,#ff0023,#ff0020,#ff001d,#ff001a,#ff0017,#ff0014,#ff0012,#ff0010)"></i><i style="margin-left:44px;width:491px;background:linear-gradient(90deg,#008dff,#008bff,#0089ff,#0086ff,#0084ff,#0082ff,#007fff,#007dff,#007aff,#0078ff,#0075ff,#0072ff,#0d6fff,#226bff,#3868ff,#4f65ff,#6761ff,#815dff,#9b59ff,#b755ff,#d450ff,#f34cff,#ff41ec,#ff36d2,#ff2cbc,#ff24a9,#ff1d99,#ff168b,#ff117e,#ff0c73,#ff0869,#ff0460,#ff0058,#ff0051,#ff004b,#ff0045,#ff003f,#ff003a,#ff0035,#ff0031,#ff002d,#ff0029,#ff0025,#ff0022,#ff001f,#ff001c,#ff0019,#ff0016,#ff0014,#ff0012)"></i><i style="margin-left:45px;width:484px;background:linear-gradient(90deg,#008aff,#0087ff,#0085ff,#0083ff,#0081ff,#007eff,#007cff,#0079ff,#0077ff,#0074ff,#0071ff,#006eff,#126bff,#2767ff,#3d64ff,#5560ff,#6d5dff,#8759ff,#a154ff,#bd50ff,#db4cff,#fa47ff,#ff3be6,#ff30cd,#ff27b7,#ff1fa5,#ff1996,#ff1388,#ff0e7c,#ff0971,#ff0567,#ff015f,#ff0057,#ff0050,#ff0049,#ff0043,#ff003e,#ff0039,#ff0034,#ff0030,#ff002c,#ff0028,#ff0025,#ff0021,#ff001e,#ff001b,#ff0019,#ff0016,#ff0014)"></i><i style="margin-left:46px;width:478px;background:linear-gradient(90deg,#0087ff,#0084ff,#0082ff,#0080ff,#007dff,#007bff,#0078ff,#0076ff,#0073ff,#0070ff,#006dff,#036aff,#1767ff,#2d63ff,#4460ff,#5b5cff,#7458ff,#8e54ff,#a950ff,#c54bff,#e346ff,#ff41fb,#ff35df,#ff2bc7,#ff22b2,#ff1ba1,#ff1492,#ff0f85,#ff0a79,#ff066e,#ff0265,#ff005d,#ff0055,#ff004e,#ff0048,#ff0042,#ff003d,#ff0038,#ff0033,#ff002f,#ff002b,#ff0027,#ff0024,#ff0021,#ff001e,#ff001b,#ff0018,#ff0015)"></i><i style="margin-left:46px;width:472px;background:linear-gradient(90deg,#0084ff,#0082ff,#007fff,#007dff,#007bff,#0078ff,#0076ff,#0073ff,#0070ff,#006dff,#006aff,#0267ff,#1664ff,#2b61ff,#415dff,#5759ff,#6f55ff,#8851ff,#a34dff,#be49ff,#db44ff,#fa3fff,#ff34e7,#ff2ace,#ff22b9,#ff1aa7,#ff1497,#ff0f8a,#ff0a7e,#ff0573,#ff0169,#ff0061,#ff0059,#ff0052,#ff004b,#ff0045,#ff0040,#ff003b,#ff0036,#ff0032,#ff002e,#ff002a,#ff0026,#ff0023,#ff0020,#ff001d,#ff001a,#ff0017)"></i><i style="margin-left:47px;width:465px;background:linear-gradient(90deg,#0081ff,#007fff,#007cff,#007aff,#0077ff,#0075ff,#0072ff,#0070ff,#006dff,#006aff,#0067ff,#0663ff,#1b60ff,#305dff,#4659ff,#5d55ff,#7551ff,#8e4dff,#a949ff,#c544ff,#e23fff,#ff3afd,#ff2ee1,#ff25c9,#ff1db5,#ff16a3,#ff1094,#ff0b87,#ff077b,#ff0271,#ff0067,#ff005f,#ff0057,#ff0050,#ff004a,#ff0044,#ff003f,#ff003a,#ff0035,#ff0031,#ff002d,#ff0029,#ff0026,#ff0022,#ff001f,#ff001c,#ff001a)"></i><i style="margin-left:48px;width:459px;background:linear-gradient(90deg,#007eff,#007bff,#0079ff,#0077ff,#0074ff,#0072ff,#006fff,#006cff,#0069ff,#0066ff,#0063ff,#0c60ff,#205cff,#3659ff,#4c55ff,#6351ff,#7c4dff,#9648ff,#b044ff,#cd3fff,#ea3aff,#ff33f5,#ff28da,#ff20c3,#ff18b0,#ff129f,#ff0c90,#ff0883,#ff0378,#ff006e,#ff0065,#ff005d,#ff0055,#ff004e,#ff0048,#ff0042,#ff003d,#ff0038,#ff0034,#ff0030,#ff002c,#ff0028,#ff0025,#ff0021,#ff001e,#ff001c)"></i><i style="margin-left:49px;width:452px;background:linear-gradient(90deg,#007bff,#0079ff,#0076ff,#0074ff,#0071ff,#006fff,#006cff,#0069ff,#0066ff,#0063ff,#0060ff,#0c5dff,#2059ff,#3556ff,#4a52ff,#614eff,#794aff,#9246ff,#ac41ff,#c73dff,#e438ff,#ff32fc,#ff28e0,#ff1fc9,#ff18b5,#ff11a4,#ff0c95,#ff0788,#ff037c,#ff0072,#ff0069,#ff0060,#ff0059,#ff0052,#ff004b,#ff0046,#ff0040,#ff003b,#ff0037,#ff0032,#ff002e,#ff002b,#ff0027,#ff0024,#ff0021,#ff001e)"></i><i style="margin-left:49px;width:446px;background:linear-gradient(90deg,#0078ff,#0076ff,#0073ff,#0071ff,#006eff,#006cff,#0069ff,#0066ff,#0063ff,#0060ff,#005dff,#0f59ff,#2356ff,#3852ff,#4e4eff,#654aff,#7d46ff,#9642ff,#b13dff,#cc38ff,#e933ff,#ff2cf7,#ff23dc,#ff1bc5,#ff14b2,#ff0ea1,#ff0993,#ff0486,#ff007a,#ff0070,#ff0067,#ff005f,#ff0057,#ff0051,#ff004a,#ff0045,#ff003f,#ff003a,#ff0036,#ff0032,#ff002e,#ff002a,#ff0026,#ff0023,#ff0020)"></i><i style="margin-left:50px;width:440px;background:linear-gradient(90deg,#0075ff,#0073ff,#0070ff,#006eff,#006bff,#0069ff,#0066ff,#0063ff,#0060ff,#005dff,#005aff,#0f56ff,#2353ff,#384fff,#4d4bff,#6347ff,#7b43ff,#933fff,#ad3aff,#c836ff,#e431ff,#ff2bfc,#ff22e1,#ff1aca,#ff13b7,#ff0da6,#ff0897,#ff038a,#ff007e,#ff0074,#ff006b,#ff0062,#ff005b,#ff0054,#ff004d,#ff0047,#ff0042,#ff003d,#ff0038,#ff0034,#ff0030,#ff002c,#ff0029,#ff0025,#ff0022)"></i><i style="margin-left:51px;width:433px;background:linear-gradient(90deg,#0072ff,#0070ff,#006dff,#006bff,#0068ff,#0066ff,#0063ff,#0060ff,#005dff,#0059ff,#0156ff,#1453ff,#284fff,#3d4bff,#5248ff,#6943ff,#813fff,#993bff,#b336ff,#ce31ff,#eb2cff,#ff25f6,#ff1ddc,#ff15c6,#ff0fb3,#ff09a2,#ff0494,#ff0087,#ff007c,#ff0072,#ff0069,#ff0060,#ff0059,#ff0052,#ff004c,#ff0046,#ff0041,#ff003c,#ff0037,#ff0033,#ff002f,#ff002b,#ff0028,#ff0025)"></i><i style="margin-left:52px;width:426px;background:linear-gradient(90deg,#006fff,#006dff,#006bff,#0068ff,#0065ff,#0062ff,#005fff,#005cff,#0059ff,#0056ff,#0553ff,#194fff,#2d4bff,#4248ff,#5844ff,#6f3fff,#863bff,#9f37ff,#ba32ff,#d52dff,#f227ff,#ff20ef,#ff18d6,#ff11c1,#ff0baf,#ff059f,#ff0191,#ff0084,#ff0079,#ff0070,#ff0067,#ff005f,#ff0057,#ff0051,#ff004b,#ff0045,#ff0040,#ff003b,#ff0036,#ff0032,#ff002e,#ff002b,#ff0027)"></i><i style="margin-left:52px;width:421px;background:linear-gradient(90deg,#006dff,#006aff,#0068ff,#0065ff,#0063ff,#0060ff,#005dff,#005aff,#0057ff,#0053ff,#0450ff,#174dff,#2b49ff,#4045ff,#5541ff,#6b3dff,#8239ff,#9b34ff,#b430ff,#cf2bff,#eb25ff,#ff1ff6,#ff17dd,#ff10c7,#ff0ab4,#ff05a4,#ff0096,#ff0089,#ff007e,#ff0074,#ff006a,#ff0062,#ff005b,#ff0054,#ff004e,#ff0048,#ff0043,#ff003e,#ff0039,#ff0035,#ff0031,#ff002d,#ff0029)"></i><i style="margin-left:53px;width:414px;background:linear-gradient(90deg,#006aff,#0068ff,#0065ff,#0062ff,#0060ff,#005dff,#005aff,#0057ff,#0053ff,#0050ff,#094dff,#1c49ff,#3045ff,#4541ff,#5a3dff,#7139ff,#8835ff,#a130ff,#ba2bff,#d526ff,#f121ff,#ff1af0,#ff12d7,#ff0cc2,#ff06b0,#ff01a0,#ff0092,#ff0086,#ff007b,#ff0071,#ff0068,#ff0060,#ff0059,#ff0052,#ff004c,#ff0047,#ff0041,#ff003c,#ff0038,#ff0034,#ff0030,#ff002c)"></i><i style="margin-left:54px;width:407px;background:linear-gradient(90deg,#0067ff,#0065ff,#0062ff,#005fff,#005dff,#005aff,#0057ff,#0053ff,#0050ff,#004dff,#0e49ff,#2145ff,#3542ff,#4a3eff,#603aff,#7635ff,#8e31ff,#a72cff,#c127ff,#dc22ff,#f81cff,#ff15ea,#ff0ed2,#ff08be,#ff02ac,#ff009d,#ff008f,#ff0083,#ff0079,#ff006f,#ff0066,#ff005f,#ff0057,#ff0051,#ff004b,#ff0045,#ff0040,#ff003b,#ff0037,#ff0033,#ff002f)"></i><i style="margin-left:55px;width:401px;background:linear-gradient(90deg,#0065ff,#0062ff,#005fff,#005dff,#005aff,#0057ff,#0054ff,#0051ff,#004dff,#004aff,#0e47ff,#2143ff,#343fff,#493bff,#5e37ff,#7433ff,#8b2eff,#a32aff,#bd25ff,#d720ff,#f31aff,#ff13f0,#ff0dd7,#ff07c3,#ff01b1,#ff00a1,#ff0094,#ff0088,#ff007d,#ff0073,#ff006a,#ff0062,#ff005b,#ff0054,#ff004e,#ff0048,#ff0043,#ff003e,#ff003a,#ff0035,#ff0031)"></i><i style="margin-left:56px;width:394px;background:linear-gradient(90deg,#0062ff,#005fff,#005cff,#005aff,#0057ff,#0054ff,#0051ff,#004dff,#004aff,#0047ff,#1243ff,#253fff,#393cff,#4e37ff,#6333ff,#7a2fff,#912aff,#a926ff,#c321ff,#dd1bff,#f916ff,#ff0fe9,#ff08d2,#ff03be,#ff00ad,#ff009e,#ff0091,#ff0085,#ff007a,#ff0071,#ff0068,#ff0060,#ff0059,#ff0052,#ff004c,#ff0047,#ff0042,#ff003d,#ff0038,#ff0034)"></i><i style="margin-left:56px;width:388px;background:linear-gradient(90deg,#005fff,#005dff,#005aff,#0057ff,#0054ff,#0051ff,#004eff,#004bff,#0047ff,#0344ff,#1640ff,#293cff,#3d38ff,#5234ff,#6730ff,#7e2bff,#9527ff,#ae22ff,#c81dff,#e317ff,#ff12ff,#ff0ae4,#ff04ce,#ff00ba,#ff00aa,#ff009b,#ff008e,#ff0082,#ff0078,#ff006f,#ff0066,#ff005e,#ff0057,#ff0051,#ff004b,#ff0046,#ff0041,#ff003c,#ff0037)"></i><i style="margin-left:57px;width:382px;background:linear-gradient(90deg,#005dff,#005aff,#0057ff,#0054ff,#0051ff,#004eff,#004bff,#0048ff,#0045ff,#0441ff,#163dff,#283aff,#3c36ff,#5032ff,#652dff,#7b29ff,#9224ff,#aa20ff,#c31bff,#dd15ff,#f910ff,#ff09ea,#ff03d3,#ff00c0,#ff00af,#ff00a0,#ff0092,#ff0087,#ff007c,#ff0072,#ff006a,#ff0062,#ff005b,#ff0054,#ff004e,#ff0049,#ff0043,#ff003f,#ff003a)"></i><i style="margin-left:58px;width:375px;background:linear-gradient(90deg,#005aff,#0057ff,#0054ff,#0052ff,#004fff,#004bff,#0048ff,#0045ff,#0041ff,#083eff,#1a3aff,#2d36ff,#4132ff,#552eff,#6b2aff,#8125ff,#9820ff,#b01cff,#ca16ff,#e411ff,#ff0bfe,#ff05e4,#ff00ce,#ff00bb,#ff00ab,#ff009c,#ff008f,#ff0084,#ff0079,#ff0070,#ff0068,#ff0060,#ff0059,#ff0053,#ff004d,#ff0047,#ff0042,#ff003d)"></i><i style="margin-left:59px;width:368px;background:linear-gradient(90deg,#0057ff,#0055ff,#0052ff,#004fff,#004cff,#0048ff,#0045ff,#0042ff,#003eff,#0c3bff,#1f37ff,#3233ff,#462fff,#5b2aff,#7026ff,#8721ff,#9e1cff,#b717ff,#d012ff,#eb0dff,#ff07f7,#ff01de,#ff00c9,#ff00b7,#ff00a7,#ff0099,#ff008c,#ff0081,#ff0077,#ff006e,#ff0066,#ff005e,#ff0057,#ff0051,#ff004b,#ff0046,#ff0041)"></i><i style="margin-left:60px;width:362px;background:linear-gradient(90deg,#0055ff,#0052ff,#004fff,#004cff,#0049ff,#0046ff,#0043ff,#003fff,#003cff,#0d38ff,#1f34ff,#3130ff,#452cff,#5928ff,#6e24ff,#841fff,#9b1bff,#b216ff,#cb10ff,#e50bff,#ff05fe,#ff00e4,#ff00cf,#ff00bc,#ff00ac,#ff009d,#ff0091,#ff0085,#ff007b,#ff0072,#ff0069,#ff0062,#ff005b,#ff0054,#ff004e,#ff0049,#ff0044)"></i><i style="margin-left:61px;width:355px;background:linear-gradient(90deg,#0052ff,#004fff,#004cff,#0049ff,#0046ff,#0043ff,#0040ff,#003cff,#0039ff,#1135ff,#2331ff,#362dff,#4a29ff,#5e25ff,#7320ff,#891bff,#a117ff,#b912ff,#d20cff,#ec07ff,#ff01f7,#ff00de,#ff00ca,#ff00b8,#ff00a8,#ff009a,#ff008d,#ff0082,#ff0078,#ff006f,#ff0067,#ff0060,#ff0059,#ff0053,#ff004d,#ff0047)"></i><i style="margin-left:62px;width:348px;background:linear-gradient(90deg,#004fff,#004dff,#004aff,#0046ff,#0043ff,#0040ff,#003dff,#0039ff,#0435ff,#1532ff,#282eff,#3b2aff,#4f25ff,#6321ff,#791cff,#8f18ff,#a713ff,#bf0dff,#d908ff,#f302ff,#ff00f0,#ff00d9,#ff00c4,#ff00b3,#ff00a4,#ff0096,#ff008a,#ff0080,#ff0076,#ff006d,#ff0065,#ff005e,#ff0057,#ff0051,#ff004b)"></i><i style="margin-left:63px;width:342px;background:linear-gradient(90deg,#004dff,#004aff,#0047ff,#0044ff,#0041ff,#003eff,#003aff,#0037ff,#0433ff,#152fff,#272cff,#3a28ff,#4d23ff,#611fff,#761aff,#8c16ff,#a311ff,#ba0cff,#d307ff,#ed01ff,#ff00f7,#ff00df,#ff00ca,#ff00b9,#ff00a9,#ff009b,#ff008f,#ff0084,#ff007a,#ff0071,#ff0069,#ff0062,#ff005b,#ff0054,#ff004f)"></i><i style="margin-left:64px;width:335px;background:linear-gradient(90deg,#004aff,#0047ff,#0044ff,#0041ff,#003eff,#003bff,#0037ff,#0034ff,#0830ff,#1a2cff,#2c28ff,#3f24ff,#5220ff,#671bff,#7c17ff,#9212ff,#a90dff,#c108ff,#da02ff,#f400ff,#ff00f0,#ff00d9,#ff00c5,#ff00b4,#ff00a5,#ff0098,#ff008c,#ff0081,#ff0078,#ff006f,#ff0067,#ff0060,#ff0059,#ff0053)"></i><i style="margin-left:65px;width:328px;background:linear-gradient(90deg,#0048ff,#0045ff,#0042ff,#003eff,#003bff,#0038ff,#0034ff,#0031ff,#0c2dff,#1e29ff,#3025ff,#4421ff,#571cff,#6c18ff,#8113ff,#980eff,#af09ff,#c704ff,#e100ff,#fb00ff,#ff00e9,#ff00d3,#ff00c0,#ff00b0,#ff00a1,#ff0094,#ff0089,#ff007e,#ff0075,#ff006c,#ff0065,#ff005d,#ff0057)"></i><i style="margin-left:66px;width:322px;background:linear-gradient(90deg,#0045ff,#0042ff,#003fff,#003cff,#0039ff,#0035ff,#0032ff,#002eff,#0d2bff,#1e27ff,#3023ff,#421fff,#561aff,#6a16ff,#7f11ff,#940dff,#ab08ff,#c202ff,#db00ff,#f400ff,#ff00f0,#ff00da,#ff00c6,#ff00b5,#ff00a7,#ff0099,#ff008e,#ff0083,#ff0079,#ff0071,#ff0069,#ff0061,#ff005b)"></i><i style="margin-left:67px;width:315px;background:linear-gradient(90deg,#0043ff,#0040ff,#003dff,#0039ff,#0036ff,#0033ff,#002fff,#002bff,#1128ff,#2224ff,#3420ff,#471bff,#5b17ff,#6f13ff,#840eff,#9a09ff,#b104ff,#c900ff,#e100ff,#fb00ff,#ff00ea,#ff00d4,#ff00c1,#ff00b1,#ff00a3,#ff0096,#ff008a,#ff0080,#ff0077,#ff006e,#ff0066,#ff005f)"></i><i style="margin-left:67px;width:309px;background:linear-gradient(90deg,#0040ff,#003dff,#003aff,#0037ff,#0034ff,#0031ff,#002dff,#002aff,#0f26ff,#2022ff,#321eff,#441aff,#5716ff,#6b11ff,#7f0dff,#9408ff,#aa03ff,#c100ff,#d900ff,#f200ff,#ff00f3,#ff00dd,#ff00c9,#ff00b8,#ff00aa,#ff009c,#ff0090,#ff0086,#ff007c,#ff0073,#ff006b,#ff0064)"></i><i style="margin-left:68px;width:303px;background:linear-gradient(90deg,#003eff,#003bff,#0038ff,#0035ff,#0031ff,#002eff,#002aff,#0327ff,#1423ff,#251fff,#371bff,#4916ff,#5d12ff,#710eff,#8509ff,#9b04ff,#b100ff,#c900ff,#e100ff,#fa00ff,#ff00eb,#ff00d6,#ff00c3,#ff00b3,#ff00a4,#ff0098,#ff008c,#ff0082,#ff0079,#ff0070,#ff0068)"></i><i style="margin-left:69px;width:296px;background:linear-gradient(90deg,#003cff,#0038ff,#0035ff,#0032ff,#002fff,#002bff,#0027ff,#0724ff,#1820ff,#2a1cff,#3c18ff,#4e13ff,#620fff,#760aff,#8b05ff,#a100ff,#b800ff,#cf00ff,#e800ff,#ff00fc,#ff00e4,#ff00d0,#ff00be,#ff00ae,#ff00a0,#ff0094,#ff0089,#ff007f,#ff0076,#ff006d)"></i><i style="margin-left:70px;width:289px;background:linear-gradient(90deg,#0039ff,#0036ff,#0033ff,#0030ff,#002cff,#0029ff,#0025ff,#0722ff,#181eff,#281aff,#3a16ff,#4c12ff,#5f0dff,#7209ff,#8704ff,#9c00ff,#b100ff,#c800ff,#e000ff,#f800ff,#ff00ed,#ff00d8,#ff00c6,#ff00b6,#ff00a7,#ff009b,#ff008f,#ff0085,#ff007b,#ff0073)"></i><i style="margin-left:71px;width:283px;background:linear-gradient(90deg,#0037ff,#0034ff,#0030ff,#002dff,#002aff,#0026ff,#0022ff,#0c1fff,#1c1bff,#2d17ff,#3f13ff,#520eff,#650aff,#7905ff,#8d00ff,#a300ff,#b900ff,#d000ff,#e800ff,#ff00fd,#ff00e5,#ff00d1,#ff00bf,#ff00b0,#ff00a2,#ff0096,#ff008b,#ff0081,#ff0078)"></i><i style="margin-left:72px;width:276px;background:linear-gradient(90deg,#0034ff,#0031ff,#002eff,#002aff,#0027ff,#0023ff,#0020ff,#101cff,#2018ff,#3214ff,#440fff,#570bff,#6a06ff,#7e02ff,#9300ff,#a900ff,#bf00ff,#d700ff,#f000ff,#ff00f5,#ff00df,#ff00cb,#ff00ba,#ff00ab,#ff009e,#ff0092,#ff0087,#ff007e)"></i><i style="margin-left:73px;width:269px;background:linear-gradient(90deg,#0032ff,#002fff,#002cff,#0028ff,#0025ff,#0021ff,#001eff,#0f1aff,#2016ff,#3012ff,#420eff,#5409ff,#6705ff,#7a00ff,#8e00ff,#a300ff,#b900ff,#cf00ff,#e600ff,#ff00ff,#ff00e8,#ff00d4,#ff00c2,#ff00b3,#ff00a5,#ff0099,#ff008e,#ff0084)"></i><i style="margin-left:74px;width:263px;background:linear-gradient(90deg,#002fff,#002cff,#0029ff,#0026ff,#0022ff,#001eff,#041bff,#1417ff,#2413ff,#350fff,#470aff,#5a06ff,#6d01ff,#8000ff,#9500ff,#aa00ff,#c000ff,#d700ff,#ef00ff,#ff00f6,#ff00e0,#ff00cd,#ff00bc,#ff00ad,#ff00a0,#ff0094,#ff0089)"></i><i style="margin-left:75px;width:256px;background:linear-gradient(90deg,#002dff,#002aff,#0027ff,#0023ff,#001fff,#001cff,#0818ff,#1814ff,#2910ff,#3a0cff,#4c07ff,#5f03ff,#7200ff,#8600ff,#9b00ff,#b100ff,#c700ff,#df00ff,#f700ff,#ff00ef,#ff00d9,#ff00c7,#ff00b7,#ff00a8,#ff009c,#ff0090)"></i><i style="margin-left:76px;width:249px;background:linear-gradient(90deg,#002bff,#0028ff,#0024ff,#0021ff,#001dff,#001aff,#0816ff,#1712ff,#270eff,#380aff,#4a06ff,#5b02ff,#6e00ff,#8100ff,#9500ff,#aa00ff,#bf00ff,#d600ff,#ed00ff,#ff00f9,#ff00e3,#ff00d0,#ff00bf,#ff00b0,#ff00a3,#ff0097)"></i><i style="margin-left:78px;width:242px;background:linear-gradient(90deg,#0028ff,#0025ff,#0022ff,#001eff,#001aff,#0017ff,#0d13ff,#1d0fff,#2d0bff,#3e07ff,#5002ff,#6200ff,#7500ff,#8900ff,#9d00ff,#b200ff,#c800ff,#df00ff,#f700ff,#ff00ef,#ff00db,#ff00c9,#ff00b9,#ff00aa,#ff009e)"></i><i style="margin-left:79px;width:235px;background:linear-gradient(90deg,#0026ff,#0022ff,#001fff,#001cff,#0018ff,#0114ff,#1110ff,#210cff,#3208ff,#4304ff,#5500ff,#6800ff,#7b00ff,#8f00ff,#a300ff,#b900ff,#cf00ff,#e700ff,#ff00ff,#ff00e8,#ff00d4,#ff00c3,#ff00b3,#ff00a6)"></i><i style="margin-left:80px;width:228px;background:linear-gradient(90deg,#0024ff,#0020ff,#001dff,#0019ff,#0016ff,#0112ff,#100eff,#200bff,#3006ff,#4102ff,#5200ff,#6400ff,#7600ff,#8900ff,#9d00ff,#b200ff,#c700ff,#dd00ff,#f400ff,#ff00f3,#ff00de,#ff00cc,#ff00bc,#ff00ae)"></i><i style="margin-left:81px;width:222px;background:linear-gradient(90deg,#0021ff,#001eff,#001aff,#0017ff,#0013ff,#050fff,#150cff,#2508ff,#3503ff,#4600ff,#5800ff,#6a00ff,#7d00ff,#9000ff,#a500ff,#ba00ff,#cf00ff,#e600ff,#fe00ff,#ff00ea,#ff00d6,#ff00c5,#ff00b6)"></i><i style="margin-left:82px;width:215px;background:linear-gradient(90deg,#001fff,#001cff,#0018ff,#0014ff,#0011ff,#090dff,#1909ff,#2905ff,#3a00ff,#4b00ff,#5d00ff,#6f00ff,#8200ff,#9600ff,#ab00ff,#c000ff,#d700ff,#ee00ff,#ff00f8,#ff00e2,#ff00d0,#ff00bf)"></i><i style="margin-left:83px;width:208px;background:linear-gradient(90deg,#001dff,#0019ff,#0016ff,#0012ff,#000fff,#090bff,#1807ff,#2803ff,#3800ff,#4800ff,#5900ff,#6b00ff,#7d00ff,#9000ff,#a400ff,#b800ff,#cd00ff,#e300ff,#fa00ff,#ff00ee,#ff00da,#ff00c9)"></i><i style="margin-left:84px;width:202px;background:linear-gradient(90deg,#001aff,#0017ff,#0014ff,#0010ff,#000cff,#0d08ff,#1c04ff,#2c00ff,#3d00ff,#4e00ff,#5f00ff,#7100ff,#8400ff,#9700ff,#ac00ff,#c100ff,#d600ff,#ed00ff,#ff00fa,#ff00e4,#ff00d2)"></i><i style="margin-left:85px;width:195px;background:linear-gradient(90deg,#0018ff,#0015ff,#0011ff,#000dff,#020aff,#1106ff,#2002ff,#3100ff,#4100ff,#5300ff,#6400ff,#7700ff,#8a00ff,#9e00ff,#b300ff,#c800ff,#de00ff,#f500ff,#ff00f2,#ff00dd)"></i><i style="margin-left:87px;width:187px;background:linear-gradient(90deg,#0016ff,#0012ff,#000fff,#000bff,#0308ff,#1204ff,#2000ff,#3000ff,#4000ff,#5000ff,#6100ff,#7300ff,#8500ff,#9700ff,#ab00ff,#bf00ff,#d400ff,#e900ff,#ff00fe,#ff00e9)"></i><i style="margin-left:88px;width:181px;background:linear-gradient(90deg,#0014ff,#0010ff,#000cff,#0009ff,#0705ff,#1601ff,#2500ff,#3500ff,#4500ff,#5600ff,#6700ff,#7900ff,#8c00ff,#9f00ff,#b300ff,#c800ff,#dd00ff,#f400ff,#ff00f4)"></i><i style="margin-left:89px;width:174px;background:linear-gradient(90deg,#0011ff,#000eff,#000aff,#0006ff,#0a02ff,#1900ff,#2900ff,#3900ff,#4a00ff,#5b00ff,#6d00ff,#7f00ff,#9200ff,#a600ff,#ba00ff,#d000ff,#e600ff,#fd00ff)"></i><i style="margin-left:91px;width:166px;background:linear-gradient(90deg,#000fff,#000bff,#0007ff,#0004ff,#0f00ff,#1e00ff,#2e00ff,#3f00ff,#5000ff,#6100ff,#7300ff,#8600ff,#9a00ff,#ae00ff,#c300ff,#d800ff,#ef00ff)"></i><i style="margin-left:92px;width:160px;background:linear-gradient(90deg,#000dff,#0009ff,#0006ff,#0102ff,#0f00ff,#1e00ff,#2d00ff,#3d00ff,#4d00ff,#5e00ff,#6f00ff,#8100ff,#9300ff,#a600ff,#ba00ff,#cf00ff,#e400ff)"></i><i style="margin-left:93px;width:153px;background:linear-gradient(90deg,#000bff,#0007ff,#0003ff,#0400ff,#1300ff,#2200ff,#3100ff,#4100ff,#5200ff,#6300ff,#7500ff,#8700ff,#9a00ff,#ae00ff,#c200ff,#d700ff)"></i><i style="margin-left:95px;width:145px;background:linear-gradient(90deg,#0008ff,#0004ff,#0001ff,#0900ff,#1800ff,#2700ff,#3700ff,#4700ff,#5800ff,#6a00ff,#7c00ff,#8e00ff,#a200ff,#b600ff,#ca00ff)"></i><i style="margin-left:96px;width:139px;background:linear-gradient(90deg,#0006ff,#0002ff,#0000ff,#0900ff,#1700ff,#2600ff,#3500ff,#4500ff,#5500ff,#6500ff,#7600ff,#8800ff,#9a00ff,#ad00ff,#c000ff)"></i><i style="margin-left:98px;width:131px;background:linear-gradient(90deg,#0003ff,#0000ff,#0000ff,#0e00ff,#1c00ff,#2b00ff,#3a00ff,#4a00ff,#5b00ff,#6b00ff,#7d00ff,#8f00ff,#a200ff,#b500ff)"></i><i style="margin-left:99px;width:124px;background:linear-gradient(90deg,#0001ff,#0000ff,#0300ff,#1100ff,#2000ff,#2f00ff,#3f00ff,#4f00ff,#6000ff,#7200ff,#8400ff,#9600ff,#a900ff)"></i><i style="margin-left:101px;width:117px;background:linear-gradient(90deg,#0000ff,#0000ff,#0500ff,#1200ff,#2000ff,#2f00ff,#3e00ff,#4d00ff,#5c00ff,#6d00ff,#7d00ff,#8f00ff,#a000ff)"></i><i style="margin-left:103px;width:109px;background:linear-gradient(90deg,#0000ff,#0000ff,#0900ff,#1700ff,#2500ff,#3400ff,#4300ff,#5200ff,#6200ff,#7300ff,#8400ff,#9600ff)"></i><i style="margin-left:105px;width:101px;background:linear-gradient(90deg,#0000ff,#0000ff,#0d00ff,#1b00ff,#2a00ff,#3900ff,#4800ff,#5800ff,#6900ff,#7a00ff,#8b00ff)"></i><i style="margin-left:107px;width:94px;background:linear-gradient(90deg,#0000ff,#0400ff,#1200ff,#2100ff,#3000ff,#3f00ff,#4f00ff,#6000ff,#7100ff,#8300ff)"></i><i style="margin-left:109px;width:86px;background:linear-gradient(90deg,#0000ff,#0600ff,#1300ff,#2000ff,#2e00ff,#3c00ff,#4b00ff,#5a00ff,#6900ff,#7900ff)"></i><i style="margin-left:111px;width:78px;background:linear-gradient(90deg,#0000ff,#0a00ff,#1700ff,#2500ff,#3300ff,#4200ff,#5000ff,#6000ff,#7000ff)"></i><i style="margin-left:114px;width:70px;background:linear-gradient(90deg,#0200ff,#0f00ff,#1d00ff,#2b00ff,#3a00ff,#4900ff,#5800ff,#6800ff)"></i><i style="margin-left:116px;width:62px;background:linear-gradient(90deg,#0500ff,#1300ff,#2200ff,#3000ff,#3f00ff,#4f00ff,#5f00ff)"></i><i style="margin-left:119px;width:53px;background:linear-gradient(90deg,#0a00ff,#1900ff,#2700ff,#3600ff,#4600ff,#5600ff)"></i><i style="margin-left:122px;width:45px;background:linear-gradient(90deg,#0f00ff,#1e00ff,#2e00ff,#3e00ff,#4f00ff)"></i><i style="margin-left:125px;width:36px;background:linear-gradient(90deg,#1400ff,#2000ff,#2d00ff,#3a00ff,#4700ff)"></i><i style="margin-left:128px;width:27px;background:linear-gradient(90deg,#1900ff,#2500ff,#3200ff,#3f00ff)"></i><i style="margin-left:131px;width:19px;background:linear-gradient(90deg,#1e00ff,#2b00ff,#3800ff)"></i><i style="margin-left:134px;width:10px;background:linear-gradient(90deg,#2300ff,#3100ff)"></i>
</div>
<div class="cie" style="left:1603.5px;top:155px;width:231px;height:194.8px;">
<i class="q" style="background:linear-gradient(90deg,#b6ff00,#bfff00,#c8ff00,#d1ff00,#daff00,#e4ff00,#edff00,#f7ff00,#fffd00,#fff400,#ffeb00)"></i><i class="q" style="background:linear-gradient(90deg,#b7ff00,#c0ff00,#c9ff00,#d2ff00,#dbff00,#e5ff00,#eeff00,#f8ff00,#fffc00,#fff300,#ffea00)"></i><i class="q" style="background:linear-gradient(90deg,#b8ff00,#c1ff00,#caff00,#d3ff00,#dcff00,#e6ff00,#f0ff00,#f9ff00,#fffb00,#fff100,#ffe900)"></i><i class="q" style="background:linear-gradient(90deg,#b9ff00,#c2ff00,#cbff00,#d4ff00,#deff00,#e7ff00,#f1ff00,#fbff00,#fffa00,#fff000,#ffe700)"></i><i class="q" style="background:linear-gradient(90deg,#baff00,#c3ff00,#ccff00,#d5ff00,#dfff00,#e8ff00,#f2ff00,#fcff00,#fff800,#ffef00,#ffe600)"></i><i class="q" style="background:linear-gradient(90deg,#bbff00,#c4ff00,#cdff00,#d6ff00,#e0ff00,#e9ff00,#f3ff00,#fdff00,#fff700,#ffee00,#ffe500)"></i><i class="q" style="background:linear-gradient(90deg,#bcff00,#c5ff00,#ceff00,#d7ff00,#e1ff00,#eaff00,#f4ff00,#feff00,#fff600,#ffed00,#ffe400)"></i><i class="q" style="background:linear-gradient(90deg,#bdff00,#c6ff00,#cfff00,#d8ff00,#e2ff00,#ecff00,#f5ff00,#ffff00,#fff500,#ffec00,#ffe300)"></i><i class="q" style="background:linear-gradient(90deg,#beff00,#c7ff00,#d0ff00,#d9ff00,#e3ff00,#edff00,#f7ff00,#fffd00,#fff400,#ffeb00,#ffe200)"></i><i class="q" style="background:linear-gradient(90deg,#bfff00,#c8ff00,#d1ff00,#dbff00,#e4ff00,#eeff00,#f8ff00,#fffc00,#fff300,#ffea00,#ffe100)"></i><i class="q" style="background:linear-gradient(90deg,#c0ff00,#c9ff00,#d2ff00,#dcff00,#e5ff00,#efff00,#f9ff00,#fffb00,#fff100,#ffe800,#ffe000)"></i><i class="q" style="background:linear-gradient(90deg,#c1ff00,#caff00,#d3ff00,#ddff00,#e6ff00,#f0ff00,#faff00,#fffa00,#fff000,#ffe700,#ffdf00)"></i><i class="q" style="background:linear-gradient(90deg,#c2ff00,#cbff00,#d4ff00,#deff00,#e7ff00,#f1ff00,#fbff00,#fff900,#ffef00,#ffe600,#ffde00)"></i><i class="q" style="background:linear-gradient(90deg,#c3ff00,#ccff00,#d5ff00,#dfff00,#e9ff00,#f3ff00,#fdff00,#fff700,#ffee00,#ffe500,#ffdd00)"></i><i class="q" style="background:linear-gradient(90deg,#c4ff00,#cdff00,#d6ff00,#e0ff00,#eaff00,#f4ff00,#feff00,#fff600,#ffed00,#ffe400,#ffdc00)"></i><i class="q" style="background:linear-gradient(90deg,#c5ff00,#ceff00,#d7ff00,#e1ff00,#ebff00,#f5ff00,#ffff00,#fff500,#ffec00,#ffe300,#ffdb00)"></i><i class="q" style="background:linear-gradient(90deg,#c6ff00,#cfff00,#d9ff00,#e2ff00,#ecff00,#f6ff00,#fffe00,#fff400,#ffeb00,#ffe200,#ffda00)"></i><i class="q" style="background:linear-gradient(90deg,#c7ff00,#d0ff00,#daff00,#e3ff00,#edff00,#f7ff00,#fffd00,#fff300,#ffea00,#ffe100,#ffd900)"></i><i class="q" style="background:linear-gradient(90deg,#c8ff00,#d1ff00,#dbff00,#e4ff00,#eeff00,#f8ff00,#fffb00,#fff200,#ffe800,#ffe000,#ffd800)"></i><i class="q" style="background:linear-gradient(90deg,#c9ff00,#d2ff00,#dcff00,#e6ff00,#f0ff00,#faff00,#fffa00,#fff000,#ffe700,#ffdf00,#ffd700)"></i><i class="q" style="background:linear-gradient(90deg,#caff00,#d3ff00,#ddff00,#e7ff00,#f1ff00,#fbff00,#fff900,#ffef00,#ffe600,#ffde00,#ffd600)"></i><i class="q" style="background:linear-gradient(90deg,#cbff00,#d4ff00,#deff00,#e8ff00,#f2ff00,#fcff00,#fff800,#ffee00,#ffe500,#ffdd00,#ffd500)"></i><i class="q" style="background:linear-gradient(90deg,#ccff00,#d5ff00,#dfff00,#e9ff00,#f3ff00,#fdff00,#fff600,#ffed00,#ffe400,#ffdb00,#ffd300)"></i><i class="q" style="background:linear-gradient(90deg,#cdff00,#d7ff00,#e0ff00,#eaff00,#f4ff00,#ffff00,#fff500,#ffec00,#ffe300,#ffda00,#ffd200)"></i><i class="q" style="background:linear-gradient(90deg,#ceff00,#d8ff00,#e1ff00,#ebff00,#f6ff00,#fffe00,#fff400,#ffeb00,#ffe200,#ffd900,#ffd100)"></i><i class="q" style="background:linear-gradient(90deg,#cfff00,#d9ff00,#e3ff00,#edff00,#f7ff00,#fffd00,#fff300,#ffe900,#ffe100,#ffd800,#ffd000)"></i><i class="q" style="background:linear-gradient(90deg,#d0ff00,#daff00,#e4ff00,#eeff00,#f8ff00,#fffc00,#fff200,#ffe800,#ffe000,#ffd700,#ffcf00)"></i><i class="q" style="background:linear-gradient(90deg,#d1ff00,#dbff00,#e5ff00,#efff00,#f9ff00,#fffa00,#fff000,#ffe700,#ffde00,#ffd600,#ffce00)"></i><i class="q" style="background:linear-gradient(90deg,#d2ff00,#dcff00,#e6ff00,#f0ff00,#fbff00,#fff900,#ffef00,#ffe600,#ffdd00,#ffd500,#ffcd00)"></i><i class="q" style="background:linear-gradient(90deg,#d3ff00,#ddff00,#e7ff00,#f1ff00,#fcff00,#fff800,#ffee00,#ffe500,#ffdc00,#ffd400,#ffcc00)"></i><i class="q" style="background:linear-gradient(90deg,#d4ff00,#deff00,#e8ff00,#f3ff00,#fdff00,#fff700,#ffed00,#ffe400,#ffdb00,#ffd300,#ffcb00)"></i><i class="q" style="background:linear-gradient(90deg,#d6ff00,#dfff00,#eaff00,#f4ff00,#feff00,#fff500,#ffec00,#ffe300,#ffda00,#ffd200,#ffca00)"></i><i class="q" style="background:linear-gradient(90deg,#d7ff00,#e1ff00,#ebff00,#f5ff00,#fffe00,#fff400,#ffeb00,#ffe200,#ffd900,#ffd100,#ffc900)"></i><i class="q" style="background:linear-gradient(90deg,#d8ff00,#e2ff00,#ecff00,#f6ff00,#fffd00,#fff300,#ffe900,#ffe000,#ffd800,#ffd000,#ffc800)"></i><i class="q" style="background:linear-gradient(90deg,#d9ff00,#e3ff00,#edff00,#f8ff00,#fffc00,#fff200,#ffe800,#ffdf00,#ffd700,#ffcf00,#ffc700)"></i><i class="q" style="background:linear-gradient(90deg,#daff00,#e4ff00,#eeff00,#f9ff00,#fffb00,#fff100,#ffe700,#ffde00,#ffd600,#ffce00,#ffc700)"></i><i class="q" style="background:linear-gradient(90deg,#dbff00,#e5ff00,#f0ff00,#faff00,#fff900,#ffef00,#ffe600,#ffdd00,#ffd500,#ffcd00,#ffc600)"></i><i class="q" style="background:linear-gradient(90deg,#dcff00,#e6ff00,#f1ff00,#fbff00,#fff800,#ffee00,#ffe500,#ffdc00,#ffd400,#ffcc00,#ffc500)"></i><i class="q" style="background:linear-gradient(90deg,#ddff00,#e8ff00,#f2ff00,#fdff00,#fff700,#ffed00,#ffe400,#ffdb00,#ffd300,#ffcb00,#ffc400)"></i><i class="q" style="background:linear-gradient(90deg,#dfff00,#e9ff00,#f3ff00,#feff00,#fff600,#ffec00,#ffe300,#ffda00,#ffd200,#ffca00,#ffc300)"></i><i class="q" style="background:linear-gradient(90deg,#e0ff00,#eaff00,#f5ff00,#ffff00,#fff400,#ffeb00,#ffe100,#ffd900,#ffd100,#ffc900,#ffc200)"></i><i class="q" style="background:linear-gradient(90deg,#e1ff00,#ebff00,#f6ff00,#fffd00,#fff300,#ffe900,#ffe000,#ffd800,#ffd000,#ffc800,#ffc100)"></i><i class="q" style="background:linear-gradient(90deg,#e2ff00,#edff00,#f7ff00,#fffc00,#fff200,#ffe800,#ffdf00,#ffd700,#ffcf00,#ffc700,#ffc000)"></i><i class="q" style="background:linear-gradient(90deg,#e3ff00,#eeff00,#f8ff00,#fffb00,#fff100,#ffe700,#ffde00,#ffd600,#ffcd00,#ffc600,#ffbf00)"></i><i class="q" style="background:linear-gradient(90deg,#e5ff00,#efff00,#faff00,#fffa00,#ffef00,#ffe600,#ffdd00,#ffd400,#ffcc00,#ffc500,#ffbe00)"></i><i class="q" style="background:linear-gradient(90deg,#e6ff00,#f0ff00,#fbff00,#fff800,#ffee00,#ffe500,#ffdc00,#ffd300,#ffcb00,#ffc400,#ffbd00)"></i><i class="q" style="background:linear-gradient(90deg,#e7ff00,#f2ff00,#fcff00,#fff700,#ffed00,#ffe400,#ffdb00,#ffd200,#ffca00,#ffc300,#ffbc00)"></i><i class="q" style="background:linear-gradient(90deg,#e8ff00,#f3ff00,#feff00,#fff600,#ffec00,#ffe200,#ffda00,#ffd100,#ffc900,#ffc200,#ffbb00)"></i><i class="q" style="background:linear-gradient(90deg,#e9ff00,#f4ff00,#ffff00,#fff400,#ffeb00,#ffe100,#ffd800,#ffd000,#ffc800,#ffc100,#ffba00)"></i>
</div>
<svg width="1920" height="1040" viewBox="0 0 1920 1040">
<path d="M1294.1,668.1 1294.1,668.1 1294.0,668.1 1293.9,668.1 1293.8,668.2 1293.6,668.2 1293.5,668.2 1293.3,668.2 1293.1,668.2 1292.9,668.2 1292.6,668.2 1292.3,668.1 1291.9,668.0 1291.6,667.9 1291.3,667.7 1291.0,667.6 1290.7,667.4 1290.3,667.2 1289.9,666.9 1289.4,666.6 1288.8,666.2 1288.2,665.8 1287.6,665.4 1286.9,664.9 1286.2,664.4 1285.4,663.8 1284.5,663.2 1283.5,662.6 1282.3,661.8 1281.1,661.0 1279.8,660.1 1278.3,659.2 1276.8,658.2 1275.2,657.0 1273.4,655.7 1271.4,654.3 1269.4,652.6 1267.2,650.8 1265.0,648.8 1262.4,646.3 1259.6,643.2 1256.4,639.5 1253.0,635.1 1249.4,630.0 1245.4,624.0 1241.1,617.0 1236.5,608.7 1231.5,599.3 1226.1,588.3 1220.2,575.8 1213.9,561.7 1207.5,545.8 1201.1,527.9 1194.6,508.2 1188.3,486.9 1182.0,463.6 1175.9,438.8 1170.3,413.3 1165.4,387.3 1161.1,360.7 1157.7,334.8 1155.5,309.6 1154.2,285.1 1154.2,262.1 1155.6,240.5 1158.3,220.3 1162.4,202.5 1168.0,187.1 1175.0,174.1 1183.0,163.9 1191.9,156.8 1201.8,152.5 1212.1,150.2 1222.7,150.2 1233.8,152.1 1244.9,155.0 1256.0,158.5 1267.2,163.0 1278.2,167.7 1288.8,172.5 1299.3,177.6 1309.6,182.9 1319.8,188.3 1329.8,194.0 1339.8,199.9 1349.7,206.0 1359.7,212.3 1369.5,218.7 1379.4,225.2 1389.2,231.9 1399.0,238.7 1408.8,245.5 1418.5,252.5 1428.3,259.5 1438.1,266.6 1448.0,273.8 1457.8,281.0 1467.5,288.3 1477.3,295.5 1487.0,302.8 1496.8,310.1 1506.5,317.4 1516.1,324.6 1525.7,331.8 1535.2,339.0 1544.7,346.2 1554.0,353.3 1563.3,360.3 1572.4,367.2 1581.4,374.0 1590.2,380.7 1598.9,387.3 1607.5,393.7 1615.8,400.0 1623.9,406.2 1631.8,412.1 1639.4,417.9 1646.7,423.5 1653.6,428.7 1660.2,433.7 1666.5,438.5 1672.6,443.1 1678.4,447.5 1684.0,451.6 1689.1,455.5 1693.9,459.1 1698.4,462.5 1702.6,465.7 1706.5,468.7 1710.2,471.5 1713.5,474.0 1716.7,476.4 1719.6,478.6 1722.2,480.6 1724.7,482.5 1727.0,484.2 1729.2,485.8 1731.2,487.3 1733.0,488.8 1734.8,490.1 1736.5,491.4 1738.1,492.6 1739.5,493.7 1740.9,494.7 1742.2,495.7 1743.3,496.6 1744.4,497.4 1745.5,498.1 1746.4,498.8 1747.2,499.4 1747.9,500.0 1748.6,500.5 1749.2,501.0 1749.8,501.4 1750.3,501.8 1750.7,502.1 1751.2,502.5 1751.8,502.9 1752.3,503.4 1752.9,503.8 1753.3,504.1 1753.6,504.4 1754.0,504.6 1754.4,504.9 1754.8,505.2 1755.1,505.4Z M1710.1,471.3 1368.9,240.1 1274.3,633.7Z" fill="#000" fill-opacity="0.4" fill-rule="evenodd"/>
<rect x="1152" y="147.3" width="690.3" height="523.9000000000001" fill="none" stroke="#a4a4a4" stroke-width="1.6"/>
<text x="1483" y="142" font-size="15.5" text-anchor="middle" fill="#dcdcdc" textLength="81" lengthAdjust="spacingAndGlyphs">CIE 1931 xy</text>
<rect x="1151.0" y="671.2" width="1.6" height="6" fill="#dcdcdc"/>
<rect x="1146" y="670.4" width="6" height="1.6" fill="#dcdcdc"/>
<text x="1151.8" y="693.8" font-size="15.4" text-anchor="middle" fill="#dcdcdc">0</text>
<text x="1145" y="678.0" font-size="15.4" text-anchor="end" fill="#dcdcdc">0</text>
<rect x="1233.2" y="671.2" width="1.6" height="6" fill="#dcdcdc"/>
<rect x="1146" y="608.1" width="6" height="1.6" fill="#dcdcdc"/>
<text x="1234.0" y="693.8" font-size="15.4" text-anchor="middle" fill="#dcdcdc">0,1</text>
<text x="1145" y="615.7" font-size="15.4" text-anchor="end" fill="#dcdcdc">0,1</text>
<rect x="1315.4" y="671.2" width="1.6" height="6" fill="#dcdcdc"/>
<rect x="1146" y="545.7" width="6" height="1.6" fill="#dcdcdc"/>
<text x="1316.2" y="693.8" font-size="15.4" text-anchor="middle" fill="#dcdcdc">0,2</text>
<text x="1145" y="553.3" font-size="15.4" text-anchor="end" fill="#dcdcdc">0,2</text>
<rect x="1397.5" y="671.2" width="1.6" height="6" fill="#dcdcdc"/>
<rect x="1146" y="483.4" width="6" height="1.6" fill="#dcdcdc"/>
<text x="1398.3" y="693.8" font-size="15.4" text-anchor="middle" fill="#dcdcdc">0,3</text>
<text x="1145" y="491.0" font-size="15.4" text-anchor="end" fill="#dcdcdc">0,3</text>
<rect x="1479.7" y="671.2" width="1.6" height="6" fill="#dcdcdc"/>
<rect x="1146" y="421.1" width="6" height="1.6" fill="#dcdcdc"/>
<text x="1480.5" y="693.8" font-size="15.4" text-anchor="middle" fill="#dcdcdc">0,4</text>
<text x="1145" y="428.7" font-size="15.4" text-anchor="end" fill="#dcdcdc">0,4</text>
<rect x="1561.9" y="671.2" width="1.6" height="6" fill="#dcdcdc"/>
<rect x="1146" y="358.8" width="6" height="1.6" fill="#dcdcdc"/>
<text x="1562.7" y="693.8" font-size="15.4" text-anchor="middle" fill="#dcdcdc">0,5</text>
<text x="1145" y="366.4" font-size="15.4" text-anchor="end" fill="#dcdcdc">0,5</text>
<rect x="1644.0" y="671.2" width="1.6" height="6" fill="#dcdcdc"/>
<rect x="1146" y="296.4" width="6" height="1.6" fill="#dcdcdc"/>
<text x="1644.8" y="693.8" font-size="15.4" text-anchor="middle" fill="#dcdcdc">0,6</text>
<text x="1145" y="304.0" font-size="15.4" text-anchor="end" fill="#dcdcdc">0,6</text>
<rect x="1726.2" y="671.2" width="1.6" height="6" fill="#dcdcdc"/>
<rect x="1146" y="234.1" width="6" height="1.6" fill="#dcdcdc"/>
<text x="1727.0" y="693.8" font-size="15.4" text-anchor="middle" fill="#dcdcdc">0,7</text>
<text x="1145" y="241.7" font-size="15.4" text-anchor="end" fill="#dcdcdc">0,7</text>
<rect x="1808.4" y="671.2" width="1.6" height="6" fill="#dcdcdc"/>
<rect x="1146" y="171.8" width="6" height="1.6" fill="#dcdcdc"/>
<text x="1809.2" y="693.8" font-size="15.4" text-anchor="middle" fill="#dcdcdc">0,8</text>
<text x="1145" y="179.4" font-size="15.4" text-anchor="end" fill="#dcdcdc">0,8</text>
<clipPath id="ic"><rect x="1603.5" y="155" width="231" height="194.8"/></clipPath>
<g clip-path="url(#ic)"><path d="M499.3,2375.2 499.0,2375.3 498.5,2375.5 497.9,2375.6 497.3,2375.7 496.5,2375.9 495.6,2376.0 494.7,2376.1 493.7,2376.1 492.4,2376.0 490.7,2375.7 488.7,2375.4 486.8,2374.8 485.2,2374.0 483.5,2373.1 481.7,2372.0 479.8,2370.7 477.7,2369.3 475.3,2367.6 472.5,2365.6 469.4,2363.3 466.0,2360.8 462.5,2358.0 458.7,2354.9 454.5,2351.6 449.9,2348.1 444.9,2344.3 439.2,2340.0 432.9,2335.3 426.0,2330.1 418.5,2324.4 410.4,2318.4 401.9,2311.8 392.6,2304.4 382.5,2296.1 371.8,2287.0 360.2,2276.4 348.2,2264.9 335.3,2252.0 321.0,2235.6 304.9,2215.7 287.4,2192.3 268.3,2164.0 247.7,2131.1 225.5,2093.3 201.3,2048.0 175.2,1995.1 147.1,1934.7 116.8,1864.4 83.6,1784.2 48.1,1694.1 12.4,1592.4 -23.5,1477.9 -59.8,1351.8 -95.3,1215.2 -130.6,1066.4 -165.2,907.2 -196.5,744.4 -224.2,577.8 -248.5,407.6 -267.2,241.6 -280.0,80.5 -287.2,-76.4 -287.0,-224.0 -279.1,-362.4 -263.8,-491.5 -240.8,-605.6 -209.2,-703.9 -169.9,-787.2 -125.3,-852.8 -75.1,-898.1 -19.6,-925.6 38.2,-940.0 98.0,-940.5 160.1,-927.9 222.6,-909.6 285.1,-886.9 348.0,-858.5 409.7,-828.4 469.5,-797.6 528.2,-765.1 586.2,-731.2 643.3,-696.1 699.6,-659.6 755.7,-622.0 811.7,-583.1 867.4,-543.0 923.0,-502.0 978.2,-460.1 1033.3,-417.4 1088.4,-374.0 1143.4,-330.0 1198.3,-285.4 1253.3,-240.4 1308.4,-194.9 1363.6,-149.0 1418.7,-102.8 1473.6,-56.4 1528.4,-9.8 1583.2,36.8 1637.9,83.4 1692.5,130.0 1746.7,176.4 1800.6,222.7 1854.0,268.7 1907.0,314.4 1959.5,359.7 2011.5,404.5 2062.7,448.8 2113.3,492.4 2163.1,535.5 2211.9,577.6 2259.9,618.8 2306.8,659.2 2352.4,698.4 2396.6,736.6 2439.4,773.7 2480.4,809.2 2519.2,842.7 2556.2,874.6 2591.7,905.2 2626.0,934.7 2658.7,963.0 2689.6,989.6 2718.5,1014.4 2745.6,1037.5 2771.0,1059.2 2794.6,1079.6 2816.6,1098.7 2837.0,1116.4 2856.0,1132.8 2873.4,1147.9 2889.7,1162.0 2904.8,1175.0 2918.7,1186.9 2931.7,1198.0 2943.8,1208.4 2954.9,1218.1 2965.5,1227.2 2975.5,1235.9 2984.8,1244.0 2993.6,1251.6 3001.9,1258.8 3009.6,1265.4 3016.7,1271.6 3023.4,1277.3 3029.6,1282.4 3035.2,1287.2 3040.3,1291.6 3044.9,1295.5 3049.1,1299.2 3053.0,1302.6 3056.5,1305.6 3059.7,1308.4 3062.5,1310.8 3064.9,1312.9 3067.6,1315.2 3070.6,1317.9 3073.9,1320.7 3076.8,1323.2 3079.2,1325.3 3081.3,1327.1 3083.3,1328.8 3085.5,1330.8 3087.7,1332.7 3089.3,1334.0Z M2836.6,1115.2 919.3,-364.8 388.0,2155.2Z" fill="#000" fill-opacity="0.4" fill-rule="evenodd"/>
<path d="M-20000,-20000H20000V20000H-20000Z M499.3,2375.2 499.0,2375.3 498.5,2375.5 497.9,2375.6 497.3,2375.7 496.5,2375.9 495.6,2376.0 494.7,2376.1 493.7,2376.1 492.4,2376.0 490.7,2375.7 488.7,2375.4 486.8,2374.8 485.2,2374.0 483.5,2373.1 481.7,2372.0 479.8,2370.7 477.7,2369.3 475.3,2367.6 472.5,2365.6 469.4,2363.3 466.0,2360.8 462.5,2358.0 458.7,2354.9 454.5,2351.6 449.9,2348.1 444.9,2344.3 439.2,2340.0 432.9,2335.3 426.0,2330.1 418.5,2324.4 410.4,2318.4 401.9,2311.8 392.6,2304.4 382.5,2296.1 371.8,2287.0 360.2,2276.4 348.2,2264.9 335.3,2252.0 321.0,2235.6 304.9,2215.7 287.4,2192.3 268.3,2164.0 247.7,2131.1 225.5,2093.3 201.3,2048.0 175.2,1995.1 147.1,1934.7 116.8,1864.4 83.6,1784.2 48.1,1694.1 12.4,1592.4 -23.5,1477.9 -59.8,1351.8 -95.3,1215.2 -130.6,1066.4 -165.2,907.2 -196.5,744.4 -224.2,577.8 -248.5,407.6 -267.2,241.6 -280.0,80.5 -287.2,-76.4 -287.0,-224.0 -279.1,-362.4 -263.8,-491.5 -240.8,-605.6 -209.2,-703.9 -169.9,-787.2 -125.3,-852.8 -75.1,-898.1 -19.6,-925.6 38.2,-940.0 98.0,-940.5 160.1,-927.9 222.6,-909.6 285.1,-886.9 348.0,-858.5 409.7,-828.4 469.5,-797.6 528.2,-765.1 586.2,-731.2 643.3,-696.1 699.6,-659.6 755.7,-622.0 811.7,-583.1 867.4,-543.0 923.0,-502.0 978.2,-460.1 1033.3,-417.4 1088.4,-374.0 1143.4,-330.0 1198.3,-285.4 1253.3,-240.4 1308.4,-194.9 1363.6,-149.0 1418.7,-102.8 1473.6,-56.4 1528.4,-9.8 1583.2,36.8 1637.9,83.4 1692.5,130.0 1746.7,176.4 1800.6,222.7 1854.0,268.7 1907.0,314.4 1959.5,359.7 2011.5,404.5 2062.7,448.8 2113.3,492.4 2163.1,535.5 2211.9,577.6 2259.9,618.8 2306.8,659.2 2352.4,698.4 2396.6,736.6 2439.4,773.7 2480.4,809.2 2519.2,842.7 2556.2,874.6 2591.7,905.2 2626.0,934.7 2658.7,963.0 2689.6,989.6 2718.5,1014.4 2745.6,1037.5 2771.0,1059.2 2794.6,1079.6 2816.6,1098.7 2837.0,1116.4 2856.0,1132.8 2873.4,1147.9 2889.7,1162.0 2904.8,1175.0 2918.7,1186.9 2931.7,1198.0 2943.8,1208.4 2954.9,1218.1 2965.5,1227.2 2975.5,1235.9 2984.8,1244.0 2993.6,1251.6 3001.9,1258.8 3009.6,1265.4 3016.7,1271.6 3023.4,1277.3 3029.6,1282.4 3035.2,1287.2 3040.3,1291.6 3044.9,1295.5 3049.1,1299.2 3053.0,1302.6 3056.5,1305.6 3059.7,1308.4 3062.5,1310.8 3064.9,1312.9 3067.6,1315.2 3070.6,1317.9 3073.9,1320.7 3076.8,1323.2 3079.2,1325.3 3081.3,1327.1 3083.3,1328.8 3085.5,1330.8 3087.7,1332.7 3089.3,1334.0Z" fill="#262626" fill-rule="evenodd"/></g>
<rect x="1602.9" y="154.4" width="232.2" height="196.0" fill="none" stroke="#a0a0a0" stroke-width="1.6"/>
<rect x="1461.0" y="459.3" width="14" height="14" fill="none" stroke="#fff" stroke-opacity="0.9" stroke-width="1.9"/>
<rect x="1517.7" y="460.2" width="14" height="14" fill="none" stroke="#fff" stroke-opacity="0.9" stroke-width="1.9"/>
<rect x="1580.0" y="461.3" width="14" height="14" fill="none" stroke="#fff" stroke-opacity="0.9" stroke-width="1.9"/>
<rect x="1635.0" y="462.6" width="14" height="14" fill="none" stroke="#fff" stroke-opacity="0.9" stroke-width="1.9"/>
<rect x="1703.3" y="463.3" width="14" height="14" fill="none" stroke="#fff" stroke-opacity="0.9" stroke-width="1.9"/>
<rect x="1393.0" y="412.2" width="14" height="14" fill="none" stroke="#fff" stroke-opacity="0.9" stroke-width="1.9"/>
<rect x="1385.8" y="367.2" width="14" height="14" fill="none" stroke="#fff" stroke-opacity="0.9" stroke-width="1.9"/>
<rect x="1378.3" y="324.0" width="14" height="14" fill="none" stroke="#fff" stroke-opacity="0.9" stroke-width="1.9"/>
<rect x="1370.0" y="281.8" width="14" height="14" fill="none" stroke="#fff" stroke-opacity="0.9" stroke-width="1.9"/>
<rect x="1362.2" y="232.5" width="14" height="14" fill="none" stroke="#fff" stroke-opacity="0.9" stroke-width="1.9"/>
<rect x="1374.3" y="490.8" width="14" height="14" fill="none" stroke="#fff" stroke-opacity="0.9" stroke-width="1.9"/>
<rect x="1348.0" y="525.5" width="14" height="14" fill="none" stroke="#fff" stroke-opacity="0.9" stroke-width="1.9"/>
<rect x="1322.2" y="557.2" width="14" height="14" fill="none" stroke="#fff" stroke-opacity="0.9" stroke-width="1.9"/>
<rect x="1296.0" y="590.5" width="14" height="14" fill="none" stroke="#fff" stroke-opacity="0.9" stroke-width="1.9"/>
<rect x="1266.8" y="625.8" width="14" height="14" fill="none" stroke="#fff" stroke-opacity="0.9" stroke-width="1.9"/>
<rect x="1382.2" y="457.2" width="14" height="14" fill="none" stroke="#fff" stroke-opacity="0.9" stroke-width="1.9"/>
<rect x="1363.8" y="457.2" width="14" height="14" fill="none" stroke="#fff" stroke-opacity="0.9" stroke-width="1.9"/>
<rect x="1345.0" y="457.2" width="14" height="14" fill="none" stroke="#fff" stroke-opacity="0.9" stroke-width="1.9"/>
<rect x="1327.7" y="457.0" width="14" height="14" fill="none" stroke="#fff" stroke-opacity="0.9" stroke-width="1.9"/>
<rect x="1308.8" y="456.0" width="14" height="14" fill="none" stroke="#fff" stroke-opacity="0.9" stroke-width="1.9"/>
<rect x="1404.7" y="480.5" width="14" height="14" fill="none" stroke="#fff" stroke-opacity="0.9" stroke-width="1.9"/>
<rect x="1409.2" y="502.2" width="14" height="14" fill="none" stroke="#fff" stroke-opacity="0.9" stroke-width="1.9"/>
<rect x="1413.5" y="523.8" width="14" height="14" fill="none" stroke="#fff" stroke-opacity="0.9" stroke-width="1.9"/>
<rect x="1417.2" y="545.8" width="14" height="14" fill="none" stroke="#fff" stroke-opacity="0.9" stroke-width="1.9"/>
<rect x="1420.2" y="569.2" width="14" height="14" fill="none" stroke="#fff" stroke-opacity="0.9" stroke-width="1.9"/>
<rect x="1422.2" y="431.0" width="14" height="14" fill="none" stroke="#fff" stroke-opacity="0.9" stroke-width="1.9"/>
<rect x="1442.2" y="406.3" width="14" height="14" fill="none" stroke="#fff" stroke-opacity="0.9" stroke-width="1.9"/>
<rect x="1461.0" y="381.8" width="14" height="14" fill="none" stroke="#fff" stroke-opacity="0.9" stroke-width="1.9"/>
<rect x="1483.0" y="355.8" width="14" height="14" fill="none" stroke="#fff" stroke-opacity="0.9" stroke-width="1.9"/>
<rect x="1505.0" y="327.7" width="14" height="14" fill="none" stroke="#fff" stroke-opacity="0.9" stroke-width="1.9"/>
<rect x="1705.0" y="465.0" width="10.6" height="10.6" fill="none" stroke="#111" stroke-width="1.5"/>
<rect x="1401.4" y="458.6" width="13.8" height="13.8" fill="#fff" stroke="#000" stroke-width="1.7"/>
<circle cx="1408.3" cy="465.5" r="4.2" fill="#fff" stroke="#000" stroke-width="1.3"/>
<circle cx="1473.8" cy="468.7" r="4.3" fill="rgb(196, 150, 150)" stroke="rgb(39, 30, 30)" stroke-width="1.4"/>
<circle cx="1537.8" cy="468.7" r="4.3" fill="rgb(196, 120, 120)" stroke="rgb(39, 24, 24)" stroke-width="1.4"/>
<circle cx="1603.0" cy="470.0" r="4.3" fill="rgb(196, 95, 95)" stroke="rgb(39, 19, 19)" stroke-width="1.4"/>
<circle cx="1652.5" cy="470.0" r="4.3" fill="rgb(196, 72, 72)" stroke="rgb(39, 14, 14)" stroke-width="1.4"/>
<circle cx="1711.7" cy="471.3" r="4.3" fill="rgb(196, 25, 25)" stroke="rgb(39, 5, 5)" stroke-width="1.4"/>
<circle cx="1397.0" cy="419.2" r="4.3" fill="rgb(165, 186, 165)" stroke="rgb(33, 37, 33)" stroke-width="1.4"/>
<circle cx="1385.3" cy="370.0" r="4.3" fill="rgb(153, 186, 153)" stroke="rgb(30, 37, 30)" stroke-width="1.4"/>
<circle cx="1373.8" cy="320.7" r="4.3" fill="rgb(140, 186, 140)" stroke="rgb(28, 37, 28)" stroke-width="1.4"/>
<circle cx="1362.5" cy="274.2" r="4.3" fill="rgb(125, 186, 125)" stroke="rgb(25, 37, 25)" stroke-width="1.4"/>
<circle cx="1349.5" cy="222.2" r="4.3" fill="rgb(50, 186, 50)" stroke="rgb(10, 37, 10)" stroke-width="1.4"/>
<circle cx="1379.7" cy="500.3" r="4.3" fill="rgb(160, 160, 192)" stroke="rgb(32, 32, 38)" stroke-width="1.4"/>
<circle cx="1349.5" cy="536.7" r="4.3" fill="rgb(138, 138, 192)" stroke="rgb(27, 27, 38)" stroke-width="1.4"/>
<circle cx="1322.0" cy="570.0" r="4.3" fill="rgb(115, 115, 192)" stroke="rgb(23, 23, 38)" stroke-width="1.4"/>
<circle cx="1292.8" cy="603.3" r="4.3" fill="rgb(85, 85, 192)" stroke="rgb(5, 5, 100)" stroke-width="1.4"/>
<circle cx="1263.7" cy="638.3" r="4.3" fill="rgb(25, 25, 192)" stroke="rgb(5, 5, 100)" stroke-width="1.4"/>
<circle cx="1387.0" cy="465.5" r="4.3" fill="rgb(170, 182, 182)" stroke="rgb(34, 36, 36)" stroke-width="1.4"/>
<circle cx="1365.3" cy="465.5" r="4.3" fill="rgb(163, 182, 182)" stroke="rgb(32, 36, 36)" stroke-width="1.4"/>
<circle cx="1343.7" cy="464.2" r="4.3" fill="rgb(150, 182, 182)" stroke="rgb(30, 36, 36)" stroke-width="1.4"/>
<circle cx="1321.7" cy="464.2" r="4.3" fill="rgb(130, 182, 182)" stroke="rgb(26, 36, 36)" stroke-width="1.4"/>
<circle cx="1300.0" cy="462.8" r="4.3" fill="rgb(40, 182, 182)" stroke="rgb(8, 36, 36)" stroke-width="1.4"/>
<circle cx="1414.5" cy="488.7" r="4.3" fill="rgb(190, 165, 190)" stroke="rgb(38, 33, 38)" stroke-width="1.4"/>
<circle cx="1420.5" cy="510.5" r="4.3" fill="rgb(190, 140, 190)" stroke="rgb(38, 28, 38)" stroke-width="1.4"/>
<circle cx="1424.7" cy="533.7" r="4.3" fill="rgb(190, 120, 190)" stroke="rgb(38, 24, 38)" stroke-width="1.4"/>
<circle cx="1430.3" cy="554.2" r="4.3" fill="rgb(190, 90, 190)" stroke="rgb(38, 18, 38)" stroke-width="1.4"/>
<circle cx="1436.3" cy="574.2" r="4.3" fill="rgb(190, 20, 190)" stroke="rgb(38, 4, 38)" stroke-width="1.4"/>
<circle cx="1431.8" cy="438.0" r="4.3" fill="rgb(192, 192, 160)" stroke="rgb(38, 38, 32)" stroke-width="1.4"/>
<circle cx="1452.2" cy="414.7" r="4.3" fill="rgb(192, 192, 145)" stroke="rgb(38, 38, 29)" stroke-width="1.4"/>
<circle cx="1473.8" cy="388.8" r="4.3" fill="rgb(192, 192, 125)" stroke="rgb(38, 38, 25)" stroke-width="1.4"/>
<circle cx="1495.8" cy="362.8" r="4.3" fill="rgb(192, 192, 100)" stroke="rgb(38, 38, 20)" stroke-width="1.4"/>
<circle cx="1515.8" cy="337.0" r="4.3" fill="rgb(192, 192, 20)" stroke="rgb(38, 38, 4)" stroke-width="1.4"/>
<rect x="1710.6" y="244.6" width="14" height="14" fill="none" stroke="#fff" stroke-opacity="0.9" stroke-width="1.9"/>
<circle cx="1742" cy="254.8" r="4.3" fill="#c2bc16" stroke="#22220a" stroke-width="1.4"/>
</svg>
</body></html>
